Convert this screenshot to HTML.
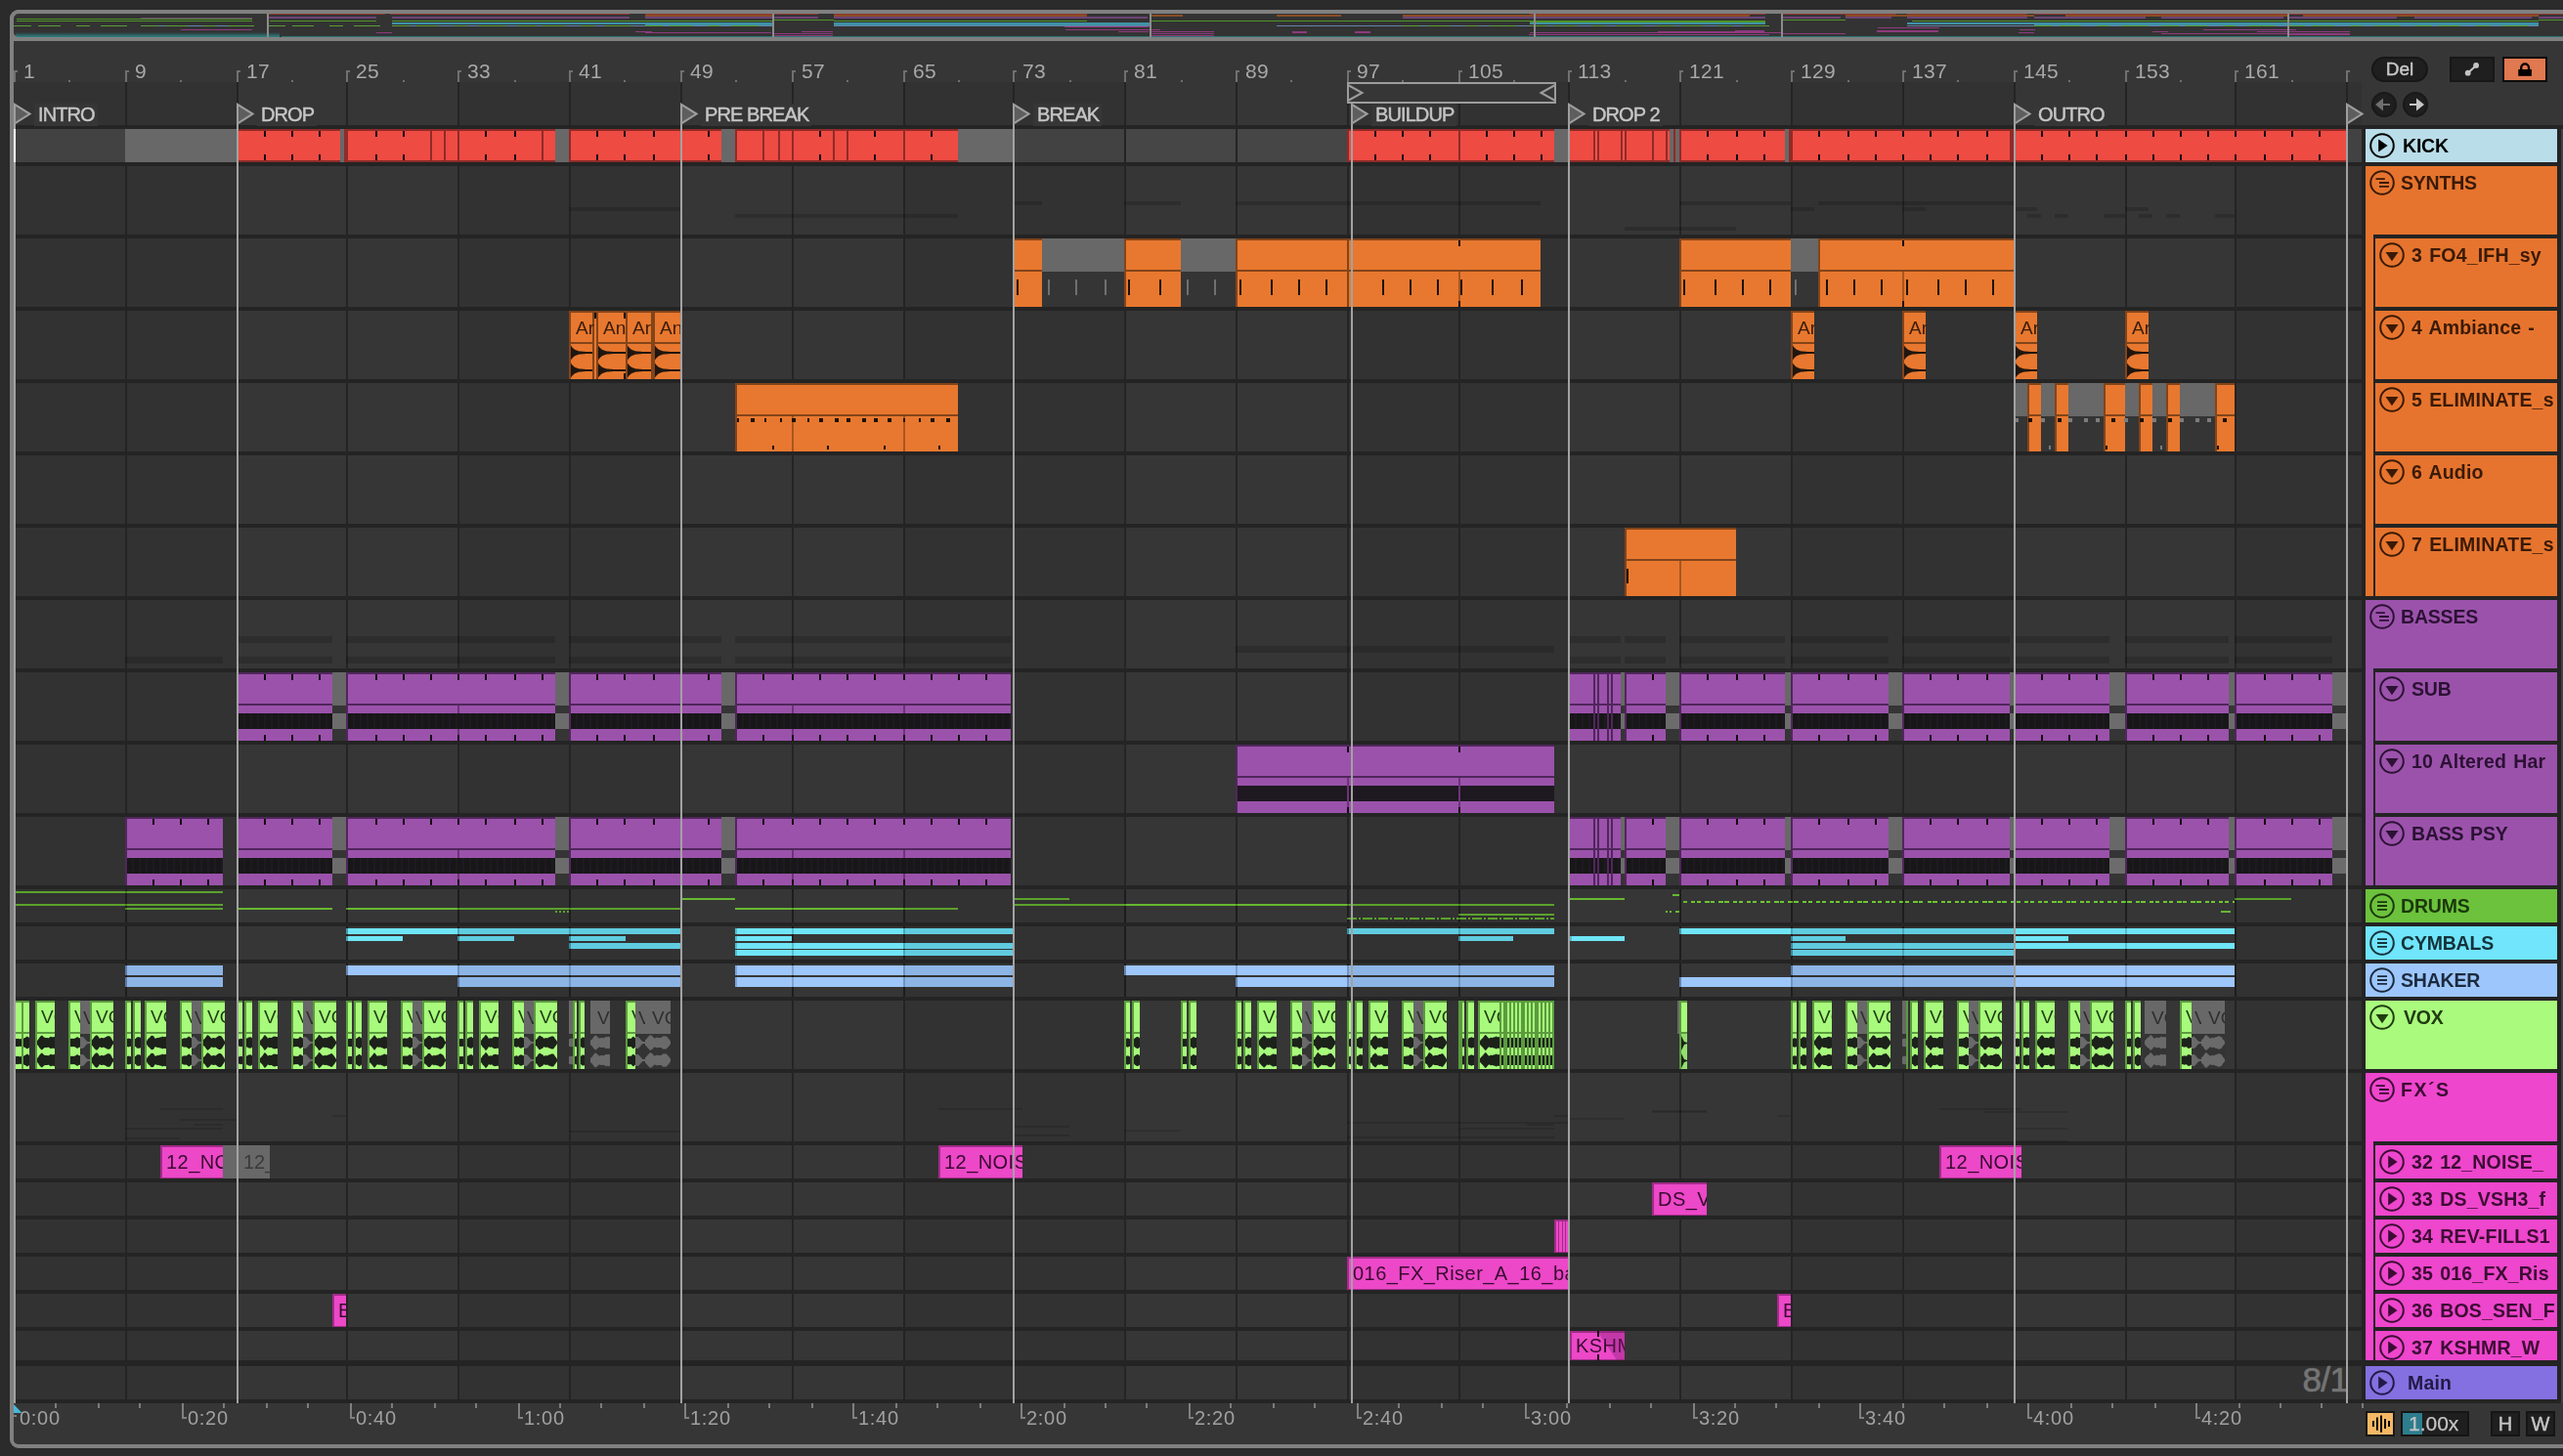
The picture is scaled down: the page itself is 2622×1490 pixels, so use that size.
<!DOCTYPE html><html><head><meta charset="utf-8"><title>Arrangement</title><style>
html,body{margin:0;padding:0}
body{width:2622px;height:1490px;overflow:hidden;position:relative;background:#2b2b2b;font-family:'Liberation Sans',sans-serif}
i,b,svg{position:absolute;display:block;font-style:normal;font-weight:normal}
b{white-space:nowrap;overflow:hidden;will-change:transform}
.rn{font:21px/20px 'Liberation Sans',sans-serif;color:#a8a8a8;letter-spacing:.3px}
.tn{font:20px/20px 'Liberation Sans',sans-serif;color:#a0a0a0;letter-spacing:.7px}
.ll{font:20px/20px 'Liberation Sans',sans-serif;color:#c6c6c6;height:22px;padding:1px 3px 0 4px;letter-spacing:-.9px;-webkit-text-stroke:.45px #c4c4c4}
.th{font:bold 19.5px/19px 'Liberation Sans',sans-serif;height:22px;letter-spacing:.2px;word-spacing:1.5px}
.ct{font:19px/19px 'Liberation Sans',sans-serif;height:22px}
</style></head><body><i style="left:10px;top:10px;width:2700px;height:1472px;box-sizing:border-box;border:4px solid #808080;border-radius:9px;background:#363636"></i><i style="left:14px;top:38px;width:2700px;height:4px;background:#808080"></i><i style="left:10px;top:10px;width:2700px;height:32px;box-sizing:border-box;border:4px solid #808080;border-radius:9px;border-right:none;background:#333"></i><i style="left:14px;top:84px;width:2402px;height:1352px;background:#363636"></i><i style="left:14px;top:84px;width:228px;height:1352px;background:#323232"></i><i style="left:468px;top:84px;width:228px;height:1352px;background:#323232"></i><i style="left:924px;top:84px;width:226px;height:1352px;background:#323232"></i><i style="left:1378px;top:84px;width:226px;height:1352px;background:#323232"></i><i style="left:1832px;top:84px;width:228px;height:1352px;background:#323232"></i><i style="left:2286px;top:84px;width:130px;height:1352px;background:#323232"></i><i style="left:14px;top:132px;width:2402px;height:34px;background:#464646"></i><i style="left:14px;top:132px;width:228px;height:34px;background:#424242"></i><i style="left:468px;top:132px;width:228px;height:34px;background:#424242"></i><i style="left:924px;top:132px;width:226px;height:34px;background:#424242"></i><i style="left:1378px;top:132px;width:226px;height:34px;background:#424242"></i><i style="left:1832px;top:132px;width:228px;height:34px;background:#424242"></i><i style="left:2286px;top:132px;width:130px;height:34px;background:#424242"></i><i style="left:128px;top:84px;width:2px;height:1352px;background:#242424"></i><i style="left:242px;top:84px;width:2px;height:1352px;background:#242424"></i><i style="left:354px;top:84px;width:2px;height:1352px;background:#242424"></i><i style="left:468px;top:84px;width:2px;height:1352px;background:#242424"></i><i style="left:582px;top:84px;width:2px;height:1352px;background:#242424"></i><i style="left:696px;top:84px;width:2px;height:1352px;background:#242424"></i><i style="left:810px;top:84px;width:2px;height:1352px;background:#242424"></i><i style="left:924px;top:84px;width:2px;height:1352px;background:#242424"></i><i style="left:1036px;top:84px;width:2px;height:1352px;background:#242424"></i><i style="left:1150px;top:84px;width:2px;height:1352px;background:#242424"></i><i style="left:1264px;top:84px;width:2px;height:1352px;background:#242424"></i><i style="left:1378px;top:84px;width:2px;height:1352px;background:#242424"></i><i style="left:1492px;top:84px;width:2px;height:1352px;background:#242424"></i><i style="left:1604px;top:84px;width:2px;height:1352px;background:#242424"></i><i style="left:1718px;top:84px;width:2px;height:1352px;background:#242424"></i><i style="left:1832px;top:84px;width:2px;height:1352px;background:#242424"></i><i style="left:1946px;top:84px;width:2px;height:1352px;background:#242424"></i><i style="left:2060px;top:84px;width:2px;height:1352px;background:#242424"></i><i style="left:2174px;top:84px;width:2px;height:1352px;background:#242424"></i><i style="left:2286px;top:84px;width:2px;height:1352px;background:#242424"></i><i style="left:2400px;top:84px;width:2px;height:1352px;background:#242424"></i><i style="left:14px;top:166px;width:2402px;height:4px;background:#242424"></i><i style="left:14px;top:240px;width:2402px;height:4px;background:#242424"></i><i style="left:14px;top:314px;width:2402px;height:4px;background:#242424"></i><i style="left:14px;top:388px;width:2402px;height:4px;background:#242424"></i><i style="left:14px;top:462px;width:2402px;height:4px;background:#242424"></i><i style="left:14px;top:536px;width:2402px;height:4px;background:#242424"></i><i style="left:14px;top:610px;width:2402px;height:4px;background:#242424"></i><i style="left:14px;top:684px;width:2402px;height:4px;background:#242424"></i><i style="left:14px;top:758px;width:2402px;height:4px;background:#242424"></i><i style="left:14px;top:832px;width:2402px;height:4px;background:#242424"></i><i style="left:14px;top:906px;width:2402px;height:4px;background:#242424"></i><i style="left:14px;top:944px;width:2402px;height:4px;background:#242424"></i><i style="left:14px;top:982px;width:2402px;height:4px;background:#242424"></i><i style="left:14px;top:1020px;width:2402px;height:4px;background:#242424"></i><i style="left:14px;top:1094px;width:2402px;height:4px;background:#242424"></i><i style="left:14px;top:1168px;width:2402px;height:4px;background:#242424"></i><i style="left:14px;top:1206px;width:2402px;height:4px;background:#242424"></i><i style="left:14px;top:1244px;width:2402px;height:4px;background:#242424"></i><i style="left:14px;top:1282px;width:2402px;height:4px;background:#242424"></i><i style="left:14px;top:1320px;width:2402px;height:4px;background:#242424"></i><i style="left:14px;top:1358px;width:2402px;height:4px;background:#242424"></i><i style="left:14px;top:1392px;width:2402px;height:6px;background:#242424"></i><i style="left:14px;top:1432px;width:2402px;height:4px;background:#242424"></i><i style="left:14px;top:128px;width:2402px;height:4px;background:#242424"></i><i style="left:128px;top:132px;width:114px;height:34px;background:#686868"></i><i style="left:242px;top:132px;width:106px;height:34px;background:#ee4b43"></i><i style="left:242px;top:132px;width:106px;height:2px;background:#8f2b28"></i><i style="left:242px;top:164px;width:106px;height:2px;background:#8f2b28"></i><i style="left:242px;top:132px;width:2px;height:34px;background:#8f2b28"></i><i style="left:270px;top:134px;width:2px;height:6px;background:#140a12"></i><i style="left:270px;top:158px;width:2px;height:6px;background:#140a12"></i><i style="left:298px;top:134px;width:2px;height:6px;background:#140a12"></i><i style="left:298px;top:158px;width:2px;height:6px;background:#140a12"></i><i style="left:326px;top:134px;width:2px;height:6px;background:#140a12"></i><i style="left:326px;top:158px;width:2px;height:6px;background:#140a12"></i><i style="left:348px;top:132px;width:4px;height:34px;background:#686868"></i><i style="left:352px;top:132px;width:2px;height:34px;background:#ee4b43"></i><i style="left:352px;top:132px;width:2px;height:2px;background:#8f2b28"></i><i style="left:352px;top:164px;width:2px;height:2px;background:#8f2b28"></i><i style="left:352px;top:132px;width:2px;height:34px;background:#8f2b28"></i><i style="left:354px;top:132px;width:86px;height:34px;background:#ee4b43"></i><i style="left:354px;top:132px;width:86px;height:2px;background:#8f2b28"></i><i style="left:354px;top:164px;width:86px;height:2px;background:#8f2b28"></i><i style="left:354px;top:132px;width:2px;height:34px;background:#8f2b28"></i><i style="left:384px;top:134px;width:2px;height:6px;background:#140a12"></i><i style="left:384px;top:158px;width:2px;height:6px;background:#140a12"></i><i style="left:412px;top:134px;width:2px;height:6px;background:#140a12"></i><i style="left:412px;top:158px;width:2px;height:6px;background:#140a12"></i><i style="left:440px;top:132px;width:14px;height:34px;background:#ee4b43"></i><i style="left:440px;top:132px;width:14px;height:2px;background:#8f2b28"></i><i style="left:440px;top:164px;width:14px;height:2px;background:#8f2b28"></i><i style="left:440px;top:132px;width:2px;height:34px;background:#8f2b28"></i><i style="left:454px;top:132px;width:14px;height:34px;background:#ee4b43"></i><i style="left:454px;top:132px;width:14px;height:2px;background:#8f2b28"></i><i style="left:454px;top:164px;width:14px;height:2px;background:#8f2b28"></i><i style="left:454px;top:132px;width:2px;height:34px;background:#8f2b28"></i><i style="left:468px;top:132px;width:86px;height:34px;background:#ee4b43"></i><i style="left:468px;top:132px;width:86px;height:2px;background:#8f2b28"></i><i style="left:468px;top:164px;width:86px;height:2px;background:#8f2b28"></i><i style="left:468px;top:132px;width:2px;height:34px;background:#8f2b28"></i><i style="left:496px;top:134px;width:2px;height:6px;background:#140a12"></i><i style="left:496px;top:158px;width:2px;height:6px;background:#140a12"></i><i style="left:526px;top:134px;width:2px;height:6px;background:#140a12"></i><i style="left:526px;top:158px;width:2px;height:6px;background:#140a12"></i><i style="left:554px;top:132px;width:14px;height:34px;background:#ee4b43"></i><i style="left:554px;top:132px;width:14px;height:2px;background:#8f2b28"></i><i style="left:554px;top:164px;width:14px;height:2px;background:#8f2b28"></i><i style="left:554px;top:132px;width:2px;height:34px;background:#8f2b28"></i><i style="left:568px;top:132px;width:14px;height:34px;background:#686868"></i><i style="left:582px;top:132px;width:156px;height:34px;background:#ee4b43"></i><i style="left:582px;top:132px;width:156px;height:2px;background:#8f2b28"></i><i style="left:582px;top:164px;width:156px;height:2px;background:#8f2b28"></i><i style="left:582px;top:132px;width:2px;height:34px;background:#8f2b28"></i><i style="left:610px;top:134px;width:2px;height:6px;background:#140a12"></i><i style="left:610px;top:158px;width:2px;height:6px;background:#140a12"></i><i style="left:638px;top:134px;width:2px;height:6px;background:#140a12"></i><i style="left:638px;top:158px;width:2px;height:6px;background:#140a12"></i><i style="left:668px;top:134px;width:2px;height:6px;background:#140a12"></i><i style="left:668px;top:158px;width:2px;height:6px;background:#140a12"></i><i style="left:696px;top:134px;width:2px;height:6px;background:#140a12"></i><i style="left:696px;top:158px;width:2px;height:6px;background:#140a12"></i><i style="left:724px;top:134px;width:2px;height:6px;background:#140a12"></i><i style="left:724px;top:158px;width:2px;height:6px;background:#140a12"></i><i style="left:738px;top:132px;width:14px;height:34px;background:#686868"></i><i style="left:752px;top:132px;width:28px;height:34px;background:#ee4b43"></i><i style="left:752px;top:132px;width:28px;height:2px;background:#8f2b28"></i><i style="left:752px;top:164px;width:28px;height:2px;background:#8f2b28"></i><i style="left:752px;top:132px;width:2px;height:34px;background:#8f2b28"></i><i style="left:780px;top:132px;width:16px;height:34px;background:#ee4b43"></i><i style="left:780px;top:132px;width:16px;height:2px;background:#8f2b28"></i><i style="left:780px;top:164px;width:16px;height:2px;background:#8f2b28"></i><i style="left:780px;top:132px;width:2px;height:34px;background:#8f2b28"></i><i style="left:796px;top:132px;width:14px;height:34px;background:#ee4b43"></i><i style="left:796px;top:132px;width:14px;height:2px;background:#8f2b28"></i><i style="left:796px;top:164px;width:14px;height:2px;background:#8f2b28"></i><i style="left:796px;top:132px;width:2px;height:34px;background:#8f2b28"></i><i style="left:810px;top:132px;width:42px;height:34px;background:#ee4b43"></i><i style="left:810px;top:132px;width:42px;height:2px;background:#8f2b28"></i><i style="left:810px;top:164px;width:42px;height:2px;background:#8f2b28"></i><i style="left:810px;top:132px;width:2px;height:34px;background:#8f2b28"></i><i style="left:838px;top:134px;width:2px;height:6px;background:#140a12"></i><i style="left:838px;top:158px;width:2px;height:6px;background:#140a12"></i><i style="left:852px;top:132px;width:14px;height:34px;background:#ee4b43"></i><i style="left:852px;top:132px;width:14px;height:2px;background:#8f2b28"></i><i style="left:852px;top:164px;width:14px;height:2px;background:#8f2b28"></i><i style="left:852px;top:132px;width:2px;height:34px;background:#8f2b28"></i><i style="left:866px;top:132px;width:58px;height:34px;background:#ee4b43"></i><i style="left:866px;top:132px;width:58px;height:2px;background:#8f2b28"></i><i style="left:866px;top:164px;width:58px;height:2px;background:#8f2b28"></i><i style="left:866px;top:132px;width:2px;height:34px;background:#8f2b28"></i><i style="left:894px;top:134px;width:2px;height:6px;background:#140a12"></i><i style="left:894px;top:158px;width:2px;height:6px;background:#140a12"></i><i style="left:924px;top:132px;width:56px;height:34px;background:#ee4b43"></i><i style="left:924px;top:132px;width:56px;height:2px;background:#8f2b28"></i><i style="left:924px;top:164px;width:56px;height:2px;background:#8f2b28"></i><i style="left:924px;top:132px;width:2px;height:34px;background:#8f2b28"></i><i style="left:952px;top:134px;width:2px;height:6px;background:#140a12"></i><i style="left:952px;top:158px;width:2px;height:6px;background:#140a12"></i><i style="left:980px;top:132px;width:56px;height:34px;background:#686868"></i><i style="left:1378px;top:132px;width:114px;height:34px;background:#ee4b43"></i><i style="left:1378px;top:132px;width:114px;height:2px;background:#8f2b28"></i><i style="left:1378px;top:164px;width:114px;height:2px;background:#8f2b28"></i><i style="left:1378px;top:132px;width:2px;height:34px;background:#8f2b28"></i><i style="left:1406px;top:134px;width:2px;height:6px;background:#140a12"></i><i style="left:1406px;top:158px;width:2px;height:6px;background:#140a12"></i><i style="left:1434px;top:134px;width:2px;height:6px;background:#140a12"></i><i style="left:1434px;top:158px;width:2px;height:6px;background:#140a12"></i><i style="left:1462px;top:134px;width:2px;height:6px;background:#140a12"></i><i style="left:1462px;top:158px;width:2px;height:6px;background:#140a12"></i><i style="left:1492px;top:132px;width:98px;height:34px;background:#ee4b43"></i><i style="left:1492px;top:132px;width:98px;height:2px;background:#8f2b28"></i><i style="left:1492px;top:164px;width:98px;height:2px;background:#8f2b28"></i><i style="left:1492px;top:132px;width:2px;height:34px;background:#8f2b28"></i><i style="left:1520px;top:134px;width:2px;height:6px;background:#140a12"></i><i style="left:1520px;top:158px;width:2px;height:6px;background:#140a12"></i><i style="left:1548px;top:134px;width:2px;height:6px;background:#140a12"></i><i style="left:1548px;top:158px;width:2px;height:6px;background:#140a12"></i><i style="left:1576px;top:134px;width:2px;height:6px;background:#140a12"></i><i style="left:1576px;top:158px;width:2px;height:6px;background:#140a12"></i><i style="left:1590px;top:132px;width:14px;height:34px;background:#686868"></i><i style="left:1604px;top:132px;width:26px;height:34px;background:#ee4b43"></i><i style="left:1604px;top:132px;width:26px;height:2px;background:#8f2b28"></i><i style="left:1604px;top:164px;width:26px;height:2px;background:#8f2b28"></i><i style="left:1604px;top:132px;width:2px;height:34px;background:#8f2b28"></i><i style="left:1630px;top:132px;width:4px;height:34px;background:#ff5148"></i><i style="left:1630px;top:132px;width:4px;height:2px;background:#8f2b28"></i><i style="left:1630px;top:164px;width:4px;height:2px;background:#8f2b28"></i><i style="left:1630px;top:132px;width:2px;height:34px;background:#8f2b28"></i><i style="left:1634px;top:132px;width:24px;height:34px;background:#ee4b43"></i><i style="left:1634px;top:132px;width:24px;height:2px;background:#8f2b28"></i><i style="left:1634px;top:164px;width:24px;height:2px;background:#8f2b28"></i><i style="left:1634px;top:132px;width:2px;height:34px;background:#8f2b28"></i><i style="left:1658px;top:132px;width:4px;height:34px;background:#ff5148"></i><i style="left:1658px;top:132px;width:4px;height:2px;background:#8f2b28"></i><i style="left:1658px;top:164px;width:4px;height:2px;background:#8f2b28"></i><i style="left:1658px;top:132px;width:2px;height:34px;background:#8f2b28"></i><i style="left:1662px;top:132px;width:28px;height:34px;background:#ee4b43"></i><i style="left:1662px;top:132px;width:28px;height:2px;background:#8f2b28"></i><i style="left:1662px;top:164px;width:28px;height:2px;background:#8f2b28"></i><i style="left:1662px;top:132px;width:2px;height:34px;background:#8f2b28"></i><i style="left:1690px;top:132px;width:14px;height:34px;background:#ee4b43"></i><i style="left:1690px;top:132px;width:14px;height:2px;background:#8f2b28"></i><i style="left:1690px;top:164px;width:14px;height:2px;background:#8f2b28"></i><i style="left:1690px;top:132px;width:2px;height:34px;background:#8f2b28"></i><i style="left:1704px;top:132px;width:4px;height:34px;background:#ee4b43"></i><i style="left:1704px;top:132px;width:4px;height:2px;background:#8f2b28"></i><i style="left:1704px;top:164px;width:4px;height:2px;background:#8f2b28"></i><i style="left:1704px;top:132px;width:2px;height:34px;background:#8f2b28"></i><i style="left:1708px;top:132px;width:4px;height:34px;background:#686868"></i><i style="left:1712px;top:132px;width:2px;height:34px;background:#8f2b28"></i><i style="left:1714px;top:132px;width:4px;height:34px;background:#686868"></i><i style="left:1718px;top:132px;width:108px;height:34px;background:#ee4b43"></i><i style="left:1718px;top:132px;width:108px;height:2px;background:#8f2b28"></i><i style="left:1718px;top:164px;width:108px;height:2px;background:#8f2b28"></i><i style="left:1718px;top:132px;width:2px;height:34px;background:#8f2b28"></i><i style="left:1746px;top:134px;width:2px;height:6px;background:#140a12"></i><i style="left:1746px;top:158px;width:2px;height:6px;background:#140a12"></i><i style="left:1776px;top:134px;width:2px;height:6px;background:#140a12"></i><i style="left:1776px;top:158px;width:2px;height:6px;background:#140a12"></i><i style="left:1804px;top:134px;width:2px;height:6px;background:#140a12"></i><i style="left:1804px;top:158px;width:2px;height:6px;background:#140a12"></i><i style="left:1826px;top:132px;width:4px;height:34px;background:#686868"></i><i style="left:1830px;top:132px;width:2px;height:34px;background:#8f2b28"></i><i style="left:1832px;top:132px;width:224px;height:34px;background:#ee4b43"></i><i style="left:1832px;top:132px;width:224px;height:2px;background:#8f2b28"></i><i style="left:1832px;top:164px;width:224px;height:2px;background:#8f2b28"></i><i style="left:1832px;top:132px;width:2px;height:34px;background:#8f2b28"></i><i style="left:1860px;top:134px;width:2px;height:6px;background:#140a12"></i><i style="left:1860px;top:158px;width:2px;height:6px;background:#140a12"></i><i style="left:1890px;top:134px;width:2px;height:6px;background:#140a12"></i><i style="left:1890px;top:158px;width:2px;height:6px;background:#140a12"></i><i style="left:1918px;top:134px;width:2px;height:6px;background:#140a12"></i><i style="left:1918px;top:158px;width:2px;height:6px;background:#140a12"></i><i style="left:1946px;top:134px;width:2px;height:6px;background:#140a12"></i><i style="left:1946px;top:158px;width:2px;height:6px;background:#140a12"></i><i style="left:1974px;top:134px;width:2px;height:6px;background:#140a12"></i><i style="left:1974px;top:158px;width:2px;height:6px;background:#140a12"></i><i style="left:2002px;top:134px;width:2px;height:6px;background:#140a12"></i><i style="left:2002px;top:158px;width:2px;height:6px;background:#140a12"></i><i style="left:2032px;top:134px;width:2px;height:6px;background:#140a12"></i><i style="left:2032px;top:158px;width:2px;height:6px;background:#140a12"></i><i style="left:2056px;top:132px;width:4px;height:34px;background:#8f2b28"></i><i style="left:2060px;top:132px;width:340px;height:34px;background:#ee4b43"></i><i style="left:2060px;top:132px;width:340px;height:2px;background:#8f2b28"></i><i style="left:2060px;top:164px;width:340px;height:2px;background:#8f2b28"></i><i style="left:2060px;top:132px;width:2px;height:34px;background:#8f2b28"></i><i style="left:2088px;top:134px;width:2px;height:6px;background:#140a12"></i><i style="left:2088px;top:158px;width:2px;height:6px;background:#140a12"></i><i style="left:2116px;top:134px;width:2px;height:6px;background:#140a12"></i><i style="left:2116px;top:158px;width:2px;height:6px;background:#140a12"></i><i style="left:2144px;top:134px;width:2px;height:6px;background:#140a12"></i><i style="left:2144px;top:158px;width:2px;height:6px;background:#140a12"></i><i style="left:2174px;top:134px;width:2px;height:6px;background:#140a12"></i><i style="left:2174px;top:158px;width:2px;height:6px;background:#140a12"></i><i style="left:2202px;top:134px;width:2px;height:6px;background:#140a12"></i><i style="left:2202px;top:158px;width:2px;height:6px;background:#140a12"></i><i style="left:2230px;top:134px;width:2px;height:6px;background:#140a12"></i><i style="left:2230px;top:158px;width:2px;height:6px;background:#140a12"></i><i style="left:2258px;top:134px;width:2px;height:6px;background:#140a12"></i><i style="left:2258px;top:158px;width:2px;height:6px;background:#140a12"></i><i style="left:2286px;top:134px;width:2px;height:6px;background:#140a12"></i><i style="left:2286px;top:158px;width:2px;height:6px;background:#140a12"></i><i style="left:2316px;top:134px;width:2px;height:6px;background:#140a12"></i><i style="left:2316px;top:158px;width:2px;height:6px;background:#140a12"></i><i style="left:2344px;top:134px;width:2px;height:6px;background:#140a12"></i><i style="left:2344px;top:158px;width:2px;height:6px;background:#140a12"></i><i style="left:2372px;top:134px;width:2px;height:6px;background:#140a12"></i><i style="left:2372px;top:158px;width:2px;height:6px;background:#140a12"></i><i style="left:1036px;top:244px;width:30px;height:70px;background:#e8782f"></i><i style="left:1036px;top:244px;width:30px;height:2px;background:#83441a"></i><i style="left:1036px;top:244px;width:2px;height:70px;background:#83441a"></i><i style="left:1036px;top:276px;width:30px;height:2px;background:#83441a"></i><i style="left:1150px;top:244px;width:58px;height:70px;background:#e8782f"></i><i style="left:1150px;top:244px;width:58px;height:2px;background:#83441a"></i><i style="left:1150px;top:244px;width:2px;height:70px;background:#83441a"></i><i style="left:1150px;top:276px;width:58px;height:2px;background:#83441a"></i><i style="left:1264px;top:244px;width:114px;height:70px;background:#e8782f"></i><i style="left:1264px;top:244px;width:114px;height:2px;background:#83441a"></i><i style="left:1264px;top:244px;width:2px;height:70px;background:#83441a"></i><i style="left:1264px;top:276px;width:114px;height:2px;background:#83441a"></i><i style="left:1378px;top:244px;width:198px;height:70px;background:#e8782f"></i><i style="left:1378px;top:244px;width:198px;height:2px;background:#83441a"></i><i style="left:1378px;top:244px;width:2px;height:70px;background:#83441a"></i><i style="left:1378px;top:276px;width:198px;height:2px;background:#83441a"></i><i style="left:1492px;top:278px;width:2px;height:36px;background:#a85620"></i><i style="left:1492px;top:246px;width:2px;height:6px;background:#140a12"></i><i style="left:1492px;top:308px;width:2px;height:6px;background:#140a12"></i><i style="left:1718px;top:244px;width:114px;height:70px;background:#e8782f"></i><i style="left:1718px;top:244px;width:114px;height:2px;background:#83441a"></i><i style="left:1718px;top:244px;width:2px;height:70px;background:#83441a"></i><i style="left:1718px;top:276px;width:114px;height:2px;background:#83441a"></i><i style="left:1860px;top:244px;width:200px;height:70px;background:#e8782f"></i><i style="left:1860px;top:244px;width:200px;height:2px;background:#83441a"></i><i style="left:1860px;top:244px;width:2px;height:70px;background:#83441a"></i><i style="left:1860px;top:276px;width:200px;height:2px;background:#83441a"></i><i style="left:1946px;top:278px;width:2px;height:36px;background:#a85620"></i><i style="left:1946px;top:246px;width:2px;height:6px;background:#140a12"></i><i style="left:1946px;top:308px;width:2px;height:6px;background:#140a12"></i><i style="left:1066px;top:244px;width:84px;height:34px;background:#686868"></i><i style="left:1066px;top:278px;width:84px;height:36px;background:#353535"></i><i style="left:1208px;top:244px;width:56px;height:34px;background:#686868"></i><i style="left:1208px;top:278px;width:56px;height:36px;background:#353535"></i><i style="left:1832px;top:244px;width:28px;height:34px;background:#686868"></i><i style="left:1832px;top:278px;width:28px;height:36px;background:#353535"></i><i style="left:1040px;top:286px;width:2px;height:16px;background:#1c1208"></i><i style="left:1154px;top:286px;width:2px;height:16px;background:#1c1208"></i><i style="left:1186px;top:286px;width:2px;height:16px;background:#1c1208"></i><i style="left:1268px;top:286px;width:2px;height:16px;background:#1c1208"></i><i style="left:1300px;top:286px;width:2px;height:16px;background:#1c1208"></i><i style="left:1328px;top:286px;width:2px;height:16px;background:#1c1208"></i><i style="left:1356px;top:286px;width:2px;height:16px;background:#1c1208"></i><i style="left:1414px;top:286px;width:2px;height:16px;background:#1c1208"></i><i style="left:1442px;top:286px;width:2px;height:16px;background:#1c1208"></i><i style="left:1470px;top:286px;width:2px;height:16px;background:#1c1208"></i><i style="left:1494px;top:286px;width:2px;height:16px;background:#1c1208"></i><i style="left:1526px;top:286px;width:2px;height:16px;background:#1c1208"></i><i style="left:1556px;top:286px;width:2px;height:16px;background:#1c1208"></i><i style="left:1722px;top:286px;width:2px;height:16px;background:#1c1208"></i><i style="left:1754px;top:286px;width:2px;height:16px;background:#1c1208"></i><i style="left:1782px;top:286px;width:2px;height:16px;background:#1c1208"></i><i style="left:1810px;top:286px;width:2px;height:16px;background:#1c1208"></i><i style="left:1868px;top:286px;width:2px;height:16px;background:#1c1208"></i><i style="left:1896px;top:286px;width:2px;height:16px;background:#1c1208"></i><i style="left:1924px;top:286px;width:2px;height:16px;background:#1c1208"></i><i style="left:1950px;top:286px;width:2px;height:16px;background:#1c1208"></i><i style="left:1982px;top:286px;width:2px;height:16px;background:#1c1208"></i><i style="left:2010px;top:286px;width:2px;height:16px;background:#1c1208"></i><i style="left:2038px;top:286px;width:2px;height:16px;background:#1c1208"></i><i style="left:1072px;top:286px;width:2px;height:16px;background:#707070"></i><i style="left:1100px;top:286px;width:2px;height:16px;background:#707070"></i><i style="left:1130px;top:286px;width:2px;height:16px;background:#707070"></i><i style="left:1214px;top:286px;width:2px;height:16px;background:#707070"></i><i style="left:1242px;top:286px;width:2px;height:16px;background:#707070"></i><i style="left:1836px;top:286px;width:2px;height:16px;background:#707070"></i><i style="left:582px;top:318px;width:26px;height:70px;background:#e8782f"></i><i style="left:582px;top:318px;width:26px;height:2px;background:#83441a"></i><i style="left:582px;top:318px;width:2px;height:70px;background:#83441a"></i><i style="left:582px;top:350px;width:26px;height:2px;background:#83441a"></i><svg style="left:582px;top:352px" width="26" height="36" viewBox="0 0 26 36"><path d="M2.0,1.4 L3.0,2.9 L4.0,4.1 L5.0,5.0 L6.0,5.7 L7.0,6.2 L8.0,6.6 L9.0,7.0 L10.0,7.2 L11.0,7.4 L12.0,7.5 L13.0,7.6 L14.0,7.7 L15.0,7.8 L16.0,7.8 L17.0,7.9 L18.0,7.9 L19.0,7.9 L20.0,7.9 L21.0,8.0 L22.0,8.0 L23.0,8.0 L24.0,8.0 L25.0,8.0 L26.0,8.0 L26.0,10.0 L25.0,10.0 L24.0,10.0 L23.0,10.0 L22.0,10.0 L21.0,10.0 L20.0,10.1 L19.0,10.1 L18.0,10.1 L17.0,10.1 L16.0,10.2 L15.0,10.2 L14.0,10.3 L13.0,10.4 L12.0,10.5 L11.0,10.6 L10.0,10.8 L9.0,11.0 L8.0,11.4 L7.0,11.8 L6.0,12.3 L5.0,13.0 L4.0,13.9 L3.0,15.1 L2.0,16.6ZM2.0,19.4 L3.0,20.9 L4.0,22.1 L5.0,23.0 L6.0,23.7 L7.0,24.2 L8.0,24.6 L9.0,25.0 L10.0,25.2 L11.0,25.4 L12.0,25.5 L13.0,25.6 L14.0,25.7 L15.0,25.8 L16.0,25.8 L17.0,25.9 L18.0,25.9 L19.0,25.9 L20.0,25.9 L21.0,26.0 L22.0,26.0 L23.0,26.0 L24.0,26.0 L25.0,26.0 L26.0,26.0 L26.0,28.0 L25.0,28.0 L24.0,28.0 L23.0,28.0 L22.0,28.0 L21.0,28.0 L20.0,28.1 L19.0,28.1 L18.0,28.1 L17.0,28.1 L16.0,28.2 L15.0,28.2 L14.0,28.3 L13.0,28.4 L12.0,28.5 L11.0,28.6 L10.0,28.8 L9.0,29.0 L8.0,29.4 L7.0,29.8 L6.0,30.3 L5.0,31.0 L4.0,31.9 L3.0,33.1 L2.0,34.6Z" fill="#1f1610"/></svg><i style="left:606px;top:318px;width:2px;height:70px;background:#83441a"></i><b class="ct" style="left:588.5px;top:325.8px;width:19.5px;color:#3a1c08">Ar</b><i style="left:608px;top:318px;width:2px;height:70px;background:#e8782f"></i><i style="left:608px;top:318px;width:2px;height:2px;background:#83441a"></i><i style="left:608px;top:320px;width:2px;height:6px;background:#140a12"></i><i style="left:610px;top:318px;width:30px;height:70px;background:#e8782f"></i><i style="left:610px;top:318px;width:30px;height:2px;background:#83441a"></i><i style="left:610px;top:318px;width:2px;height:70px;background:#83441a"></i><i style="left:610px;top:350px;width:30px;height:2px;background:#83441a"></i><svg style="left:610px;top:352px" width="30" height="36" viewBox="0 0 30 36"><path d="M2.0,1.4 L3.0,2.9 L4.0,4.1 L5.0,5.0 L6.0,5.7 L7.0,6.2 L8.0,6.6 L9.0,7.0 L10.0,7.2 L11.0,7.4 L12.0,7.5 L13.0,7.6 L14.0,7.7 L15.0,7.8 L16.0,7.8 L17.0,7.9 L18.0,7.9 L19.0,7.9 L20.0,7.9 L21.0,8.0 L22.0,8.0 L23.0,8.0 L24.0,8.0 L25.0,8.0 L26.0,8.0 L27.0,8.0 L28.0,8.0 L29.0,8.0 L30.0,8.0 L30.0,10.0 L29.0,10.0 L28.0,10.0 L27.0,10.0 L26.0,10.0 L25.0,10.0 L24.0,10.0 L23.0,10.0 L22.0,10.0 L21.0,10.0 L20.0,10.1 L19.0,10.1 L18.0,10.1 L17.0,10.1 L16.0,10.2 L15.0,10.2 L14.0,10.3 L13.0,10.4 L12.0,10.5 L11.0,10.6 L10.0,10.8 L9.0,11.0 L8.0,11.4 L7.0,11.8 L6.0,12.3 L5.0,13.0 L4.0,13.9 L3.0,15.1 L2.0,16.6ZM2.0,19.4 L3.0,20.9 L4.0,22.1 L5.0,23.0 L6.0,23.7 L7.0,24.2 L8.0,24.6 L9.0,25.0 L10.0,25.2 L11.0,25.4 L12.0,25.5 L13.0,25.6 L14.0,25.7 L15.0,25.8 L16.0,25.8 L17.0,25.9 L18.0,25.9 L19.0,25.9 L20.0,25.9 L21.0,26.0 L22.0,26.0 L23.0,26.0 L24.0,26.0 L25.0,26.0 L26.0,26.0 L27.0,26.0 L28.0,26.0 L29.0,26.0 L30.0,26.0 L30.0,28.0 L29.0,28.0 L28.0,28.0 L27.0,28.0 L26.0,28.0 L25.0,28.0 L24.0,28.0 L23.0,28.0 L22.0,28.0 L21.0,28.0 L20.0,28.1 L19.0,28.1 L18.0,28.1 L17.0,28.1 L16.0,28.2 L15.0,28.2 L14.0,28.3 L13.0,28.4 L12.0,28.5 L11.0,28.6 L10.0,28.8 L9.0,29.0 L8.0,29.4 L7.0,29.8 L6.0,30.3 L5.0,31.0 L4.0,31.9 L3.0,33.1 L2.0,34.6Z" fill="#1f1610"/></svg><b class="ct" style="left:616.5px;top:325.8px;width:23.5px;color:#3a1c08">An</b><i style="left:638px;top:320px;width:2px;height:6px;background:#140a12"></i><i style="left:638px;top:382px;width:2px;height:6px;background:#140a12"></i><i style="left:640px;top:318px;width:28px;height:70px;background:#e8782f"></i><i style="left:640px;top:318px;width:28px;height:2px;background:#83441a"></i><i style="left:640px;top:318px;width:2px;height:70px;background:#83441a"></i><i style="left:640px;top:350px;width:28px;height:2px;background:#83441a"></i><svg style="left:640px;top:352px" width="28" height="36" viewBox="0 0 28 36"><path d="M2.0,1.4 L3.0,2.9 L4.0,4.1 L5.0,5.0 L6.0,5.7 L7.0,6.2 L8.0,6.6 L9.0,7.0 L10.0,7.2 L11.0,7.4 L12.0,7.5 L13.0,7.6 L14.0,7.7 L15.0,7.8 L16.0,7.8 L17.0,7.9 L18.0,7.9 L19.0,7.9 L20.0,7.9 L21.0,8.0 L22.0,8.0 L23.0,8.0 L24.0,8.0 L25.0,8.0 L26.0,8.0 L27.0,8.0 L28.0,8.0 L28.0,10.0 L27.0,10.0 L26.0,10.0 L25.0,10.0 L24.0,10.0 L23.0,10.0 L22.0,10.0 L21.0,10.0 L20.0,10.1 L19.0,10.1 L18.0,10.1 L17.0,10.1 L16.0,10.2 L15.0,10.2 L14.0,10.3 L13.0,10.4 L12.0,10.5 L11.0,10.6 L10.0,10.8 L9.0,11.0 L8.0,11.4 L7.0,11.8 L6.0,12.3 L5.0,13.0 L4.0,13.9 L3.0,15.1 L2.0,16.6ZM2.0,19.4 L3.0,20.9 L4.0,22.1 L5.0,23.0 L6.0,23.7 L7.0,24.2 L8.0,24.6 L9.0,25.0 L10.0,25.2 L11.0,25.4 L12.0,25.5 L13.0,25.6 L14.0,25.7 L15.0,25.8 L16.0,25.8 L17.0,25.9 L18.0,25.9 L19.0,25.9 L20.0,25.9 L21.0,26.0 L22.0,26.0 L23.0,26.0 L24.0,26.0 L25.0,26.0 L26.0,26.0 L27.0,26.0 L28.0,26.0 L28.0,28.0 L27.0,28.0 L26.0,28.0 L25.0,28.0 L24.0,28.0 L23.0,28.0 L22.0,28.0 L21.0,28.0 L20.0,28.1 L19.0,28.1 L18.0,28.1 L17.0,28.1 L16.0,28.2 L15.0,28.2 L14.0,28.3 L13.0,28.4 L12.0,28.5 L11.0,28.6 L10.0,28.8 L9.0,29.0 L8.0,29.4 L7.0,29.8 L6.0,30.3 L5.0,31.0 L4.0,31.9 L3.0,33.1 L2.0,34.6Z" fill="#1f1610"/></svg><i style="left:666px;top:318px;width:2px;height:70px;background:#83441a"></i><b class="ct" style="left:646.5px;top:325.8px;width:21.5px;color:#3a1c08">Ar</b><i style="left:668px;top:318px;width:28px;height:70px;background:#e8782f"></i><i style="left:668px;top:318px;width:28px;height:2px;background:#83441a"></i><i style="left:668px;top:318px;width:2px;height:70px;background:#83441a"></i><i style="left:668px;top:350px;width:28px;height:2px;background:#83441a"></i><svg style="left:668px;top:352px" width="28" height="36" viewBox="0 0 28 36"><path d="M2.0,1.4 L3.0,2.9 L4.0,4.1 L5.0,5.0 L6.0,5.7 L7.0,6.2 L8.0,6.6 L9.0,7.0 L10.0,7.2 L11.0,7.4 L12.0,7.5 L13.0,7.6 L14.0,7.7 L15.0,7.8 L16.0,7.8 L17.0,7.9 L18.0,7.9 L19.0,7.9 L20.0,7.9 L21.0,8.0 L22.0,8.0 L23.0,8.0 L24.0,8.0 L25.0,8.0 L26.0,8.0 L27.0,8.0 L28.0,8.0 L28.0,10.0 L27.0,10.0 L26.0,10.0 L25.0,10.0 L24.0,10.0 L23.0,10.0 L22.0,10.0 L21.0,10.0 L20.0,10.1 L19.0,10.1 L18.0,10.1 L17.0,10.1 L16.0,10.2 L15.0,10.2 L14.0,10.3 L13.0,10.4 L12.0,10.5 L11.0,10.6 L10.0,10.8 L9.0,11.0 L8.0,11.4 L7.0,11.8 L6.0,12.3 L5.0,13.0 L4.0,13.9 L3.0,15.1 L2.0,16.6ZM2.0,19.4 L3.0,20.9 L4.0,22.1 L5.0,23.0 L6.0,23.7 L7.0,24.2 L8.0,24.6 L9.0,25.0 L10.0,25.2 L11.0,25.4 L12.0,25.5 L13.0,25.6 L14.0,25.7 L15.0,25.8 L16.0,25.8 L17.0,25.9 L18.0,25.9 L19.0,25.9 L20.0,25.9 L21.0,26.0 L22.0,26.0 L23.0,26.0 L24.0,26.0 L25.0,26.0 L26.0,26.0 L27.0,26.0 L28.0,26.0 L28.0,28.0 L27.0,28.0 L26.0,28.0 L25.0,28.0 L24.0,28.0 L23.0,28.0 L22.0,28.0 L21.0,28.0 L20.0,28.1 L19.0,28.1 L18.0,28.1 L17.0,28.1 L16.0,28.2 L15.0,28.2 L14.0,28.3 L13.0,28.4 L12.0,28.5 L11.0,28.6 L10.0,28.8 L9.0,29.0 L8.0,29.4 L7.0,29.8 L6.0,30.3 L5.0,31.0 L4.0,31.9 L3.0,33.1 L2.0,34.6Z" fill="#1f1610"/></svg><b class="ct" style="left:674.5px;top:325.8px;width:21.5px;color:#3a1c08">An</b><i style="left:1832px;top:318px;width:24px;height:70px;background:#e8782f"></i><i style="left:1832px;top:318px;width:24px;height:2px;background:#83441a"></i><i style="left:1832px;top:318px;width:2px;height:70px;background:#83441a"></i><i style="left:1832px;top:350px;width:24px;height:2px;background:#83441a"></i><svg style="left:1832px;top:352px" width="24" height="36" viewBox="0 0 24 36"><path d="M2.0,1.4 L3.0,2.9 L4.0,4.1 L5.0,5.0 L6.0,5.7 L7.0,6.2 L8.0,6.6 L9.0,7.0 L10.0,7.2 L11.0,7.4 L12.0,7.5 L13.0,7.6 L14.0,7.7 L15.0,7.8 L16.0,7.8 L17.0,7.9 L18.0,7.9 L19.0,7.9 L20.0,7.9 L21.0,8.0 L22.0,8.0 L23.0,8.0 L24.0,8.0 L24.0,10.0 L23.0,10.0 L22.0,10.0 L21.0,10.0 L20.0,10.1 L19.0,10.1 L18.0,10.1 L17.0,10.1 L16.0,10.2 L15.0,10.2 L14.0,10.3 L13.0,10.4 L12.0,10.5 L11.0,10.6 L10.0,10.8 L9.0,11.0 L8.0,11.4 L7.0,11.8 L6.0,12.3 L5.0,13.0 L4.0,13.9 L3.0,15.1 L2.0,16.6ZM2.0,19.4 L3.0,20.9 L4.0,22.1 L5.0,23.0 L6.0,23.7 L7.0,24.2 L8.0,24.6 L9.0,25.0 L10.0,25.2 L11.0,25.4 L12.0,25.5 L13.0,25.6 L14.0,25.7 L15.0,25.8 L16.0,25.8 L17.0,25.9 L18.0,25.9 L19.0,25.9 L20.0,25.9 L21.0,26.0 L22.0,26.0 L23.0,26.0 L24.0,26.0 L24.0,28.0 L23.0,28.0 L22.0,28.0 L21.0,28.0 L20.0,28.1 L19.0,28.1 L18.0,28.1 L17.0,28.1 L16.0,28.2 L15.0,28.2 L14.0,28.3 L13.0,28.4 L12.0,28.5 L11.0,28.6 L10.0,28.8 L9.0,29.0 L8.0,29.4 L7.0,29.8 L6.0,30.3 L5.0,31.0 L4.0,31.9 L3.0,33.1 L2.0,34.6Z" fill="#1f1610"/></svg><b class="ct" style="left:1838.5px;top:325.8px;width:17.5px;color:#3a1c08">Ar</b><i style="left:1946px;top:318px;width:24px;height:70px;background:#e8782f"></i><i style="left:1946px;top:318px;width:24px;height:2px;background:#83441a"></i><i style="left:1946px;top:318px;width:2px;height:70px;background:#83441a"></i><i style="left:1946px;top:350px;width:24px;height:2px;background:#83441a"></i><svg style="left:1946px;top:352px" width="24" height="36" viewBox="0 0 24 36"><path d="M2.0,1.4 L3.0,2.9 L4.0,4.1 L5.0,5.0 L6.0,5.7 L7.0,6.2 L8.0,6.6 L9.0,7.0 L10.0,7.2 L11.0,7.4 L12.0,7.5 L13.0,7.6 L14.0,7.7 L15.0,7.8 L16.0,7.8 L17.0,7.9 L18.0,7.9 L19.0,7.9 L20.0,7.9 L21.0,8.0 L22.0,8.0 L23.0,8.0 L24.0,8.0 L24.0,10.0 L23.0,10.0 L22.0,10.0 L21.0,10.0 L20.0,10.1 L19.0,10.1 L18.0,10.1 L17.0,10.1 L16.0,10.2 L15.0,10.2 L14.0,10.3 L13.0,10.4 L12.0,10.5 L11.0,10.6 L10.0,10.8 L9.0,11.0 L8.0,11.4 L7.0,11.8 L6.0,12.3 L5.0,13.0 L4.0,13.9 L3.0,15.1 L2.0,16.6ZM2.0,19.4 L3.0,20.9 L4.0,22.1 L5.0,23.0 L6.0,23.7 L7.0,24.2 L8.0,24.6 L9.0,25.0 L10.0,25.2 L11.0,25.4 L12.0,25.5 L13.0,25.6 L14.0,25.7 L15.0,25.8 L16.0,25.8 L17.0,25.9 L18.0,25.9 L19.0,25.9 L20.0,25.9 L21.0,26.0 L22.0,26.0 L23.0,26.0 L24.0,26.0 L24.0,28.0 L23.0,28.0 L22.0,28.0 L21.0,28.0 L20.0,28.1 L19.0,28.1 L18.0,28.1 L17.0,28.1 L16.0,28.2 L15.0,28.2 L14.0,28.3 L13.0,28.4 L12.0,28.5 L11.0,28.6 L10.0,28.8 L9.0,29.0 L8.0,29.4 L7.0,29.8 L6.0,30.3 L5.0,31.0 L4.0,31.9 L3.0,33.1 L2.0,34.6Z" fill="#1f1610"/></svg><b class="ct" style="left:1952.5px;top:325.8px;width:17.5px;color:#3a1c08">Ar</b><i style="left:2060px;top:318px;width:24px;height:70px;background:#e8782f"></i><i style="left:2060px;top:318px;width:24px;height:2px;background:#83441a"></i><i style="left:2060px;top:318px;width:2px;height:70px;background:#83441a"></i><i style="left:2060px;top:350px;width:24px;height:2px;background:#83441a"></i><svg style="left:2060px;top:352px" width="24" height="36" viewBox="0 0 24 36"><path d="M2.0,1.4 L3.0,2.9 L4.0,4.1 L5.0,5.0 L6.0,5.7 L7.0,6.2 L8.0,6.6 L9.0,7.0 L10.0,7.2 L11.0,7.4 L12.0,7.5 L13.0,7.6 L14.0,7.7 L15.0,7.8 L16.0,7.8 L17.0,7.9 L18.0,7.9 L19.0,7.9 L20.0,7.9 L21.0,8.0 L22.0,8.0 L23.0,8.0 L24.0,8.0 L24.0,10.0 L23.0,10.0 L22.0,10.0 L21.0,10.0 L20.0,10.1 L19.0,10.1 L18.0,10.1 L17.0,10.1 L16.0,10.2 L15.0,10.2 L14.0,10.3 L13.0,10.4 L12.0,10.5 L11.0,10.6 L10.0,10.8 L9.0,11.0 L8.0,11.4 L7.0,11.8 L6.0,12.3 L5.0,13.0 L4.0,13.9 L3.0,15.1 L2.0,16.6ZM2.0,19.4 L3.0,20.9 L4.0,22.1 L5.0,23.0 L6.0,23.7 L7.0,24.2 L8.0,24.6 L9.0,25.0 L10.0,25.2 L11.0,25.4 L12.0,25.5 L13.0,25.6 L14.0,25.7 L15.0,25.8 L16.0,25.8 L17.0,25.9 L18.0,25.9 L19.0,25.9 L20.0,25.9 L21.0,26.0 L22.0,26.0 L23.0,26.0 L24.0,26.0 L24.0,28.0 L23.0,28.0 L22.0,28.0 L21.0,28.0 L20.0,28.1 L19.0,28.1 L18.0,28.1 L17.0,28.1 L16.0,28.2 L15.0,28.2 L14.0,28.3 L13.0,28.4 L12.0,28.5 L11.0,28.6 L10.0,28.8 L9.0,29.0 L8.0,29.4 L7.0,29.8 L6.0,30.3 L5.0,31.0 L4.0,31.9 L3.0,33.1 L2.0,34.6Z" fill="#1f1610"/></svg><b class="ct" style="left:2066.5px;top:325.8px;width:17.5px;color:#3a1c08">Ar</b><i style="left:2174px;top:318px;width:24px;height:70px;background:#e8782f"></i><i style="left:2174px;top:318px;width:24px;height:2px;background:#83441a"></i><i style="left:2174px;top:318px;width:2px;height:70px;background:#83441a"></i><i style="left:2174px;top:350px;width:24px;height:2px;background:#83441a"></i><svg style="left:2174px;top:352px" width="24" height="36" viewBox="0 0 24 36"><path d="M2.0,1.4 L3.0,2.9 L4.0,4.1 L5.0,5.0 L6.0,5.7 L7.0,6.2 L8.0,6.6 L9.0,7.0 L10.0,7.2 L11.0,7.4 L12.0,7.5 L13.0,7.6 L14.0,7.7 L15.0,7.8 L16.0,7.8 L17.0,7.9 L18.0,7.9 L19.0,7.9 L20.0,7.9 L21.0,8.0 L22.0,8.0 L23.0,8.0 L24.0,8.0 L24.0,10.0 L23.0,10.0 L22.0,10.0 L21.0,10.0 L20.0,10.1 L19.0,10.1 L18.0,10.1 L17.0,10.1 L16.0,10.2 L15.0,10.2 L14.0,10.3 L13.0,10.4 L12.0,10.5 L11.0,10.6 L10.0,10.8 L9.0,11.0 L8.0,11.4 L7.0,11.8 L6.0,12.3 L5.0,13.0 L4.0,13.9 L3.0,15.1 L2.0,16.6ZM2.0,19.4 L3.0,20.9 L4.0,22.1 L5.0,23.0 L6.0,23.7 L7.0,24.2 L8.0,24.6 L9.0,25.0 L10.0,25.2 L11.0,25.4 L12.0,25.5 L13.0,25.6 L14.0,25.7 L15.0,25.8 L16.0,25.8 L17.0,25.9 L18.0,25.9 L19.0,25.9 L20.0,25.9 L21.0,26.0 L22.0,26.0 L23.0,26.0 L24.0,26.0 L24.0,28.0 L23.0,28.0 L22.0,28.0 L21.0,28.0 L20.0,28.1 L19.0,28.1 L18.0,28.1 L17.0,28.1 L16.0,28.2 L15.0,28.2 L14.0,28.3 L13.0,28.4 L12.0,28.5 L11.0,28.6 L10.0,28.8 L9.0,29.0 L8.0,29.4 L7.0,29.8 L6.0,30.3 L5.0,31.0 L4.0,31.9 L3.0,33.1 L2.0,34.6Z" fill="#1f1610"/></svg><b class="ct" style="left:2180.5px;top:325.8px;width:17.5px;color:#3a1c08">Ar</b><i style="left:752px;top:392px;width:228px;height:70px;background:#e8782f"></i><i style="left:752px;top:392px;width:228px;height:2px;background:#83441a"></i><i style="left:752px;top:392px;width:2px;height:70px;background:#83441a"></i><i style="left:752px;top:424px;width:228px;height:2px;background:#83441a"></i><i style="left:810px;top:426px;width:2px;height:36px;background:#a85620"></i><i style="left:924px;top:426px;width:2px;height:36px;background:#a85620"></i><i style="left:754px;top:428px;width:2px;height:4px;background:#1c1208"></i><i style="left:768px;top:428px;width:4px;height:4px;background:#1c1208"></i><i style="left:782px;top:428px;width:2px;height:4px;background:#1c1208"></i><i style="left:798px;top:428px;width:2px;height:4px;background:#1c1208"></i><i style="left:810px;top:428px;width:4px;height:4px;background:#1c1208"></i><i style="left:826px;top:428px;width:2px;height:4px;background:#1c1208"></i><i style="left:838px;top:428px;width:4px;height:4px;background:#1c1208"></i><i style="left:854px;top:428px;width:4px;height:4px;background:#1c1208"></i><i style="left:866px;top:428px;width:4px;height:4px;background:#1c1208"></i><i style="left:882px;top:428px;width:4px;height:4px;background:#1c1208"></i><i style="left:894px;top:428px;width:4px;height:4px;background:#1c1208"></i><i style="left:908px;top:428px;width:4px;height:4px;background:#1c1208"></i><i style="left:924px;top:428px;width:2px;height:4px;background:#1c1208"></i><i style="left:940px;top:428px;width:2px;height:4px;background:#1c1208"></i><i style="left:952px;top:428px;width:4px;height:4px;background:#1c1208"></i><i style="left:968px;top:428px;width:4px;height:4px;background:#1c1208"></i><i style="left:790px;top:456px;width:2px;height:4px;background:#1c1208"></i><i style="left:846px;top:456px;width:2px;height:4px;background:#1c1208"></i><i style="left:904px;top:456px;width:2px;height:4px;background:#1c1208"></i><i style="left:960px;top:456px;width:2px;height:4px;background:#1c1208"></i><i style="left:2062px;top:392px;width:12px;height:34px;background:#686868"></i><i style="left:2062px;top:426px;width:12px;height:36px;background:#353535"></i><i style="left:2074px;top:392px;width:14px;height:70px;background:#e8782f"></i><i style="left:2074px;top:392px;width:14px;height:2px;background:#83441a"></i><i style="left:2074px;top:392px;width:2px;height:70px;background:#83441a"></i><i style="left:2074px;top:424px;width:14px;height:2px;background:#83441a"></i><i style="left:2088px;top:392px;width:14px;height:34px;background:#686868"></i><i style="left:2088px;top:426px;width:14px;height:36px;background:#353535"></i><i style="left:2102px;top:392px;width:14px;height:70px;background:#e8782f"></i><i style="left:2102px;top:392px;width:14px;height:2px;background:#83441a"></i><i style="left:2102px;top:392px;width:2px;height:70px;background:#83441a"></i><i style="left:2102px;top:424px;width:14px;height:2px;background:#83441a"></i><i style="left:2116px;top:392px;width:36px;height:34px;background:#686868"></i><i style="left:2116px;top:426px;width:36px;height:36px;background:#353535"></i><i style="left:2152px;top:392px;width:22px;height:70px;background:#e8782f"></i><i style="left:2152px;top:392px;width:22px;height:2px;background:#83441a"></i><i style="left:2152px;top:392px;width:2px;height:70px;background:#83441a"></i><i style="left:2152px;top:424px;width:22px;height:2px;background:#83441a"></i><i style="left:2174px;top:392px;width:14px;height:34px;background:#686868"></i><i style="left:2174px;top:426px;width:14px;height:36px;background:#353535"></i><i style="left:2188px;top:392px;width:14px;height:70px;background:#e8782f"></i><i style="left:2188px;top:392px;width:14px;height:2px;background:#83441a"></i><i style="left:2188px;top:392px;width:2px;height:70px;background:#83441a"></i><i style="left:2188px;top:424px;width:14px;height:2px;background:#83441a"></i><i style="left:2202px;top:392px;width:14px;height:34px;background:#686868"></i><i style="left:2202px;top:426px;width:14px;height:36px;background:#353535"></i><i style="left:2216px;top:392px;width:14px;height:70px;background:#e8782f"></i><i style="left:2216px;top:392px;width:14px;height:2px;background:#83441a"></i><i style="left:2216px;top:392px;width:2px;height:70px;background:#83441a"></i><i style="left:2216px;top:424px;width:14px;height:2px;background:#83441a"></i><i style="left:2230px;top:392px;width:36px;height:34px;background:#686868"></i><i style="left:2230px;top:426px;width:36px;height:36px;background:#353535"></i><i style="left:2266px;top:392px;width:20px;height:70px;background:#e8782f"></i><i style="left:2266px;top:392px;width:20px;height:2px;background:#83441a"></i><i style="left:2266px;top:392px;width:2px;height:70px;background:#83441a"></i><i style="left:2266px;top:424px;width:20px;height:2px;background:#83441a"></i><i style="left:2061px;top:428px;width:4px;height:4px;background:#7c7c7c"></i><i style="left:2088px;top:428px;width:4px;height:4px;background:#7c7c7c"></i><i style="left:2116px;top:428px;width:4px;height:4px;background:#7c7c7c"></i><i style="left:2132px;top:428px;width:4px;height:4px;background:#7c7c7c"></i><i style="left:2144px;top:428px;width:4px;height:4px;background:#7c7c7c"></i><i style="left:2173px;top:428px;width:4px;height:4px;background:#7c7c7c"></i><i style="left:2202px;top:428px;width:4px;height:4px;background:#7c7c7c"></i><i style="left:2230px;top:428px;width:4px;height:4px;background:#7c7c7c"></i><i style="left:2246px;top:428px;width:4px;height:4px;background:#7c7c7c"></i><i style="left:2258px;top:428px;width:4px;height:4px;background:#7c7c7c"></i><i style="left:2075px;top:428px;width:4px;height:4px;background:#1c1208"></i><i style="left:2105px;top:428px;width:4px;height:4px;background:#1c1208"></i><i style="left:2160px;top:428px;width:4px;height:4px;background:#1c1208"></i><i style="left:2189px;top:428px;width:4px;height:4px;background:#1c1208"></i><i style="left:2218px;top:428px;width:4px;height:4px;background:#1c1208"></i><i style="left:2274px;top:428px;width:4px;height:4px;background:#1c1208"></i><i style="left:2096px;top:456px;width:2px;height:4px;background:#7c7c7c"></i><i style="left:2210px;top:456px;width:2px;height:4px;background:#7c7c7c"></i><i style="left:2154px;top:456px;width:2px;height:4px;background:#1c1208"></i><i style="left:2268px;top:456px;width:2px;height:4px;background:#1c1208"></i><i style="left:1662px;top:540px;width:114px;height:70px;background:#e8782f"></i><i style="left:1662px;top:540px;width:114px;height:2px;background:#83441a"></i><i style="left:1662px;top:540px;width:2px;height:70px;background:#83441a"></i><i style="left:1662px;top:572px;width:114px;height:2px;background:#83441a"></i><i style="left:1718px;top:574px;width:2px;height:36px;background:#a85620"></i><i style="left:1664px;top:582px;width:2px;height:15px;background:#1c1208"></i><i style="left:242px;top:688px;width:98px;height:70px;background:#9b52ab"></i><i style="left:242px;top:688px;width:98px;height:2px;background:#50265c"></i><i style="left:242px;top:688px;width:2px;height:70px;background:#50265c"></i><i style="left:242px;top:720px;width:98px;height:2px;background:#50265c"></i><i style="left:244px;top:730px;width:96px;height:16px;background:#171717;background-image:repeating-linear-gradient(90deg,transparent 0 5px,rgba(60,30,75,.22) 5px 7px)"></i><i style="left:270px;top:690px;width:2px;height:6px;background:#140a12"></i><i style="left:270px;top:752px;width:2px;height:6px;background:#140a12"></i><i style="left:298px;top:690px;width:2px;height:6px;background:#140a12"></i><i style="left:298px;top:752px;width:2px;height:6px;background:#140a12"></i><i style="left:326px;top:690px;width:2px;height:6px;background:#140a12"></i><i style="left:326px;top:752px;width:2px;height:6px;background:#140a12"></i><i style="left:340px;top:688px;width:14px;height:34px;background:#686868"></i><i style="left:340px;top:722px;width:14px;height:36px;background:#353535"></i><i style="left:340px;top:730px;width:14px;height:16px;background:#6c6c6c"></i><i style="left:354px;top:688px;width:214px;height:70px;background:#9b52ab"></i><i style="left:354px;top:688px;width:214px;height:2px;background:#50265c"></i><i style="left:354px;top:688px;width:2px;height:70px;background:#50265c"></i><i style="left:354px;top:720px;width:214px;height:2px;background:#50265c"></i><i style="left:468px;top:722px;width:2px;height:36px;background:#6c3479"></i><i style="left:468px;top:690px;width:2px;height:6px;background:#140a12"></i><i style="left:468px;top:752px;width:2px;height:6px;background:#140a12"></i><i style="left:356px;top:730px;width:212px;height:16px;background:#171717;background-image:repeating-linear-gradient(90deg,transparent 0 5px,rgba(60,30,75,.22) 5px 7px)"></i><i style="left:384px;top:690px;width:2px;height:6px;background:#140a12"></i><i style="left:384px;top:752px;width:2px;height:6px;background:#140a12"></i><i style="left:412px;top:690px;width:2px;height:6px;background:#140a12"></i><i style="left:412px;top:752px;width:2px;height:6px;background:#140a12"></i><i style="left:440px;top:690px;width:2px;height:6px;background:#140a12"></i><i style="left:440px;top:752px;width:2px;height:6px;background:#140a12"></i><i style="left:496px;top:690px;width:2px;height:6px;background:#140a12"></i><i style="left:496px;top:752px;width:2px;height:6px;background:#140a12"></i><i style="left:526px;top:690px;width:2px;height:6px;background:#140a12"></i><i style="left:526px;top:752px;width:2px;height:6px;background:#140a12"></i><i style="left:554px;top:690px;width:2px;height:6px;background:#140a12"></i><i style="left:554px;top:752px;width:2px;height:6px;background:#140a12"></i><i style="left:568px;top:688px;width:14px;height:34px;background:#686868"></i><i style="left:568px;top:722px;width:14px;height:36px;background:#353535"></i><i style="left:568px;top:730px;width:14px;height:16px;background:#6c6c6c"></i><i style="left:582px;top:688px;width:156px;height:70px;background:#9b52ab"></i><i style="left:582px;top:688px;width:156px;height:2px;background:#50265c"></i><i style="left:582px;top:688px;width:2px;height:70px;background:#50265c"></i><i style="left:582px;top:720px;width:156px;height:2px;background:#50265c"></i><i style="left:696px;top:722px;width:2px;height:36px;background:#6c3479"></i><i style="left:696px;top:690px;width:2px;height:6px;background:#140a12"></i><i style="left:696px;top:752px;width:2px;height:6px;background:#140a12"></i><i style="left:584px;top:730px;width:154px;height:16px;background:#171717;background-image:repeating-linear-gradient(90deg,transparent 0 5px,rgba(60,30,75,.22) 5px 7px)"></i><i style="left:610px;top:690px;width:2px;height:6px;background:#140a12"></i><i style="left:610px;top:752px;width:2px;height:6px;background:#140a12"></i><i style="left:638px;top:690px;width:2px;height:6px;background:#140a12"></i><i style="left:638px;top:752px;width:2px;height:6px;background:#140a12"></i><i style="left:668px;top:690px;width:2px;height:6px;background:#140a12"></i><i style="left:668px;top:752px;width:2px;height:6px;background:#140a12"></i><i style="left:724px;top:690px;width:2px;height:6px;background:#140a12"></i><i style="left:724px;top:752px;width:2px;height:6px;background:#140a12"></i><i style="left:738px;top:688px;width:14px;height:34px;background:#686868"></i><i style="left:738px;top:722px;width:14px;height:36px;background:#353535"></i><i style="left:738px;top:730px;width:14px;height:16px;background:#6c6c6c"></i><i style="left:752px;top:688px;width:282px;height:70px;background:#9b52ab"></i><i style="left:752px;top:688px;width:282px;height:2px;background:#50265c"></i><i style="left:752px;top:688px;width:2px;height:70px;background:#50265c"></i><i style="left:752px;top:720px;width:282px;height:2px;background:#50265c"></i><i style="left:810px;top:722px;width:2px;height:36px;background:#6c3479"></i><i style="left:810px;top:690px;width:2px;height:6px;background:#140a12"></i><i style="left:810px;top:752px;width:2px;height:6px;background:#140a12"></i><i style="left:924px;top:722px;width:2px;height:36px;background:#6c3479"></i><i style="left:924px;top:690px;width:2px;height:6px;background:#140a12"></i><i style="left:924px;top:752px;width:2px;height:6px;background:#140a12"></i><i style="left:754px;top:730px;width:280px;height:16px;background:#171717;background-image:repeating-linear-gradient(90deg,transparent 0 5px,rgba(60,30,75,.22) 5px 7px)"></i><i style="left:780px;top:690px;width:2px;height:6px;background:#140a12"></i><i style="left:780px;top:752px;width:2px;height:6px;background:#140a12"></i><i style="left:838px;top:690px;width:2px;height:6px;background:#140a12"></i><i style="left:838px;top:752px;width:2px;height:6px;background:#140a12"></i><i style="left:866px;top:690px;width:2px;height:6px;background:#140a12"></i><i style="left:866px;top:752px;width:2px;height:6px;background:#140a12"></i><i style="left:894px;top:690px;width:2px;height:6px;background:#140a12"></i><i style="left:894px;top:752px;width:2px;height:6px;background:#140a12"></i><i style="left:952px;top:690px;width:2px;height:6px;background:#140a12"></i><i style="left:952px;top:752px;width:2px;height:6px;background:#140a12"></i><i style="left:980px;top:690px;width:2px;height:6px;background:#140a12"></i><i style="left:980px;top:752px;width:2px;height:6px;background:#140a12"></i><i style="left:1008px;top:690px;width:2px;height:6px;background:#140a12"></i><i style="left:1008px;top:752px;width:2px;height:6px;background:#140a12"></i><i style="left:1604px;top:688px;width:26px;height:70px;background:#9b52ab"></i><i style="left:1604px;top:688px;width:26px;height:2px;background:#50265c"></i><i style="left:1604px;top:688px;width:2px;height:70px;background:#50265c"></i><i style="left:1604px;top:720px;width:26px;height:2px;background:#50265c"></i><i style="left:1606px;top:730px;width:24px;height:16px;background:#171717;background-image:repeating-linear-gradient(90deg,transparent 0 5px,rgba(60,30,75,.22) 5px 7px)"></i><i style="left:1630px;top:688px;width:4px;height:70px;background:#9b52ab"></i><i style="left:1630px;top:688px;width:4px;height:2px;background:#50265c"></i><i style="left:1630px;top:688px;width:2px;height:70px;background:#50265c"></i><i style="left:1630px;top:720px;width:4px;height:2px;background:#50265c"></i><i style="left:1632px;top:730px;width:2px;height:16px;background:#171717;background-image:repeating-linear-gradient(90deg,transparent 0 5px,rgba(60,30,75,.22) 5px 7px)"></i><i style="left:1634px;top:688px;width:10px;height:70px;background:#9b52ab"></i><i style="left:1634px;top:688px;width:10px;height:2px;background:#50265c"></i><i style="left:1634px;top:688px;width:2px;height:70px;background:#50265c"></i><i style="left:1634px;top:720px;width:10px;height:2px;background:#50265c"></i><i style="left:1636px;top:730px;width:8px;height:16px;background:#171717;background-image:repeating-linear-gradient(90deg,transparent 0 5px,rgba(60,30,75,.22) 5px 7px)"></i><i style="left:1644px;top:688px;width:4px;height:70px;background:#9b52ab"></i><i style="left:1644px;top:688px;width:4px;height:2px;background:#50265c"></i><i style="left:1644px;top:688px;width:2px;height:70px;background:#50265c"></i><i style="left:1644px;top:720px;width:4px;height:2px;background:#50265c"></i><i style="left:1646px;top:730px;width:2px;height:16px;background:#171717;background-image:repeating-linear-gradient(90deg,transparent 0 5px,rgba(60,30,75,.22) 5px 7px)"></i><i style="left:1648px;top:688px;width:10px;height:70px;background:#9b52ab"></i><i style="left:1648px;top:688px;width:10px;height:2px;background:#50265c"></i><i style="left:1648px;top:688px;width:2px;height:70px;background:#50265c"></i><i style="left:1648px;top:720px;width:10px;height:2px;background:#50265c"></i><i style="left:1650px;top:730px;width:8px;height:16px;background:#171717;background-image:repeating-linear-gradient(90deg,transparent 0 5px,rgba(60,30,75,.22) 5px 7px)"></i><i style="left:1658px;top:688px;width:4px;height:34px;background:#686868"></i><i style="left:1658px;top:722px;width:4px;height:36px;background:#353535"></i><i style="left:1658px;top:730px;width:4px;height:16px;background:#6c6c6c"></i><i style="left:1662px;top:688px;width:42px;height:70px;background:#9b52ab"></i><i style="left:1662px;top:688px;width:42px;height:2px;background:#50265c"></i><i style="left:1662px;top:688px;width:2px;height:70px;background:#50265c"></i><i style="left:1662px;top:720px;width:42px;height:2px;background:#50265c"></i><i style="left:1664px;top:730px;width:40px;height:16px;background:#171717;background-image:repeating-linear-gradient(90deg,transparent 0 5px,rgba(60,30,75,.22) 5px 7px)"></i><i style="left:1690px;top:690px;width:2px;height:6px;background:#140a12"></i><i style="left:1690px;top:752px;width:2px;height:6px;background:#140a12"></i><i style="left:1704px;top:688px;width:14px;height:34px;background:#686868"></i><i style="left:1704px;top:722px;width:14px;height:36px;background:#353535"></i><i style="left:1704px;top:730px;width:14px;height:16px;background:#6c6c6c"></i><i style="left:1718px;top:688px;width:108px;height:70px;background:#9b52ab"></i><i style="left:1718px;top:688px;width:108px;height:2px;background:#50265c"></i><i style="left:1718px;top:688px;width:2px;height:70px;background:#50265c"></i><i style="left:1718px;top:720px;width:108px;height:2px;background:#50265c"></i><i style="left:1720px;top:730px;width:106px;height:16px;background:#171717;background-image:repeating-linear-gradient(90deg,transparent 0 5px,rgba(60,30,75,.22) 5px 7px)"></i><i style="left:1746px;top:690px;width:2px;height:6px;background:#140a12"></i><i style="left:1746px;top:752px;width:2px;height:6px;background:#140a12"></i><i style="left:1776px;top:690px;width:2px;height:6px;background:#140a12"></i><i style="left:1776px;top:752px;width:2px;height:6px;background:#140a12"></i><i style="left:1804px;top:690px;width:2px;height:6px;background:#140a12"></i><i style="left:1804px;top:752px;width:2px;height:6px;background:#140a12"></i><i style="left:1826px;top:688px;width:6px;height:34px;background:#686868"></i><i style="left:1826px;top:722px;width:6px;height:36px;background:#353535"></i><i style="left:1826px;top:730px;width:6px;height:16px;background:#6c6c6c"></i><i style="left:1832px;top:688px;width:100px;height:70px;background:#9b52ab"></i><i style="left:1832px;top:688px;width:100px;height:2px;background:#50265c"></i><i style="left:1832px;top:688px;width:2px;height:70px;background:#50265c"></i><i style="left:1832px;top:720px;width:100px;height:2px;background:#50265c"></i><i style="left:1834px;top:730px;width:98px;height:16px;background:#171717;background-image:repeating-linear-gradient(90deg,transparent 0 5px,rgba(60,30,75,.22) 5px 7px)"></i><i style="left:1860px;top:690px;width:2px;height:6px;background:#140a12"></i><i style="left:1860px;top:752px;width:2px;height:6px;background:#140a12"></i><i style="left:1890px;top:690px;width:2px;height:6px;background:#140a12"></i><i style="left:1890px;top:752px;width:2px;height:6px;background:#140a12"></i><i style="left:1918px;top:690px;width:2px;height:6px;background:#140a12"></i><i style="left:1918px;top:752px;width:2px;height:6px;background:#140a12"></i><i style="left:1932px;top:688px;width:14px;height:34px;background:#686868"></i><i style="left:1932px;top:722px;width:14px;height:36px;background:#353535"></i><i style="left:1932px;top:730px;width:14px;height:16px;background:#6c6c6c"></i><i style="left:1946px;top:688px;width:110px;height:70px;background:#9b52ab"></i><i style="left:1946px;top:688px;width:110px;height:2px;background:#50265c"></i><i style="left:1946px;top:688px;width:2px;height:70px;background:#50265c"></i><i style="left:1946px;top:720px;width:110px;height:2px;background:#50265c"></i><i style="left:1948px;top:730px;width:108px;height:16px;background:#171717;background-image:repeating-linear-gradient(90deg,transparent 0 5px,rgba(60,30,75,.22) 5px 7px)"></i><i style="left:1974px;top:690px;width:2px;height:6px;background:#140a12"></i><i style="left:1974px;top:752px;width:2px;height:6px;background:#140a12"></i><i style="left:2002px;top:690px;width:2px;height:6px;background:#140a12"></i><i style="left:2002px;top:752px;width:2px;height:6px;background:#140a12"></i><i style="left:2032px;top:690px;width:2px;height:6px;background:#140a12"></i><i style="left:2032px;top:752px;width:2px;height:6px;background:#140a12"></i><i style="left:2056px;top:688px;width:4px;height:34px;background:#686868"></i><i style="left:2056px;top:722px;width:4px;height:36px;background:#353535"></i><i style="left:2056px;top:730px;width:4px;height:16px;background:#6c6c6c"></i><i style="left:2060px;top:688px;width:98px;height:70px;background:#9b52ab"></i><i style="left:2060px;top:688px;width:98px;height:2px;background:#50265c"></i><i style="left:2060px;top:688px;width:2px;height:70px;background:#50265c"></i><i style="left:2060px;top:720px;width:98px;height:2px;background:#50265c"></i><i style="left:2062px;top:730px;width:96px;height:16px;background:#171717;background-image:repeating-linear-gradient(90deg,transparent 0 5px,rgba(60,30,75,.22) 5px 7px)"></i><i style="left:2088px;top:690px;width:2px;height:6px;background:#140a12"></i><i style="left:2088px;top:752px;width:2px;height:6px;background:#140a12"></i><i style="left:2116px;top:690px;width:2px;height:6px;background:#140a12"></i><i style="left:2116px;top:752px;width:2px;height:6px;background:#140a12"></i><i style="left:2144px;top:690px;width:2px;height:6px;background:#140a12"></i><i style="left:2144px;top:752px;width:2px;height:6px;background:#140a12"></i><i style="left:2158px;top:688px;width:16px;height:34px;background:#686868"></i><i style="left:2158px;top:722px;width:16px;height:36px;background:#353535"></i><i style="left:2158px;top:730px;width:16px;height:16px;background:#6c6c6c"></i><i style="left:2174px;top:688px;width:106px;height:70px;background:#9b52ab"></i><i style="left:2174px;top:688px;width:106px;height:2px;background:#50265c"></i><i style="left:2174px;top:688px;width:2px;height:70px;background:#50265c"></i><i style="left:2174px;top:720px;width:106px;height:2px;background:#50265c"></i><i style="left:2176px;top:730px;width:104px;height:16px;background:#171717;background-image:repeating-linear-gradient(90deg,transparent 0 5px,rgba(60,30,75,.22) 5px 7px)"></i><i style="left:2202px;top:690px;width:2px;height:6px;background:#140a12"></i><i style="left:2202px;top:752px;width:2px;height:6px;background:#140a12"></i><i style="left:2230px;top:690px;width:2px;height:6px;background:#140a12"></i><i style="left:2230px;top:752px;width:2px;height:6px;background:#140a12"></i><i style="left:2258px;top:690px;width:2px;height:6px;background:#140a12"></i><i style="left:2258px;top:752px;width:2px;height:6px;background:#140a12"></i><i style="left:2280px;top:688px;width:6px;height:34px;background:#686868"></i><i style="left:2280px;top:722px;width:6px;height:36px;background:#353535"></i><i style="left:2280px;top:730px;width:6px;height:16px;background:#6c6c6c"></i><i style="left:2286px;top:688px;width:100px;height:70px;background:#9b52ab"></i><i style="left:2286px;top:688px;width:100px;height:2px;background:#50265c"></i><i style="left:2286px;top:688px;width:2px;height:70px;background:#50265c"></i><i style="left:2286px;top:720px;width:100px;height:2px;background:#50265c"></i><i style="left:2288px;top:730px;width:98px;height:16px;background:#171717;background-image:repeating-linear-gradient(90deg,transparent 0 5px,rgba(60,30,75,.22) 5px 7px)"></i><i style="left:2316px;top:690px;width:2px;height:6px;background:#140a12"></i><i style="left:2316px;top:752px;width:2px;height:6px;background:#140a12"></i><i style="left:2344px;top:690px;width:2px;height:6px;background:#140a12"></i><i style="left:2344px;top:752px;width:2px;height:6px;background:#140a12"></i><i style="left:2372px;top:690px;width:2px;height:6px;background:#140a12"></i><i style="left:2372px;top:752px;width:2px;height:6px;background:#140a12"></i><i style="left:2386px;top:688px;width:14px;height:34px;background:#686868"></i><i style="left:2386px;top:722px;width:14px;height:36px;background:#353535"></i><i style="left:2386px;top:730px;width:14px;height:16px;background:#6c6c6c"></i><i style="left:242px;top:836px;width:98px;height:70px;background:#9b52ab"></i><i style="left:242px;top:836px;width:98px;height:2px;background:#50265c"></i><i style="left:242px;top:836px;width:2px;height:70px;background:#50265c"></i><i style="left:242px;top:868px;width:98px;height:2px;background:#50265c"></i><i style="left:244px;top:878px;width:96px;height:16px;background:#171717;background-image:repeating-linear-gradient(90deg,transparent 0 5px,rgba(60,30,75,.22) 5px 7px)"></i><i style="left:270px;top:838px;width:2px;height:6px;background:#140a12"></i><i style="left:270px;top:900px;width:2px;height:6px;background:#140a12"></i><i style="left:298px;top:838px;width:2px;height:6px;background:#140a12"></i><i style="left:298px;top:900px;width:2px;height:6px;background:#140a12"></i><i style="left:326px;top:838px;width:2px;height:6px;background:#140a12"></i><i style="left:326px;top:900px;width:2px;height:6px;background:#140a12"></i><i style="left:340px;top:836px;width:14px;height:34px;background:#686868"></i><i style="left:340px;top:870px;width:14px;height:36px;background:#353535"></i><i style="left:340px;top:878px;width:14px;height:16px;background:#6c6c6c"></i><i style="left:354px;top:836px;width:214px;height:70px;background:#9b52ab"></i><i style="left:354px;top:836px;width:214px;height:2px;background:#50265c"></i><i style="left:354px;top:836px;width:2px;height:70px;background:#50265c"></i><i style="left:354px;top:868px;width:214px;height:2px;background:#50265c"></i><i style="left:468px;top:870px;width:2px;height:36px;background:#6c3479"></i><i style="left:468px;top:838px;width:2px;height:6px;background:#140a12"></i><i style="left:468px;top:900px;width:2px;height:6px;background:#140a12"></i><i style="left:356px;top:878px;width:212px;height:16px;background:#171717;background-image:repeating-linear-gradient(90deg,transparent 0 5px,rgba(60,30,75,.22) 5px 7px)"></i><i style="left:384px;top:838px;width:2px;height:6px;background:#140a12"></i><i style="left:384px;top:900px;width:2px;height:6px;background:#140a12"></i><i style="left:412px;top:838px;width:2px;height:6px;background:#140a12"></i><i style="left:412px;top:900px;width:2px;height:6px;background:#140a12"></i><i style="left:440px;top:838px;width:2px;height:6px;background:#140a12"></i><i style="left:440px;top:900px;width:2px;height:6px;background:#140a12"></i><i style="left:496px;top:838px;width:2px;height:6px;background:#140a12"></i><i style="left:496px;top:900px;width:2px;height:6px;background:#140a12"></i><i style="left:526px;top:838px;width:2px;height:6px;background:#140a12"></i><i style="left:526px;top:900px;width:2px;height:6px;background:#140a12"></i><i style="left:554px;top:838px;width:2px;height:6px;background:#140a12"></i><i style="left:554px;top:900px;width:2px;height:6px;background:#140a12"></i><i style="left:568px;top:836px;width:14px;height:34px;background:#686868"></i><i style="left:568px;top:870px;width:14px;height:36px;background:#353535"></i><i style="left:568px;top:878px;width:14px;height:16px;background:#6c6c6c"></i><i style="left:582px;top:836px;width:156px;height:70px;background:#9b52ab"></i><i style="left:582px;top:836px;width:156px;height:2px;background:#50265c"></i><i style="left:582px;top:836px;width:2px;height:70px;background:#50265c"></i><i style="left:582px;top:868px;width:156px;height:2px;background:#50265c"></i><i style="left:696px;top:870px;width:2px;height:36px;background:#6c3479"></i><i style="left:696px;top:838px;width:2px;height:6px;background:#140a12"></i><i style="left:696px;top:900px;width:2px;height:6px;background:#140a12"></i><i style="left:584px;top:878px;width:154px;height:16px;background:#171717;background-image:repeating-linear-gradient(90deg,transparent 0 5px,rgba(60,30,75,.22) 5px 7px)"></i><i style="left:610px;top:838px;width:2px;height:6px;background:#140a12"></i><i style="left:610px;top:900px;width:2px;height:6px;background:#140a12"></i><i style="left:638px;top:838px;width:2px;height:6px;background:#140a12"></i><i style="left:638px;top:900px;width:2px;height:6px;background:#140a12"></i><i style="left:668px;top:838px;width:2px;height:6px;background:#140a12"></i><i style="left:668px;top:900px;width:2px;height:6px;background:#140a12"></i><i style="left:724px;top:838px;width:2px;height:6px;background:#140a12"></i><i style="left:724px;top:900px;width:2px;height:6px;background:#140a12"></i><i style="left:738px;top:836px;width:14px;height:34px;background:#686868"></i><i style="left:738px;top:870px;width:14px;height:36px;background:#353535"></i><i style="left:738px;top:878px;width:14px;height:16px;background:#6c6c6c"></i><i style="left:752px;top:836px;width:282px;height:70px;background:#9b52ab"></i><i style="left:752px;top:836px;width:282px;height:2px;background:#50265c"></i><i style="left:752px;top:836px;width:2px;height:70px;background:#50265c"></i><i style="left:752px;top:868px;width:282px;height:2px;background:#50265c"></i><i style="left:810px;top:870px;width:2px;height:36px;background:#6c3479"></i><i style="left:810px;top:838px;width:2px;height:6px;background:#140a12"></i><i style="left:810px;top:900px;width:2px;height:6px;background:#140a12"></i><i style="left:924px;top:870px;width:2px;height:36px;background:#6c3479"></i><i style="left:924px;top:838px;width:2px;height:6px;background:#140a12"></i><i style="left:924px;top:900px;width:2px;height:6px;background:#140a12"></i><i style="left:754px;top:878px;width:280px;height:16px;background:#171717;background-image:repeating-linear-gradient(90deg,transparent 0 5px,rgba(60,30,75,.22) 5px 7px)"></i><i style="left:780px;top:838px;width:2px;height:6px;background:#140a12"></i><i style="left:780px;top:900px;width:2px;height:6px;background:#140a12"></i><i style="left:838px;top:838px;width:2px;height:6px;background:#140a12"></i><i style="left:838px;top:900px;width:2px;height:6px;background:#140a12"></i><i style="left:866px;top:838px;width:2px;height:6px;background:#140a12"></i><i style="left:866px;top:900px;width:2px;height:6px;background:#140a12"></i><i style="left:894px;top:838px;width:2px;height:6px;background:#140a12"></i><i style="left:894px;top:900px;width:2px;height:6px;background:#140a12"></i><i style="left:952px;top:838px;width:2px;height:6px;background:#140a12"></i><i style="left:952px;top:900px;width:2px;height:6px;background:#140a12"></i><i style="left:980px;top:838px;width:2px;height:6px;background:#140a12"></i><i style="left:980px;top:900px;width:2px;height:6px;background:#140a12"></i><i style="left:1008px;top:838px;width:2px;height:6px;background:#140a12"></i><i style="left:1008px;top:900px;width:2px;height:6px;background:#140a12"></i><i style="left:1604px;top:836px;width:26px;height:70px;background:#9b52ab"></i><i style="left:1604px;top:836px;width:26px;height:2px;background:#50265c"></i><i style="left:1604px;top:836px;width:2px;height:70px;background:#50265c"></i><i style="left:1604px;top:868px;width:26px;height:2px;background:#50265c"></i><i style="left:1606px;top:878px;width:24px;height:16px;background:#171717;background-image:repeating-linear-gradient(90deg,transparent 0 5px,rgba(60,30,75,.22) 5px 7px)"></i><i style="left:1630px;top:836px;width:4px;height:70px;background:#9b52ab"></i><i style="left:1630px;top:836px;width:4px;height:2px;background:#50265c"></i><i style="left:1630px;top:836px;width:2px;height:70px;background:#50265c"></i><i style="left:1630px;top:868px;width:4px;height:2px;background:#50265c"></i><i style="left:1632px;top:878px;width:2px;height:16px;background:#171717;background-image:repeating-linear-gradient(90deg,transparent 0 5px,rgba(60,30,75,.22) 5px 7px)"></i><i style="left:1634px;top:836px;width:10px;height:70px;background:#9b52ab"></i><i style="left:1634px;top:836px;width:10px;height:2px;background:#50265c"></i><i style="left:1634px;top:836px;width:2px;height:70px;background:#50265c"></i><i style="left:1634px;top:868px;width:10px;height:2px;background:#50265c"></i><i style="left:1636px;top:878px;width:8px;height:16px;background:#171717;background-image:repeating-linear-gradient(90deg,transparent 0 5px,rgba(60,30,75,.22) 5px 7px)"></i><i style="left:1644px;top:836px;width:4px;height:70px;background:#9b52ab"></i><i style="left:1644px;top:836px;width:4px;height:2px;background:#50265c"></i><i style="left:1644px;top:836px;width:2px;height:70px;background:#50265c"></i><i style="left:1644px;top:868px;width:4px;height:2px;background:#50265c"></i><i style="left:1646px;top:878px;width:2px;height:16px;background:#171717;background-image:repeating-linear-gradient(90deg,transparent 0 5px,rgba(60,30,75,.22) 5px 7px)"></i><i style="left:1648px;top:836px;width:10px;height:70px;background:#9b52ab"></i><i style="left:1648px;top:836px;width:10px;height:2px;background:#50265c"></i><i style="left:1648px;top:836px;width:2px;height:70px;background:#50265c"></i><i style="left:1648px;top:868px;width:10px;height:2px;background:#50265c"></i><i style="left:1650px;top:878px;width:8px;height:16px;background:#171717;background-image:repeating-linear-gradient(90deg,transparent 0 5px,rgba(60,30,75,.22) 5px 7px)"></i><i style="left:1658px;top:836px;width:4px;height:34px;background:#686868"></i><i style="left:1658px;top:870px;width:4px;height:36px;background:#353535"></i><i style="left:1658px;top:878px;width:4px;height:16px;background:#6c6c6c"></i><i style="left:1662px;top:836px;width:42px;height:70px;background:#9b52ab"></i><i style="left:1662px;top:836px;width:42px;height:2px;background:#50265c"></i><i style="left:1662px;top:836px;width:2px;height:70px;background:#50265c"></i><i style="left:1662px;top:868px;width:42px;height:2px;background:#50265c"></i><i style="left:1664px;top:878px;width:40px;height:16px;background:#171717;background-image:repeating-linear-gradient(90deg,transparent 0 5px,rgba(60,30,75,.22) 5px 7px)"></i><i style="left:1690px;top:838px;width:2px;height:6px;background:#140a12"></i><i style="left:1690px;top:900px;width:2px;height:6px;background:#140a12"></i><i style="left:1704px;top:836px;width:14px;height:34px;background:#686868"></i><i style="left:1704px;top:870px;width:14px;height:36px;background:#353535"></i><i style="left:1704px;top:878px;width:14px;height:16px;background:#6c6c6c"></i><i style="left:1718px;top:836px;width:108px;height:70px;background:#9b52ab"></i><i style="left:1718px;top:836px;width:108px;height:2px;background:#50265c"></i><i style="left:1718px;top:836px;width:2px;height:70px;background:#50265c"></i><i style="left:1718px;top:868px;width:108px;height:2px;background:#50265c"></i><i style="left:1720px;top:878px;width:106px;height:16px;background:#171717;background-image:repeating-linear-gradient(90deg,transparent 0 5px,rgba(60,30,75,.22) 5px 7px)"></i><i style="left:1746px;top:838px;width:2px;height:6px;background:#140a12"></i><i style="left:1746px;top:900px;width:2px;height:6px;background:#140a12"></i><i style="left:1776px;top:838px;width:2px;height:6px;background:#140a12"></i><i style="left:1776px;top:900px;width:2px;height:6px;background:#140a12"></i><i style="left:1804px;top:838px;width:2px;height:6px;background:#140a12"></i><i style="left:1804px;top:900px;width:2px;height:6px;background:#140a12"></i><i style="left:1826px;top:836px;width:6px;height:34px;background:#686868"></i><i style="left:1826px;top:870px;width:6px;height:36px;background:#353535"></i><i style="left:1826px;top:878px;width:6px;height:16px;background:#6c6c6c"></i><i style="left:1832px;top:836px;width:100px;height:70px;background:#9b52ab"></i><i style="left:1832px;top:836px;width:100px;height:2px;background:#50265c"></i><i style="left:1832px;top:836px;width:2px;height:70px;background:#50265c"></i><i style="left:1832px;top:868px;width:100px;height:2px;background:#50265c"></i><i style="left:1834px;top:878px;width:98px;height:16px;background:#171717;background-image:repeating-linear-gradient(90deg,transparent 0 5px,rgba(60,30,75,.22) 5px 7px)"></i><i style="left:1860px;top:838px;width:2px;height:6px;background:#140a12"></i><i style="left:1860px;top:900px;width:2px;height:6px;background:#140a12"></i><i style="left:1890px;top:838px;width:2px;height:6px;background:#140a12"></i><i style="left:1890px;top:900px;width:2px;height:6px;background:#140a12"></i><i style="left:1918px;top:838px;width:2px;height:6px;background:#140a12"></i><i style="left:1918px;top:900px;width:2px;height:6px;background:#140a12"></i><i style="left:1932px;top:836px;width:14px;height:34px;background:#686868"></i><i style="left:1932px;top:870px;width:14px;height:36px;background:#353535"></i><i style="left:1932px;top:878px;width:14px;height:16px;background:#6c6c6c"></i><i style="left:1946px;top:836px;width:110px;height:70px;background:#9b52ab"></i><i style="left:1946px;top:836px;width:110px;height:2px;background:#50265c"></i><i style="left:1946px;top:836px;width:2px;height:70px;background:#50265c"></i><i style="left:1946px;top:868px;width:110px;height:2px;background:#50265c"></i><i style="left:1948px;top:878px;width:108px;height:16px;background:#171717;background-image:repeating-linear-gradient(90deg,transparent 0 5px,rgba(60,30,75,.22) 5px 7px)"></i><i style="left:1974px;top:838px;width:2px;height:6px;background:#140a12"></i><i style="left:1974px;top:900px;width:2px;height:6px;background:#140a12"></i><i style="left:2002px;top:838px;width:2px;height:6px;background:#140a12"></i><i style="left:2002px;top:900px;width:2px;height:6px;background:#140a12"></i><i style="left:2032px;top:838px;width:2px;height:6px;background:#140a12"></i><i style="left:2032px;top:900px;width:2px;height:6px;background:#140a12"></i><i style="left:2056px;top:836px;width:4px;height:34px;background:#686868"></i><i style="left:2056px;top:870px;width:4px;height:36px;background:#353535"></i><i style="left:2056px;top:878px;width:4px;height:16px;background:#6c6c6c"></i><i style="left:2060px;top:836px;width:98px;height:70px;background:#9b52ab"></i><i style="left:2060px;top:836px;width:98px;height:2px;background:#50265c"></i><i style="left:2060px;top:836px;width:2px;height:70px;background:#50265c"></i><i style="left:2060px;top:868px;width:98px;height:2px;background:#50265c"></i><i style="left:2062px;top:878px;width:96px;height:16px;background:#171717;background-image:repeating-linear-gradient(90deg,transparent 0 5px,rgba(60,30,75,.22) 5px 7px)"></i><i style="left:2088px;top:838px;width:2px;height:6px;background:#140a12"></i><i style="left:2088px;top:900px;width:2px;height:6px;background:#140a12"></i><i style="left:2116px;top:838px;width:2px;height:6px;background:#140a12"></i><i style="left:2116px;top:900px;width:2px;height:6px;background:#140a12"></i><i style="left:2144px;top:838px;width:2px;height:6px;background:#140a12"></i><i style="left:2144px;top:900px;width:2px;height:6px;background:#140a12"></i><i style="left:2158px;top:836px;width:16px;height:34px;background:#686868"></i><i style="left:2158px;top:870px;width:16px;height:36px;background:#353535"></i><i style="left:2158px;top:878px;width:16px;height:16px;background:#6c6c6c"></i><i style="left:2174px;top:836px;width:106px;height:70px;background:#9b52ab"></i><i style="left:2174px;top:836px;width:106px;height:2px;background:#50265c"></i><i style="left:2174px;top:836px;width:2px;height:70px;background:#50265c"></i><i style="left:2174px;top:868px;width:106px;height:2px;background:#50265c"></i><i style="left:2176px;top:878px;width:104px;height:16px;background:#171717;background-image:repeating-linear-gradient(90deg,transparent 0 5px,rgba(60,30,75,.22) 5px 7px)"></i><i style="left:2202px;top:838px;width:2px;height:6px;background:#140a12"></i><i style="left:2202px;top:900px;width:2px;height:6px;background:#140a12"></i><i style="left:2230px;top:838px;width:2px;height:6px;background:#140a12"></i><i style="left:2230px;top:900px;width:2px;height:6px;background:#140a12"></i><i style="left:2258px;top:838px;width:2px;height:6px;background:#140a12"></i><i style="left:2258px;top:900px;width:2px;height:6px;background:#140a12"></i><i style="left:2280px;top:836px;width:6px;height:34px;background:#686868"></i><i style="left:2280px;top:870px;width:6px;height:36px;background:#353535"></i><i style="left:2280px;top:878px;width:6px;height:16px;background:#6c6c6c"></i><i style="left:2286px;top:836px;width:100px;height:70px;background:#9b52ab"></i><i style="left:2286px;top:836px;width:100px;height:2px;background:#50265c"></i><i style="left:2286px;top:836px;width:2px;height:70px;background:#50265c"></i><i style="left:2286px;top:868px;width:100px;height:2px;background:#50265c"></i><i style="left:2288px;top:878px;width:98px;height:16px;background:#171717;background-image:repeating-linear-gradient(90deg,transparent 0 5px,rgba(60,30,75,.22) 5px 7px)"></i><i style="left:2316px;top:838px;width:2px;height:6px;background:#140a12"></i><i style="left:2316px;top:900px;width:2px;height:6px;background:#140a12"></i><i style="left:2344px;top:838px;width:2px;height:6px;background:#140a12"></i><i style="left:2344px;top:900px;width:2px;height:6px;background:#140a12"></i><i style="left:2372px;top:838px;width:2px;height:6px;background:#140a12"></i><i style="left:2372px;top:900px;width:2px;height:6px;background:#140a12"></i><i style="left:2386px;top:836px;width:14px;height:34px;background:#686868"></i><i style="left:2386px;top:870px;width:14px;height:36px;background:#353535"></i><i style="left:2386px;top:878px;width:14px;height:16px;background:#6c6c6c"></i><i style="left:128px;top:836px;width:100px;height:70px;background:#9b52ab"></i><i style="left:128px;top:836px;width:100px;height:2px;background:#50265c"></i><i style="left:128px;top:836px;width:2px;height:70px;background:#50265c"></i><i style="left:128px;top:868px;width:100px;height:2px;background:#50265c"></i><i style="left:130px;top:878px;width:98px;height:16px;background:#171717;background-image:repeating-linear-gradient(90deg,transparent 0 5px,rgba(60,30,75,.22) 5px 7px)"></i><i style="left:156px;top:838px;width:2px;height:6px;background:#140a12"></i><i style="left:156px;top:900px;width:2px;height:6px;background:#140a12"></i><i style="left:184px;top:838px;width:2px;height:6px;background:#140a12"></i><i style="left:184px;top:900px;width:2px;height:6px;background:#140a12"></i><i style="left:212px;top:838px;width:2px;height:6px;background:#140a12"></i><i style="left:212px;top:900px;width:2px;height:6px;background:#140a12"></i><i style="left:1264px;top:762px;width:326px;height:70px;background:#9b52ab"></i><i style="left:1264px;top:762px;width:326px;height:2px;background:#50265c"></i><i style="left:1264px;top:762px;width:2px;height:70px;background:#50265c"></i><i style="left:1264px;top:794px;width:326px;height:2px;background:#50265c"></i><i style="left:1266px;top:804px;width:324px;height:16px;background:#1e1820"></i><i style="left:1378px;top:796px;width:2px;height:36px;background:#6c3479"></i><i style="left:1378px;top:764px;width:2px;height:6px;background:#140a12"></i><i style="left:1378px;top:826px;width:2px;height:6px;background:#140a12"></i><i style="left:1492px;top:796px;width:2px;height:36px;background:#6c3479"></i><i style="left:1492px;top:764px;width:2px;height:6px;background:#140a12"></i><i style="left:1492px;top:826px;width:2px;height:6px;background:#140a12"></i><i style="left:16px;top:912px;width:212px;height:2px;background:#5aa22b"></i><i style="left:16px;top:925px;width:212px;height:2.4px;background:#5aa22b"></i><i style="left:128px;top:929px;width:100px;height:2px;background:#5aa22b"></i><i style="left:244px;top:929px;width:96px;height:2px;background:#66b830"></i><i style="left:354px;top:929px;width:114px;height:2px;background:#66b830"></i><i style="left:468px;top:929px;width:228px;height:2px;background:#5aa22b"></i><i style="left:698px;top:919px;width:54px;height:2px;background:#66b830"></i><i style="left:752px;top:929px;width:172px;height:2px;background:#66b830"></i><i style="left:924px;top:929px;width:56px;height:2px;background:#5aa22b"></i><i style="left:1038px;top:919px;width:56px;height:2px;background:#5aa22b"></i><i style="left:1038px;top:925px;width:112px;height:2.4px;background:#5aa22b"></i><i style="left:1150px;top:925px;width:228px;height:2.4px;background:#66b830"></i><i style="left:1378px;top:925px;width:212px;height:2.4px;background:#5aa22b"></i><i style="left:1492px;top:935px;width:98px;height:2px;background:#5aa22b"></i><i style="left:1606px;top:919px;width:56px;height:2px;background:#66b830"></i><i style="left:1711px;top:915px;width:7px;height:2px;background:#66b830"></i><i style="left:2286px;top:919px;width:58px;height:2px;background:#5aa22b"></i><i style="left:2272px;top:932px;width:10px;height:2px;background:#66b830"></i><i style="left:1722px;top:922px;width:4px;height:2px;background:#66b830"></i><i style="left:1730px;top:922px;width:556px;height:2px;background:repeating-linear-gradient(90deg,#6cc832 0 4.3px,transparent 4.3px 5.9px,#6cc832 5.9px 10.2px,transparent 10.2px 14.206px)"></i><i style="left:1378px;top:939px;width:212px;height:2px;background:repeating-linear-gradient(90deg,#5aa22b 0 10px,transparent 10px 12px,#5aa22b 12px 14px,transparent 14px 16px)"></i><i style="left:1704px;top:932px;width:2px;height:2px;background:#66b830"></i><i style="left:1708px;top:932px;width:2px;height:2px;background:#66b830"></i><i style="left:1714px;top:932px;width:4px;height:2px;background:#66b830"></i><i style="left:568px;top:932px;width:14px;height:2px;background:repeating-linear-gradient(90deg,#5aa22b 0 2px,transparent 2px 4px)"></i><i style="left:354px;top:950.2px;width:114px;height:5.5px;background:#6fe5f7"></i><i style="left:468px;top:950.2px;width:228px;height:5.5px;background:#60cce0"></i><i style="left:354px;top:950.2px;width:2px;height:5.5px;background:rgba(0,40,60,.22)"></i><i style="left:752px;top:950.2px;width:172px;height:5.5px;background:#6fe5f7"></i><i style="left:924px;top:950.2px;width:112px;height:5.5px;background:#60cce0"></i><i style="left:752px;top:950.2px;width:2px;height:5.5px;background:rgba(0,40,60,.22)"></i><i style="left:1378px;top:950.2px;width:212px;height:5.5px;background:#60cce0"></i><i style="left:1378px;top:950.2px;width:2px;height:5.5px;background:rgba(0,40,60,.22)"></i><i style="left:1718px;top:950.2px;width:114px;height:5.5px;background:#6fe5f7"></i><i style="left:1832px;top:950.2px;width:228px;height:5.5px;background:#60cce0"></i><i style="left:2060px;top:950.2px;width:226px;height:5.5px;background:#6fe5f7"></i><i style="left:1718px;top:950.2px;width:2px;height:5.5px;background:rgba(0,40,60,.22)"></i><i style="left:354px;top:957.6px;width:58px;height:5.4px;background:#6fe5f7"></i><i style="left:354px;top:957.6px;width:2px;height:5.4px;background:rgba(0,40,60,.22)"></i><i style="left:468px;top:957.6px;width:58px;height:5.4px;background:#60cce0"></i><i style="left:468px;top:957.6px;width:2px;height:5.4px;background:rgba(0,40,60,.22)"></i><i style="left:582px;top:957.6px;width:58px;height:5.4px;background:#60cce0"></i><i style="left:582px;top:957.6px;width:2px;height:5.4px;background:rgba(0,40,60,.22)"></i><i style="left:752px;top:957.6px;width:58px;height:5.4px;background:#6fe5f7"></i><i style="left:752px;top:957.6px;width:2px;height:5.4px;background:rgba(0,40,60,.22)"></i><i style="left:1492px;top:957.6px;width:56px;height:5.4px;background:#60cce0"></i><i style="left:1492px;top:957.6px;width:2px;height:5.4px;background:rgba(0,40,60,.22)"></i><i style="left:1606px;top:957.6px;width:56px;height:5.4px;background:#6fe5f7"></i><i style="left:1606px;top:957.6px;width:2px;height:5.4px;background:rgba(0,40,60,.22)"></i><i style="left:1832px;top:957.6px;width:56px;height:5.4px;background:#60cce0"></i><i style="left:1832px;top:957.6px;width:2px;height:5.4px;background:rgba(0,40,60,.22)"></i><i style="left:2060px;top:957.6px;width:56px;height:5.4px;background:#6fe5f7"></i><i style="left:2060px;top:957.6px;width:2px;height:5.4px;background:rgba(0,40,60,.22)"></i><i style="left:582px;top:965px;width:114px;height:5.5px;background:#60cce0"></i><i style="left:582px;top:965px;width:2px;height:5.5px;background:rgba(0,40,60,.22)"></i><i style="left:752px;top:965px;width:172px;height:5.5px;background:#6fe5f7"></i><i style="left:924px;top:965px;width:112px;height:5.5px;background:#60cce0"></i><i style="left:752px;top:965px;width:2px;height:5.5px;background:rgba(0,40,60,.22)"></i><i style="left:1832px;top:965px;width:228px;height:5.5px;background:#60cce0"></i><i style="left:2060px;top:965px;width:226px;height:5.5px;background:#6fe5f7"></i><i style="left:1832px;top:965px;width:2px;height:5.5px;background:rgba(0,40,60,.22)"></i><i style="left:752px;top:972.4px;width:172px;height:5.5px;background:#6fe5f7"></i><i style="left:924px;top:972.4px;width:112px;height:5.5px;background:#60cce0"></i><i style="left:752px;top:972.4px;width:2px;height:5.5px;background:rgba(0,40,60,.22)"></i><i style="left:1832px;top:972.4px;width:228px;height:5.5px;background:#60cce0"></i><i style="left:1832px;top:972.4px;width:2px;height:5.5px;background:rgba(0,40,60,.22)"></i><i style="left:128px;top:988px;width:100px;height:10px;background:#8cb5e6"></i><i style="left:128px;top:988px;width:2px;height:10px;background:rgba(0,20,80,.2)"></i><i style="left:354px;top:988px;width:114px;height:10px;background:#9dc6fb"></i><i style="left:468px;top:988px;width:228px;height:10px;background:#8cb5e6"></i><i style="left:354px;top:988px;width:2px;height:10px;background:rgba(0,20,80,.2)"></i><i style="left:752px;top:988px;width:172px;height:10px;background:#9dc6fb"></i><i style="left:924px;top:988px;width:112px;height:10px;background:#8cb5e6"></i><i style="left:752px;top:988px;width:2px;height:10px;background:rgba(0,20,80,.2)"></i><i style="left:1150px;top:988px;width:228px;height:10px;background:#9dc6fb"></i><i style="left:1378px;top:988px;width:212px;height:10px;background:#8cb5e6"></i><i style="left:1150px;top:988px;width:2px;height:10px;background:rgba(0,20,80,.2)"></i><i style="left:1832px;top:988px;width:228px;height:10px;background:#8cb5e6"></i><i style="left:2060px;top:988px;width:226px;height:10px;background:#9dc6fb"></i><i style="left:1832px;top:988px;width:2px;height:10px;background:rgba(0,20,80,.2)"></i><i style="left:128px;top:1000px;width:100px;height:10px;background:#8cb5e6"></i><i style="left:128px;top:1000px;width:2px;height:10px;background:rgba(0,20,80,.2)"></i><i style="left:468px;top:1000px;width:228px;height:10px;background:#8cb5e6"></i><i style="left:468px;top:1000px;width:2px;height:10px;background:rgba(0,20,80,.2)"></i><i style="left:752px;top:1000px;width:172px;height:10px;background:#9dc6fb"></i><i style="left:924px;top:1000px;width:112px;height:10px;background:#8cb5e6"></i><i style="left:752px;top:1000px;width:2px;height:10px;background:rgba(0,20,80,.2)"></i><i style="left:1264px;top:1000px;width:114px;height:10px;background:#9dc6fb"></i><i style="left:1378px;top:1000px;width:212px;height:10px;background:#8cb5e6"></i><i style="left:1264px;top:1000px;width:2px;height:10px;background:rgba(0,20,80,.2)"></i><i style="left:1718px;top:1000px;width:114px;height:10px;background:#9dc6fb"></i><i style="left:1832px;top:1000px;width:228px;height:10px;background:#8cb5e6"></i><i style="left:2060px;top:1000px;width:226px;height:10px;background:#9dc6fb"></i><i style="left:1718px;top:1000px;width:2px;height:10px;background:rgba(0,20,80,.2)"></i><i style="left:128px;top:910px;width:2px;height:34px;background:rgba(0,0,0,.18)"></i><i style="left:128px;top:948px;width:2px;height:34px;background:rgba(0,0,0,.18)"></i><i style="left:128px;top:986px;width:2px;height:34px;background:rgba(0,0,0,.18)"></i><i style="left:242px;top:910px;width:2px;height:34px;background:rgba(0,0,0,.18)"></i><i style="left:242px;top:948px;width:2px;height:34px;background:rgba(0,0,0,.18)"></i><i style="left:242px;top:986px;width:2px;height:34px;background:rgba(0,0,0,.18)"></i><i style="left:354px;top:910px;width:2px;height:34px;background:rgba(0,0,0,.18)"></i><i style="left:354px;top:948px;width:2px;height:34px;background:rgba(0,0,0,.18)"></i><i style="left:354px;top:986px;width:2px;height:34px;background:rgba(0,0,0,.18)"></i><i style="left:468px;top:910px;width:2px;height:34px;background:rgba(0,0,0,.18)"></i><i style="left:468px;top:948px;width:2px;height:34px;background:rgba(0,0,0,.18)"></i><i style="left:468px;top:986px;width:2px;height:34px;background:rgba(0,0,0,.18)"></i><i style="left:582px;top:910px;width:2px;height:34px;background:rgba(0,0,0,.18)"></i><i style="left:582px;top:948px;width:2px;height:34px;background:rgba(0,0,0,.18)"></i><i style="left:582px;top:986px;width:2px;height:34px;background:rgba(0,0,0,.18)"></i><i style="left:696px;top:910px;width:2px;height:34px;background:rgba(0,0,0,.18)"></i><i style="left:696px;top:948px;width:2px;height:34px;background:rgba(0,0,0,.18)"></i><i style="left:696px;top:986px;width:2px;height:34px;background:rgba(0,0,0,.18)"></i><i style="left:810px;top:910px;width:2px;height:34px;background:rgba(0,0,0,.18)"></i><i style="left:810px;top:948px;width:2px;height:34px;background:rgba(0,0,0,.18)"></i><i style="left:810px;top:986px;width:2px;height:34px;background:rgba(0,0,0,.18)"></i><i style="left:924px;top:910px;width:2px;height:34px;background:rgba(0,0,0,.18)"></i><i style="left:924px;top:948px;width:2px;height:34px;background:rgba(0,0,0,.18)"></i><i style="left:924px;top:986px;width:2px;height:34px;background:rgba(0,0,0,.18)"></i><i style="left:1036px;top:910px;width:2px;height:34px;background:rgba(0,0,0,.18)"></i><i style="left:1036px;top:948px;width:2px;height:34px;background:rgba(0,0,0,.18)"></i><i style="left:1036px;top:986px;width:2px;height:34px;background:rgba(0,0,0,.18)"></i><i style="left:1150px;top:910px;width:2px;height:34px;background:rgba(0,0,0,.18)"></i><i style="left:1150px;top:948px;width:2px;height:34px;background:rgba(0,0,0,.18)"></i><i style="left:1150px;top:986px;width:2px;height:34px;background:rgba(0,0,0,.18)"></i><i style="left:1264px;top:910px;width:2px;height:34px;background:rgba(0,0,0,.18)"></i><i style="left:1264px;top:948px;width:2px;height:34px;background:rgba(0,0,0,.18)"></i><i style="left:1264px;top:986px;width:2px;height:34px;background:rgba(0,0,0,.18)"></i><i style="left:1378px;top:910px;width:2px;height:34px;background:rgba(0,0,0,.18)"></i><i style="left:1378px;top:948px;width:2px;height:34px;background:rgba(0,0,0,.18)"></i><i style="left:1378px;top:986px;width:2px;height:34px;background:rgba(0,0,0,.18)"></i><i style="left:1492px;top:910px;width:2px;height:34px;background:rgba(0,0,0,.18)"></i><i style="left:1492px;top:948px;width:2px;height:34px;background:rgba(0,0,0,.18)"></i><i style="left:1492px;top:986px;width:2px;height:34px;background:rgba(0,0,0,.18)"></i><i style="left:1604px;top:910px;width:2px;height:34px;background:rgba(0,0,0,.18)"></i><i style="left:1604px;top:948px;width:2px;height:34px;background:rgba(0,0,0,.18)"></i><i style="left:1604px;top:986px;width:2px;height:34px;background:rgba(0,0,0,.18)"></i><i style="left:1718px;top:910px;width:2px;height:34px;background:rgba(0,0,0,.18)"></i><i style="left:1718px;top:948px;width:2px;height:34px;background:rgba(0,0,0,.18)"></i><i style="left:1718px;top:986px;width:2px;height:34px;background:rgba(0,0,0,.18)"></i><i style="left:1832px;top:910px;width:2px;height:34px;background:rgba(0,0,0,.18)"></i><i style="left:1832px;top:948px;width:2px;height:34px;background:rgba(0,0,0,.18)"></i><i style="left:1832px;top:986px;width:2px;height:34px;background:rgba(0,0,0,.18)"></i><i style="left:1946px;top:910px;width:2px;height:34px;background:rgba(0,0,0,.18)"></i><i style="left:1946px;top:948px;width:2px;height:34px;background:rgba(0,0,0,.18)"></i><i style="left:1946px;top:986px;width:2px;height:34px;background:rgba(0,0,0,.18)"></i><i style="left:2060px;top:910px;width:2px;height:34px;background:rgba(0,0,0,.18)"></i><i style="left:2060px;top:948px;width:2px;height:34px;background:rgba(0,0,0,.18)"></i><i style="left:2060px;top:986px;width:2px;height:34px;background:rgba(0,0,0,.18)"></i><i style="left:2174px;top:910px;width:2px;height:34px;background:rgba(0,0,0,.18)"></i><i style="left:2174px;top:948px;width:2px;height:34px;background:rgba(0,0,0,.18)"></i><i style="left:2174px;top:986px;width:2px;height:34px;background:rgba(0,0,0,.18)"></i><i style="left:2286px;top:910px;width:2px;height:34px;background:rgba(0,0,0,.18)"></i><i style="left:2286px;top:948px;width:2px;height:34px;background:rgba(0,0,0,.18)"></i><i style="left:2286px;top:986px;width:2px;height:34px;background:rgba(0,0,0,.18)"></i><i style="left:2400px;top:910px;width:2px;height:34px;background:rgba(0,0,0,.18)"></i><i style="left:2400px;top:948px;width:2px;height:34px;background:rgba(0,0,0,.18)"></i><i style="left:2400px;top:986px;width:2px;height:34px;background:rgba(0,0,0,.18)"></i><i style="left:14px;top:1024px;width:8px;height:70px;background:#a8fa7c"></i><i style="left:14px;top:1024px;width:8px;height:2px;background:#5b9b3e"></i><i style="left:14px;top:1024px;width:2px;height:70px;background:#5b9b3e"></i><i style="left:14px;top:1056px;width:8px;height:2px;background:#5b9b3e"></i><svg style="left:14px;top:1058px" width="8" height="36" viewBox="0 0 8 36"><path d="M2.0,4.8 L3.0,5.2 L4.0,4.8 L5.0,4.9 L6.0,5.2 L7.0,5.2 L8.0,5.0 L8.0,13.0 L7.0,12.8 L6.0,12.8 L5.0,13.1 L4.0,13.2 L3.0,12.8 L2.0,13.2ZM2.0,22.8 L3.0,23.2 L4.0,22.8 L5.0,22.9 L6.0,23.2 L7.0,23.2 L8.0,23.0 L8.0,31.0 L7.0,30.8 L6.0,30.8 L5.0,31.1 L4.0,31.2 L3.0,30.8 L2.0,31.2Z" fill="#1c211a"/></svg><i style="left:22px;top:1024px;width:8px;height:70px;background:#a8fa7c"></i><i style="left:22px;top:1024px;width:8px;height:2px;background:#5b9b3e"></i><i style="left:22px;top:1024px;width:2px;height:70px;background:#5b9b3e"></i><i style="left:22px;top:1056px;width:8px;height:2px;background:#5b9b3e"></i><svg style="left:22px;top:1058px" width="8" height="36" viewBox="0 0 8 36"><path d="M2.0,4.9 L3.0,4.1 L4.0,3.9 L5.0,2.7 L6.0,2.8 L7.0,3.2 L8.0,3.9 L8.0,14.1 L7.0,14.8 L6.0,15.2 L5.0,15.3 L4.0,14.1 L3.0,13.9 L2.0,13.1ZM2.0,22.9 L3.0,22.1 L4.0,21.9 L5.0,20.7 L6.0,20.8 L7.0,21.2 L8.0,21.9 L8.0,32.1 L7.0,32.8 L6.0,33.2 L5.0,33.3 L4.0,32.1 L3.0,31.9 L2.0,31.1Z" fill="#1c211a"/></svg><i style="left:36px;top:1024px;width:20px;height:70px;background:#a8fa7c"></i><i style="left:36px;top:1024px;width:20px;height:2px;background:#5b9b3e"></i><i style="left:36px;top:1024px;width:2px;height:70px;background:#5b9b3e"></i><i style="left:36px;top:1056px;width:20px;height:2px;background:#5b9b3e"></i><svg style="left:36px;top:1058px" width="20" height="36" viewBox="0 0 20 36"><path d="M2.0,7.0 L3.0,6.0 L4.0,4.3 L5.0,3.1 L6.0,2.1 L7.0,1.5 L8.0,2.4 L9.0,3.6 L10.0,4.1 L11.0,4.1 L12.0,4.0 L13.0,4.2 L14.0,4.3 L15.0,3.3 L16.0,2.8 L17.0,3.2 L18.0,3.2 L19.0,3.2 L20.0,2.8 L20.0,15.2 L19.0,14.8 L18.0,14.8 L17.0,14.8 L16.0,15.2 L15.0,14.7 L14.0,13.7 L13.0,13.8 L12.0,14.0 L11.0,13.9 L10.0,13.9 L9.0,14.4 L8.0,15.6 L7.0,16.5 L6.0,15.9 L5.0,14.9 L4.0,13.7 L3.0,12.0 L2.0,11.0ZM2.0,25.0 L3.0,24.0 L4.0,22.3 L5.0,21.1 L6.0,20.1 L7.0,19.5 L8.0,20.4 L9.0,21.6 L10.0,22.1 L11.0,22.1 L12.0,22.0 L13.0,22.2 L14.0,22.3 L15.0,21.3 L16.0,20.8 L17.0,21.2 L18.0,21.2 L19.0,21.2 L20.0,20.8 L20.0,33.2 L19.0,32.8 L18.0,32.8 L17.0,32.8 L16.0,33.2 L15.0,32.7 L14.0,31.7 L13.0,31.8 L12.0,32.0 L11.0,31.9 L10.0,31.9 L9.0,32.4 L8.0,33.6 L7.0,34.5 L6.0,33.9 L5.0,32.9 L4.0,31.7 L3.0,30.0 L2.0,29.0Z" fill="#1c211a"/></svg><b class="ct" style="left:42.4px;top:1031.3px;width:13.6px;color:#1e3a12">VO</b><i style="left:70px;top:1024px;width:12px;height:70px;background:#a8fa7c"></i><i style="left:70px;top:1024px;width:12px;height:2px;background:#5b9b3e"></i><i style="left:70px;top:1024px;width:2px;height:70px;background:#5b9b3e"></i><i style="left:70px;top:1056px;width:12px;height:2px;background:#5b9b3e"></i><svg style="left:70px;top:1058px" width="12" height="36" viewBox="0 0 12 36"><path d="M2.0,5.2 L3.0,4.6 L4.0,5.0 L5.0,4.7 L6.0,4.9 L7.0,4.2 L8.0,3.9 L9.0,2.8 L10.0,3.8 L11.0,4.2 L12.0,4.2 L12.0,13.8 L11.0,13.8 L10.0,14.2 L9.0,15.2 L8.0,14.1 L7.0,13.8 L6.0,13.1 L5.0,13.3 L4.0,13.0 L3.0,13.4 L2.0,12.8ZM2.0,23.2 L3.0,22.6 L4.0,23.0 L5.0,22.7 L6.0,22.9 L7.0,22.2 L8.0,21.9 L9.0,20.8 L10.0,21.8 L11.0,22.2 L12.0,22.2 L12.0,31.8 L11.0,31.8 L10.0,32.2 L9.0,33.2 L8.0,32.1 L7.0,31.8 L6.0,31.1 L5.0,31.3 L4.0,31.0 L3.0,31.4 L2.0,30.8Z" fill="#1c211a"/></svg><b class="ct" style="left:76.4px;top:1031.3px;width:5.6px;color:#1e3a12">V</b><i style="left:82px;top:1024px;width:10px;height:34px;background:#686868"></i><i style="left:82px;top:1058px;width:10px;height:36px;background:#343434"></i><svg style="left:82px;top:1058px" width="10" height="36" viewBox="0 0 10 36"><path d="M0.0,3.0 L1.0,3.1 L2.0,3.1 L3.0,3.2 L4.0,3.9 L5.0,5.3 L6.0,6.5 L7.0,7.5 L8.0,8.0 L9.0,8.0 L10.0,8.0 L10.0,10.0 L9.0,10.0 L8.0,10.0 L7.0,10.5 L6.0,11.5 L5.0,12.7 L4.0,14.1 L3.0,14.8 L2.0,14.9 L1.0,14.9 L0.0,15.0ZM0.0,21.0 L1.0,21.1 L2.0,21.1 L3.0,21.2 L4.0,21.9 L5.0,23.3 L6.0,24.5 L7.0,25.5 L8.0,26.0 L9.0,26.0 L10.0,26.0 L10.0,28.0 L9.0,28.0 L8.0,28.0 L7.0,28.5 L6.0,29.5 L5.0,30.7 L4.0,32.1 L3.0,32.8 L2.0,32.9 L1.0,32.9 L0.0,33.0Z" fill="#6a6a6a"/></svg><b class="ct" style="left:85px;top:1031.8px;width:7px;color:#2e2e2e">V</b><i style="left:92px;top:1024px;width:24px;height:70px;background:#a8fa7c"></i><i style="left:92px;top:1024px;width:24px;height:2px;background:#5b9b3e"></i><i style="left:92px;top:1024px;width:2px;height:70px;background:#5b9b3e"></i><i style="left:92px;top:1056px;width:24px;height:2px;background:#5b9b3e"></i><svg style="left:92px;top:1058px" width="24" height="36" viewBox="0 0 24 36"><path d="M2.0,6.3 L3.0,5.3 L4.0,3.8 L5.0,2.5 L6.0,1.7 L7.0,1.3 L8.0,2.1 L9.0,3.2 L10.0,4.9 L11.0,4.0 L12.0,4.1 L13.0,3.9 L14.0,4.5 L15.0,3.7 L16.0,3.4 L17.0,2.8 L18.0,2.3 L19.0,2.2 L20.0,2.3 L21.0,3.1 L22.0,4.8 L23.0,6.4 L24.0,7.7 L24.0,10.3 L23.0,11.6 L22.0,13.2 L21.0,14.9 L20.0,15.7 L19.0,15.8 L18.0,15.7 L17.0,15.2 L16.0,14.6 L15.0,14.3 L14.0,13.5 L13.0,14.1 L12.0,13.9 L11.0,14.0 L10.0,13.1 L9.0,14.8 L8.0,15.9 L7.0,16.7 L6.0,16.3 L5.0,15.5 L4.0,14.2 L3.0,12.7 L2.0,11.7ZM2.0,24.3 L3.0,23.3 L4.0,21.8 L5.0,20.5 L6.0,19.7 L7.0,19.3 L8.0,20.1 L9.0,21.2 L10.0,22.9 L11.0,22.0 L12.0,22.1 L13.0,21.9 L14.0,22.5 L15.0,21.7 L16.0,21.4 L17.0,20.8 L18.0,20.3 L19.0,20.2 L20.0,20.3 L21.0,21.1 L22.0,22.8 L23.0,24.4 L24.0,25.7 L24.0,28.3 L23.0,29.6 L22.0,31.2 L21.0,32.9 L20.0,33.7 L19.0,33.8 L18.0,33.7 L17.0,33.2 L16.0,32.6 L15.0,32.3 L14.0,31.5 L13.0,32.1 L12.0,31.9 L11.0,32.0 L10.0,31.1 L9.0,32.8 L8.0,33.9 L7.0,34.7 L6.0,34.3 L5.0,33.5 L4.0,32.2 L3.0,30.7 L2.0,29.7Z" fill="#1c211a"/></svg><b class="ct" style="left:98.4px;top:1031.3px;width:17.6px;color:#1e3a12">VO</b><i style="left:128px;top:1024px;width:6px;height:70px;background:#a8fa7c"></i><i style="left:128px;top:1024px;width:6px;height:2px;background:#5b9b3e"></i><i style="left:128px;top:1024px;width:2px;height:70px;background:#5b9b3e"></i><i style="left:128px;top:1056px;width:6px;height:2px;background:#5b9b3e"></i><svg style="left:128px;top:1058px" width="6" height="36" viewBox="0 0 6 36"><path d="M2.0,5.0 L3.0,4.7 L4.0,4.6 L5.0,5.2 L6.0,5.1 L6.0,12.9 L5.0,12.8 L4.0,13.4 L3.0,13.3 L2.0,13.0ZM2.0,23.0 L3.0,22.7 L4.0,22.6 L5.0,23.2 L6.0,23.1 L6.0,30.9 L5.0,30.8 L4.0,31.4 L3.0,31.3 L2.0,31.0Z" fill="#1c211a"/></svg><i style="left:136px;top:1024px;width:8px;height:70px;background:#a8fa7c"></i><i style="left:136px;top:1024px;width:8px;height:2px;background:#5b9b3e"></i><i style="left:136px;top:1024px;width:2px;height:70px;background:#5b9b3e"></i><i style="left:136px;top:1056px;width:8px;height:2px;background:#5b9b3e"></i><svg style="left:136px;top:1058px" width="8" height="36" viewBox="0 0 8 36"><path d="M2.0,5.2 L3.0,4.7 L4.0,3.3 L5.0,3.5 L6.0,2.9 L7.0,3.4 L8.0,4.0 L8.0,14.0 L7.0,14.6 L6.0,15.1 L5.0,14.5 L4.0,14.7 L3.0,13.3 L2.0,12.8ZM2.0,23.2 L3.0,22.7 L4.0,21.3 L5.0,21.5 L6.0,20.9 L7.0,21.4 L8.0,22.0 L8.0,32.0 L7.0,32.6 L6.0,33.1 L5.0,32.5 L4.0,32.7 L3.0,31.3 L2.0,30.8Z" fill="#1c211a"/></svg><i style="left:148px;top:1024px;width:22px;height:70px;background:#a8fa7c"></i><i style="left:148px;top:1024px;width:22px;height:2px;background:#5b9b3e"></i><i style="left:148px;top:1024px;width:2px;height:70px;background:#5b9b3e"></i><i style="left:148px;top:1056px;width:22px;height:2px;background:#5b9b3e"></i><svg style="left:148px;top:1058px" width="22" height="36" viewBox="0 0 22 36"><path d="M2.0,7.4 L3.0,5.7 L4.0,4.6 L5.0,4.1 L6.0,2.5 L7.0,1.7 L8.0,1.9 L9.0,2.1 L10.0,3.9 L11.0,4.7 L12.0,4.6 L13.0,3.8 L14.0,4.3 L15.0,3.7 L16.0,3.3 L17.0,3.4 L18.0,2.5 L19.0,3.1 L20.0,3.2 L21.0,2.8 L22.0,2.9 L22.0,15.1 L21.0,15.2 L20.0,14.8 L19.0,14.9 L18.0,15.5 L17.0,14.6 L16.0,14.7 L15.0,14.3 L14.0,13.7 L13.0,14.2 L12.0,13.4 L11.0,13.3 L10.0,14.1 L9.0,15.9 L8.0,16.1 L7.0,16.3 L6.0,15.5 L5.0,13.9 L4.0,13.4 L3.0,12.3 L2.0,10.6ZM2.0,25.4 L3.0,23.7 L4.0,22.6 L5.0,22.1 L6.0,20.5 L7.0,19.7 L8.0,19.9 L9.0,20.1 L10.0,21.9 L11.0,22.7 L12.0,22.6 L13.0,21.8 L14.0,22.3 L15.0,21.7 L16.0,21.3 L17.0,21.4 L18.0,20.5 L19.0,21.1 L20.0,21.2 L21.0,20.8 L22.0,20.9 L22.0,33.1 L21.0,33.2 L20.0,32.8 L19.0,32.9 L18.0,33.5 L17.0,32.6 L16.0,32.7 L15.0,32.3 L14.0,31.7 L13.0,32.2 L12.0,31.4 L11.0,31.3 L10.0,32.1 L9.0,33.9 L8.0,34.1 L7.0,34.3 L6.0,33.5 L5.0,31.9 L4.0,31.4 L3.0,30.3 L2.0,28.6Z" fill="#1c211a"/></svg><b class="ct" style="left:154.4px;top:1031.3px;width:15.6px;color:#1e3a12">VO</b><i style="left:184px;top:1024px;width:12px;height:70px;background:#a8fa7c"></i><i style="left:184px;top:1024px;width:12px;height:2px;background:#5b9b3e"></i><i style="left:184px;top:1024px;width:2px;height:70px;background:#5b9b3e"></i><i style="left:184px;top:1056px;width:12px;height:2px;background:#5b9b3e"></i><svg style="left:184px;top:1058px" width="12" height="36" viewBox="0 0 12 36"><path d="M2.0,5.4 L3.0,4.8 L4.0,4.4 L5.0,4.3 L6.0,4.5 L7.0,4.2 L8.0,3.5 L9.0,2.5 L10.0,3.0 L11.0,3.7 L12.0,4.4 L12.0,13.6 L11.0,14.3 L10.0,15.0 L9.0,15.5 L8.0,14.5 L7.0,13.8 L6.0,13.5 L5.0,13.7 L4.0,13.6 L3.0,13.2 L2.0,12.6ZM2.0,23.4 L3.0,22.8 L4.0,22.4 L5.0,22.3 L6.0,22.5 L7.0,22.2 L8.0,21.5 L9.0,20.5 L10.0,21.0 L11.0,21.7 L12.0,22.4 L12.0,31.6 L11.0,32.3 L10.0,33.0 L9.0,33.5 L8.0,32.5 L7.0,31.8 L6.0,31.5 L5.0,31.7 L4.0,31.6 L3.0,31.2 L2.0,30.6Z" fill="#1c211a"/></svg><b class="ct" style="left:190.4px;top:1031.3px;width:5.6px;color:#1e3a12">V</b><i style="left:196px;top:1024px;width:10px;height:34px;background:#686868"></i><i style="left:196px;top:1058px;width:10px;height:36px;background:#343434"></i><svg style="left:196px;top:1058px" width="10" height="36" viewBox="0 0 10 36"><path d="M0.0,3.0 L1.0,3.1 L2.0,3.1 L3.0,3.2 L4.0,3.9 L5.0,5.3 L6.0,6.5 L7.0,7.5 L8.0,8.0 L9.0,8.0 L10.0,8.0 L10.0,10.0 L9.0,10.0 L8.0,10.0 L7.0,10.5 L6.0,11.5 L5.0,12.7 L4.0,14.1 L3.0,14.8 L2.0,14.9 L1.0,14.9 L0.0,15.0ZM0.0,21.0 L1.0,21.1 L2.0,21.1 L3.0,21.2 L4.0,21.9 L5.0,23.3 L6.0,24.5 L7.0,25.5 L8.0,26.0 L9.0,26.0 L10.0,26.0 L10.0,28.0 L9.0,28.0 L8.0,28.0 L7.0,28.5 L6.0,29.5 L5.0,30.7 L4.0,32.1 L3.0,32.8 L2.0,32.9 L1.0,32.9 L0.0,33.0Z" fill="#6a6a6a"/></svg><b class="ct" style="left:199px;top:1031.8px;width:7px;color:#2e2e2e">V</b><i style="left:206px;top:1024px;width:24px;height:70px;background:#a8fa7c"></i><i style="left:206px;top:1024px;width:24px;height:2px;background:#5b9b3e"></i><i style="left:206px;top:1024px;width:2px;height:70px;background:#5b9b3e"></i><i style="left:206px;top:1056px;width:24px;height:2px;background:#5b9b3e"></i><svg style="left:206px;top:1058px" width="24" height="36" viewBox="0 0 24 36"><path d="M2.0,5.8 L3.0,5.4 L4.0,4.1 L5.0,2.8 L6.0,1.2 L7.0,1.6 L8.0,2.3 L9.0,3.2 L10.0,4.4 L11.0,4.6 L12.0,3.9 L13.0,4.0 L14.0,4.4 L15.0,4.0 L16.0,3.3 L17.0,2.6 L18.0,2.1 L19.0,2.1 L20.0,2.2 L21.0,3.1 L22.0,4.8 L23.0,6.1 L24.0,8.1 L24.0,9.9 L23.0,11.9 L22.0,13.2 L21.0,14.9 L20.0,15.8 L19.0,15.9 L18.0,15.9 L17.0,15.4 L16.0,14.7 L15.0,14.0 L14.0,13.6 L13.0,14.0 L12.0,14.1 L11.0,13.4 L10.0,13.6 L9.0,14.8 L8.0,15.7 L7.0,16.4 L6.0,16.8 L5.0,15.2 L4.0,13.9 L3.0,12.6 L2.0,12.2ZM2.0,23.8 L3.0,23.4 L4.0,22.1 L5.0,20.8 L6.0,19.2 L7.0,19.6 L8.0,20.3 L9.0,21.2 L10.0,22.4 L11.0,22.6 L12.0,21.9 L13.0,22.0 L14.0,22.4 L15.0,22.0 L16.0,21.3 L17.0,20.6 L18.0,20.1 L19.0,20.1 L20.0,20.2 L21.0,21.1 L22.0,22.8 L23.0,24.1 L24.0,26.1 L24.0,27.9 L23.0,29.9 L22.0,31.2 L21.0,32.9 L20.0,33.8 L19.0,33.9 L18.0,33.9 L17.0,33.4 L16.0,32.7 L15.0,32.0 L14.0,31.6 L13.0,32.0 L12.0,32.1 L11.0,31.4 L10.0,31.6 L9.0,32.8 L8.0,33.7 L7.0,34.4 L6.0,34.8 L5.0,33.2 L4.0,31.9 L3.0,30.6 L2.0,30.2Z" fill="#1c211a"/></svg><b class="ct" style="left:212.4px;top:1031.3px;width:17.6px;color:#1e3a12">VO</b><i style="left:242px;top:1024px;width:6px;height:70px;background:#a8fa7c"></i><i style="left:242px;top:1024px;width:6px;height:2px;background:#5b9b3e"></i><i style="left:242px;top:1024px;width:2px;height:70px;background:#5b9b3e"></i><i style="left:242px;top:1056px;width:6px;height:2px;background:#5b9b3e"></i><svg style="left:242px;top:1058px" width="6" height="36" viewBox="0 0 6 36"><path d="M2.0,5.5 L3.0,5.3 L4.0,4.9 L5.0,4.8 L6.0,5.3 L6.0,12.7 L5.0,13.2 L4.0,13.1 L3.0,12.7 L2.0,12.5ZM2.0,23.5 L3.0,23.3 L4.0,22.9 L5.0,22.8 L6.0,23.3 L6.0,30.7 L5.0,31.2 L4.0,31.1 L3.0,30.7 L2.0,30.5Z" fill="#1c211a"/></svg><i style="left:250px;top:1024px;width:8px;height:70px;background:#a8fa7c"></i><i style="left:250px;top:1024px;width:8px;height:2px;background:#5b9b3e"></i><i style="left:250px;top:1024px;width:2px;height:70px;background:#5b9b3e"></i><i style="left:250px;top:1056px;width:8px;height:2px;background:#5b9b3e"></i><svg style="left:250px;top:1058px" width="8" height="36" viewBox="0 0 8 36"><path d="M2.0,4.6 L3.0,4.6 L4.0,3.6 L5.0,3.5 L6.0,3.3 L7.0,3.6 L8.0,4.4 L8.0,13.6 L7.0,14.4 L6.0,14.7 L5.0,14.5 L4.0,14.4 L3.0,13.4 L2.0,13.4ZM2.0,22.6 L3.0,22.6 L4.0,21.6 L5.0,21.5 L6.0,21.3 L7.0,21.6 L8.0,22.4 L8.0,31.6 L7.0,32.4 L6.0,32.7 L5.0,32.5 L4.0,32.4 L3.0,31.4 L2.0,31.4Z" fill="#1c211a"/></svg><i style="left:264px;top:1024px;width:20px;height:70px;background:#a8fa7c"></i><i style="left:264px;top:1024px;width:20px;height:2px;background:#5b9b3e"></i><i style="left:264px;top:1024px;width:2px;height:70px;background:#5b9b3e"></i><i style="left:264px;top:1056px;width:20px;height:2px;background:#5b9b3e"></i><svg style="left:264px;top:1058px" width="20" height="36" viewBox="0 0 20 36"><path d="M2.0,7.1 L3.0,6.1 L4.0,5.0 L5.0,3.7 L6.0,2.0 L7.0,1.0 L8.0,2.3 L9.0,3.1 L10.0,4.8 L11.0,4.1 L12.0,3.8 L13.0,4.1 L14.0,3.9 L15.0,3.1 L16.0,2.7 L17.0,2.5 L18.0,2.8 L19.0,3.0 L20.0,3.1 L20.0,14.9 L19.0,15.0 L18.0,15.2 L17.0,15.5 L16.0,15.3 L15.0,14.9 L14.0,14.1 L13.0,13.9 L12.0,14.2 L11.0,13.9 L10.0,13.2 L9.0,14.9 L8.0,15.7 L7.0,17.0 L6.0,16.0 L5.0,14.3 L4.0,13.0 L3.0,11.9 L2.0,10.9ZM2.0,25.1 L3.0,24.1 L4.0,23.0 L5.0,21.7 L6.0,20.0 L7.0,19.0 L8.0,20.3 L9.0,21.1 L10.0,22.8 L11.0,22.1 L12.0,21.8 L13.0,22.1 L14.0,21.9 L15.0,21.1 L16.0,20.7 L17.0,20.5 L18.0,20.8 L19.0,21.0 L20.0,21.1 L20.0,32.9 L19.0,33.0 L18.0,33.2 L17.0,33.5 L16.0,33.3 L15.0,32.9 L14.0,32.1 L13.0,31.9 L12.0,32.2 L11.0,31.9 L10.0,31.2 L9.0,32.9 L8.0,33.7 L7.0,35.0 L6.0,34.0 L5.0,32.3 L4.0,31.0 L3.0,29.9 L2.0,28.9Z" fill="#1c211a"/></svg><b class="ct" style="left:270.4px;top:1031.3px;width:13.6px;color:#1e3a12">VO</b><i style="left:298px;top:1024px;width:12px;height:70px;background:#a8fa7c"></i><i style="left:298px;top:1024px;width:12px;height:2px;background:#5b9b3e"></i><i style="left:298px;top:1024px;width:2px;height:70px;background:#5b9b3e"></i><i style="left:298px;top:1056px;width:12px;height:2px;background:#5b9b3e"></i><svg style="left:298px;top:1058px" width="12" height="36" viewBox="0 0 12 36"><path d="M2.0,4.6 L3.0,4.6 L4.0,5.0 L5.0,4.7 L6.0,5.1 L7.0,4.7 L8.0,4.0 L9.0,2.8 L10.0,3.4 L11.0,3.9 L12.0,4.7 L12.0,13.3 L11.0,14.1 L10.0,14.6 L9.0,15.2 L8.0,14.0 L7.0,13.3 L6.0,12.9 L5.0,13.3 L4.0,13.0 L3.0,13.4 L2.0,13.4ZM2.0,22.6 L3.0,22.6 L4.0,23.0 L5.0,22.7 L6.0,23.1 L7.0,22.7 L8.0,22.0 L9.0,20.8 L10.0,21.4 L11.0,21.9 L12.0,22.7 L12.0,31.3 L11.0,32.1 L10.0,32.6 L9.0,33.2 L8.0,32.0 L7.0,31.3 L6.0,30.9 L5.0,31.3 L4.0,31.0 L3.0,31.4 L2.0,31.4Z" fill="#1c211a"/></svg><b class="ct" style="left:304.4px;top:1031.3px;width:5.6px;color:#1e3a12">V</b><i style="left:310px;top:1024px;width:10px;height:34px;background:#686868"></i><i style="left:310px;top:1058px;width:10px;height:36px;background:#343434"></i><svg style="left:310px;top:1058px" width="10" height="36" viewBox="0 0 10 36"><path d="M0.0,3.0 L1.0,3.1 L2.0,3.1 L3.0,3.2 L4.0,3.9 L5.0,5.3 L6.0,6.5 L7.0,7.5 L8.0,8.0 L9.0,8.0 L10.0,8.0 L10.0,10.0 L9.0,10.0 L8.0,10.0 L7.0,10.5 L6.0,11.5 L5.0,12.7 L4.0,14.1 L3.0,14.8 L2.0,14.9 L1.0,14.9 L0.0,15.0ZM0.0,21.0 L1.0,21.1 L2.0,21.1 L3.0,21.2 L4.0,21.9 L5.0,23.3 L6.0,24.5 L7.0,25.5 L8.0,26.0 L9.0,26.0 L10.0,26.0 L10.0,28.0 L9.0,28.0 L8.0,28.0 L7.0,28.5 L6.0,29.5 L5.0,30.7 L4.0,32.1 L3.0,32.8 L2.0,32.9 L1.0,32.9 L0.0,33.0Z" fill="#6a6a6a"/></svg><b class="ct" style="left:313px;top:1031.8px;width:7px;color:#2e2e2e">V</b><i style="left:320px;top:1024px;width:24px;height:70px;background:#a8fa7c"></i><i style="left:320px;top:1024px;width:24px;height:2px;background:#5b9b3e"></i><i style="left:320px;top:1024px;width:2px;height:70px;background:#5b9b3e"></i><i style="left:320px;top:1056px;width:24px;height:2px;background:#5b9b3e"></i><svg style="left:320px;top:1058px" width="24" height="36" viewBox="0 0 24 36"><path d="M2.0,5.9 L3.0,5.6 L4.0,4.1 L5.0,3.2 L6.0,1.1 L7.0,1.3 L8.0,2.1 L9.0,3.2 L10.0,4.3 L11.0,4.5 L12.0,3.9 L13.0,4.0 L14.0,4.2 L15.0,3.8 L16.0,3.3 L17.0,3.3 L18.0,2.6 L19.0,2.0 L20.0,2.6 L21.0,3.7 L22.0,5.1 L23.0,6.6 L24.0,8.0 L24.0,10.0 L23.0,11.4 L22.0,12.9 L21.0,14.3 L20.0,15.4 L19.0,16.0 L18.0,15.4 L17.0,14.7 L16.0,14.7 L15.0,14.2 L14.0,13.8 L13.0,14.0 L12.0,14.1 L11.0,13.5 L10.0,13.7 L9.0,14.8 L8.0,15.9 L7.0,16.7 L6.0,16.9 L5.0,14.8 L4.0,13.9 L3.0,12.4 L2.0,12.1ZM2.0,23.9 L3.0,23.6 L4.0,22.1 L5.0,21.2 L6.0,19.1 L7.0,19.3 L8.0,20.1 L9.0,21.2 L10.0,22.3 L11.0,22.5 L12.0,21.9 L13.0,22.0 L14.0,22.2 L15.0,21.8 L16.0,21.3 L17.0,21.3 L18.0,20.6 L19.0,20.0 L20.0,20.6 L21.0,21.7 L22.0,23.1 L23.0,24.6 L24.0,26.0 L24.0,28.0 L23.0,29.4 L22.0,30.9 L21.0,32.3 L20.0,33.4 L19.0,34.0 L18.0,33.4 L17.0,32.7 L16.0,32.7 L15.0,32.2 L14.0,31.8 L13.0,32.0 L12.0,32.1 L11.0,31.5 L10.0,31.7 L9.0,32.8 L8.0,33.9 L7.0,34.7 L6.0,34.9 L5.0,32.8 L4.0,31.9 L3.0,30.4 L2.0,30.1Z" fill="#1c211a"/></svg><b class="ct" style="left:326.4px;top:1031.3px;width:17.6px;color:#1e3a12">VO</b><i style="left:354px;top:1024px;width:6px;height:70px;background:#a8fa7c"></i><i style="left:354px;top:1024px;width:6px;height:2px;background:#5b9b3e"></i><i style="left:354px;top:1024px;width:2px;height:70px;background:#5b9b3e"></i><i style="left:354px;top:1056px;width:6px;height:2px;background:#5b9b3e"></i><svg style="left:354px;top:1058px" width="6" height="36" viewBox="0 0 6 36"><path d="M2.0,5.2 L3.0,4.9 L4.0,4.7 L5.0,4.9 L6.0,5.0 L6.0,13.0 L5.0,13.1 L4.0,13.3 L3.0,13.1 L2.0,12.8ZM2.0,23.2 L3.0,22.9 L4.0,22.7 L5.0,22.9 L6.0,23.0 L6.0,31.0 L5.0,31.1 L4.0,31.3 L3.0,31.1 L2.0,30.8Z" fill="#1c211a"/></svg><i style="left:362px;top:1024px;width:8px;height:70px;background:#a8fa7c"></i><i style="left:362px;top:1024px;width:8px;height:2px;background:#5b9b3e"></i><i style="left:362px;top:1024px;width:2px;height:70px;background:#5b9b3e"></i><i style="left:362px;top:1056px;width:8px;height:2px;background:#5b9b3e"></i><svg style="left:362px;top:1058px" width="8" height="36" viewBox="0 0 8 36"><path d="M2.0,5.3 L3.0,4.3 L4.0,3.9 L5.0,2.7 L6.0,2.9 L7.0,3.7 L8.0,4.4 L8.0,13.6 L7.0,14.3 L6.0,15.1 L5.0,15.3 L4.0,14.1 L3.0,13.7 L2.0,12.7ZM2.0,23.3 L3.0,22.3 L4.0,21.9 L5.0,20.7 L6.0,20.9 L7.0,21.7 L8.0,22.4 L8.0,31.6 L7.0,32.3 L6.0,33.1 L5.0,33.3 L4.0,32.1 L3.0,31.7 L2.0,30.7Z" fill="#1c211a"/></svg><i style="left:376px;top:1024px;width:20px;height:70px;background:#a8fa7c"></i><i style="left:376px;top:1024px;width:20px;height:2px;background:#5b9b3e"></i><i style="left:376px;top:1024px;width:2px;height:70px;background:#5b9b3e"></i><i style="left:376px;top:1056px;width:20px;height:2px;background:#5b9b3e"></i><svg style="left:376px;top:1058px" width="20" height="36" viewBox="0 0 20 36"><path d="M2.0,7.0 L3.0,5.9 L4.0,5.0 L5.0,3.7 L6.0,2.6 L7.0,1.2 L8.0,2.2 L9.0,3.7 L10.0,4.7 L11.0,4.6 L12.0,4.0 L13.0,4.8 L14.0,3.8 L15.0,3.8 L16.0,3.3 L17.0,2.6 L18.0,2.7 L19.0,3.5 L20.0,2.9 L20.0,15.1 L19.0,14.5 L18.0,15.3 L17.0,15.4 L16.0,14.7 L15.0,14.2 L14.0,14.2 L13.0,13.2 L12.0,14.0 L11.0,13.4 L10.0,13.3 L9.0,14.3 L8.0,15.8 L7.0,16.8 L6.0,15.4 L5.0,14.3 L4.0,13.0 L3.0,12.1 L2.0,11.0ZM2.0,25.0 L3.0,23.9 L4.0,23.0 L5.0,21.7 L6.0,20.6 L7.0,19.2 L8.0,20.2 L9.0,21.7 L10.0,22.7 L11.0,22.6 L12.0,22.0 L13.0,22.8 L14.0,21.8 L15.0,21.8 L16.0,21.3 L17.0,20.6 L18.0,20.7 L19.0,21.5 L20.0,20.9 L20.0,33.1 L19.0,32.5 L18.0,33.3 L17.0,33.4 L16.0,32.7 L15.0,32.2 L14.0,32.2 L13.0,31.2 L12.0,32.0 L11.0,31.4 L10.0,31.3 L9.0,32.3 L8.0,33.8 L7.0,34.8 L6.0,33.4 L5.0,32.3 L4.0,31.0 L3.0,30.1 L2.0,29.0Z" fill="#1c211a"/></svg><b class="ct" style="left:382.4px;top:1031.3px;width:13.6px;color:#1e3a12">VO</b><i style="left:410px;top:1024px;width:12px;height:70px;background:#a8fa7c"></i><i style="left:410px;top:1024px;width:12px;height:2px;background:#5b9b3e"></i><i style="left:410px;top:1024px;width:2px;height:70px;background:#5b9b3e"></i><i style="left:410px;top:1056px;width:12px;height:2px;background:#5b9b3e"></i><svg style="left:410px;top:1058px" width="12" height="36" viewBox="0 0 12 36"><path d="M2.0,5.0 L3.0,4.6 L4.0,4.4 L5.0,4.6 L6.0,4.7 L7.0,4.5 L8.0,4.1 L9.0,3.0 L10.0,3.4 L11.0,4.0 L12.0,4.7 L12.0,13.3 L11.0,14.0 L10.0,14.6 L9.0,15.0 L8.0,13.9 L7.0,13.5 L6.0,13.3 L5.0,13.4 L4.0,13.6 L3.0,13.4 L2.0,13.0ZM2.0,23.0 L3.0,22.6 L4.0,22.4 L5.0,22.6 L6.0,22.7 L7.0,22.5 L8.0,22.1 L9.0,21.0 L10.0,21.4 L11.0,22.0 L12.0,22.7 L12.0,31.3 L11.0,32.0 L10.0,32.6 L9.0,33.0 L8.0,31.9 L7.0,31.5 L6.0,31.3 L5.0,31.4 L4.0,31.6 L3.0,31.4 L2.0,31.0Z" fill="#1c211a"/></svg><b class="ct" style="left:416.4px;top:1031.3px;width:5.6px;color:#1e3a12">V</b><i style="left:422px;top:1024px;width:10px;height:34px;background:#686868"></i><i style="left:422px;top:1058px;width:10px;height:36px;background:#343434"></i><svg style="left:422px;top:1058px" width="10" height="36" viewBox="0 0 10 36"><path d="M0.0,3.0 L1.0,3.1 L2.0,3.1 L3.0,3.2 L4.0,3.9 L5.0,5.3 L6.0,6.5 L7.0,7.5 L8.0,8.0 L9.0,8.0 L10.0,8.0 L10.0,10.0 L9.0,10.0 L8.0,10.0 L7.0,10.5 L6.0,11.5 L5.0,12.7 L4.0,14.1 L3.0,14.8 L2.0,14.9 L1.0,14.9 L0.0,15.0ZM0.0,21.0 L1.0,21.1 L2.0,21.1 L3.0,21.2 L4.0,21.9 L5.0,23.3 L6.0,24.5 L7.0,25.5 L8.0,26.0 L9.0,26.0 L10.0,26.0 L10.0,28.0 L9.0,28.0 L8.0,28.0 L7.0,28.5 L6.0,29.5 L5.0,30.7 L4.0,32.1 L3.0,32.8 L2.0,32.9 L1.0,32.9 L0.0,33.0Z" fill="#6a6a6a"/></svg><b class="ct" style="left:425px;top:1031.8px;width:7px;color:#2e2e2e">V</b><i style="left:432px;top:1024px;width:24px;height:70px;background:#a8fa7c"></i><i style="left:432px;top:1024px;width:24px;height:2px;background:#5b9b3e"></i><i style="left:432px;top:1024px;width:2px;height:70px;background:#5b9b3e"></i><i style="left:432px;top:1056px;width:24px;height:2px;background:#5b9b3e"></i><svg style="left:432px;top:1058px" width="24" height="36" viewBox="0 0 24 36"><path d="M2.0,6.0 L3.0,5.0 L4.0,4.2 L5.0,3.3 L6.0,1.9 L7.0,2.0 L8.0,2.1 L9.0,3.4 L10.0,4.4 L11.0,4.4 L12.0,3.5 L13.0,4.5 L14.0,3.8 L15.0,3.8 L16.0,3.4 L17.0,3.0 L18.0,2.3 L19.0,2.3 L20.0,2.9 L21.0,3.5 L22.0,4.7 L23.0,6.9 L24.0,8.2 L24.0,9.8 L23.0,11.1 L22.0,13.3 L21.0,14.5 L20.0,15.1 L19.0,15.7 L18.0,15.7 L17.0,15.0 L16.0,14.6 L15.0,14.2 L14.0,14.2 L13.0,13.5 L12.0,14.5 L11.0,13.6 L10.0,13.6 L9.0,14.6 L8.0,15.9 L7.0,16.0 L6.0,16.1 L5.0,14.7 L4.0,13.8 L3.0,13.0 L2.0,12.0ZM2.0,24.0 L3.0,23.0 L4.0,22.2 L5.0,21.3 L6.0,19.9 L7.0,20.0 L8.0,20.1 L9.0,21.4 L10.0,22.4 L11.0,22.4 L12.0,21.5 L13.0,22.5 L14.0,21.8 L15.0,21.8 L16.0,21.4 L17.0,21.0 L18.0,20.3 L19.0,20.3 L20.0,20.9 L21.0,21.5 L22.0,22.7 L23.0,24.9 L24.0,26.2 L24.0,27.8 L23.0,29.1 L22.0,31.3 L21.0,32.5 L20.0,33.1 L19.0,33.7 L18.0,33.7 L17.0,33.0 L16.0,32.6 L15.0,32.2 L14.0,32.2 L13.0,31.5 L12.0,32.5 L11.0,31.6 L10.0,31.6 L9.0,32.6 L8.0,33.9 L7.0,34.0 L6.0,34.1 L5.0,32.7 L4.0,31.8 L3.0,31.0 L2.0,30.0Z" fill="#1c211a"/></svg><b class="ct" style="left:438.4px;top:1031.3px;width:17.6px;color:#1e3a12">VO</b><i style="left:468px;top:1024px;width:6px;height:70px;background:#a8fa7c"></i><i style="left:468px;top:1024px;width:6px;height:2px;background:#5b9b3e"></i><i style="left:468px;top:1024px;width:2px;height:70px;background:#5b9b3e"></i><i style="left:468px;top:1056px;width:6px;height:2px;background:#5b9b3e"></i><svg style="left:468px;top:1058px" width="6" height="36" viewBox="0 0 6 36"><path d="M2.0,5.1 L3.0,5.2 L4.0,5.0 L5.0,5.1 L6.0,5.3 L6.0,12.7 L5.0,12.9 L4.0,13.0 L3.0,12.8 L2.0,12.9ZM2.0,23.1 L3.0,23.2 L4.0,23.0 L5.0,23.1 L6.0,23.3 L6.0,30.7 L5.0,30.9 L4.0,31.0 L3.0,30.8 L2.0,30.9Z" fill="#1c211a"/></svg><i style="left:476px;top:1024px;width:8px;height:70px;background:#a8fa7c"></i><i style="left:476px;top:1024px;width:8px;height:2px;background:#5b9b3e"></i><i style="left:476px;top:1024px;width:2px;height:70px;background:#5b9b3e"></i><i style="left:476px;top:1056px;width:8px;height:2px;background:#5b9b3e"></i><svg style="left:476px;top:1058px" width="8" height="36" viewBox="0 0 8 36"><path d="M2.0,4.9 L3.0,4.6 L4.0,3.6 L5.0,3.5 L6.0,3.0 L7.0,3.4 L8.0,4.4 L8.0,13.6 L7.0,14.6 L6.0,15.0 L5.0,14.5 L4.0,14.4 L3.0,13.4 L2.0,13.1ZM2.0,22.9 L3.0,22.6 L4.0,21.6 L5.0,21.5 L6.0,21.0 L7.0,21.4 L8.0,22.4 L8.0,31.6 L7.0,32.6 L6.0,33.0 L5.0,32.5 L4.0,32.4 L3.0,31.4 L2.0,31.1Z" fill="#1c211a"/></svg><i style="left:490px;top:1024px;width:20px;height:70px;background:#a8fa7c"></i><i style="left:490px;top:1024px;width:20px;height:2px;background:#5b9b3e"></i><i style="left:490px;top:1024px;width:2px;height:70px;background:#5b9b3e"></i><i style="left:490px;top:1056px;width:20px;height:2px;background:#5b9b3e"></i><svg style="left:490px;top:1058px" width="20" height="36" viewBox="0 0 20 36"><path d="M2.0,7.0 L3.0,5.7 L4.0,4.1 L5.0,3.6 L6.0,1.9 L7.0,0.7 L8.0,2.1 L9.0,3.0 L10.0,4.9 L11.0,4.3 L12.0,4.3 L13.0,4.7 L14.0,3.7 L15.0,3.3 L16.0,2.7 L17.0,3.1 L18.0,2.9 L19.0,3.4 L20.0,3.0 L20.0,15.0 L19.0,14.6 L18.0,15.1 L17.0,14.9 L16.0,15.3 L15.0,14.7 L14.0,14.3 L13.0,13.3 L12.0,13.7 L11.0,13.7 L10.0,13.1 L9.0,15.0 L8.0,15.9 L7.0,17.3 L6.0,16.1 L5.0,14.4 L4.0,13.9 L3.0,12.3 L2.0,11.0ZM2.0,25.0 L3.0,23.7 L4.0,22.1 L5.0,21.6 L6.0,19.9 L7.0,18.7 L8.0,20.1 L9.0,21.0 L10.0,22.9 L11.0,22.3 L12.0,22.3 L13.0,22.7 L14.0,21.7 L15.0,21.3 L16.0,20.7 L17.0,21.1 L18.0,20.9 L19.0,21.4 L20.0,21.0 L20.0,33.0 L19.0,32.6 L18.0,33.1 L17.0,32.9 L16.0,33.3 L15.0,32.7 L14.0,32.3 L13.0,31.3 L12.0,31.7 L11.0,31.7 L10.0,31.1 L9.0,33.0 L8.0,33.9 L7.0,35.3 L6.0,34.1 L5.0,32.4 L4.0,31.9 L3.0,30.3 L2.0,29.0Z" fill="#1c211a"/></svg><b class="ct" style="left:496.4px;top:1031.3px;width:13.6px;color:#1e3a12">VO</b><i style="left:524px;top:1024px;width:12px;height:70px;background:#a8fa7c"></i><i style="left:524px;top:1024px;width:12px;height:2px;background:#5b9b3e"></i><i style="left:524px;top:1024px;width:2px;height:70px;background:#5b9b3e"></i><i style="left:524px;top:1056px;width:12px;height:2px;background:#5b9b3e"></i><svg style="left:524px;top:1058px" width="12" height="36" viewBox="0 0 12 36"><path d="M2.0,5.2 L3.0,4.8 L4.0,4.3 L5.0,4.3 L6.0,5.2 L7.0,4.3 L8.0,3.4 L9.0,3.3 L10.0,3.4 L11.0,4.3 L12.0,4.3 L12.0,13.7 L11.0,13.7 L10.0,14.6 L9.0,14.7 L8.0,14.6 L7.0,13.7 L6.0,12.8 L5.0,13.7 L4.0,13.7 L3.0,13.2 L2.0,12.8ZM2.0,23.2 L3.0,22.8 L4.0,22.3 L5.0,22.3 L6.0,23.2 L7.0,22.3 L8.0,21.4 L9.0,21.3 L10.0,21.4 L11.0,22.3 L12.0,22.3 L12.0,31.7 L11.0,31.7 L10.0,32.6 L9.0,32.7 L8.0,32.6 L7.0,31.7 L6.0,30.8 L5.0,31.7 L4.0,31.7 L3.0,31.2 L2.0,30.8Z" fill="#1c211a"/></svg><b class="ct" style="left:530.4px;top:1031.3px;width:5.6px;color:#1e3a12">V</b><i style="left:536px;top:1024px;width:10px;height:34px;background:#686868"></i><i style="left:536px;top:1058px;width:10px;height:36px;background:#343434"></i><svg style="left:536px;top:1058px" width="10" height="36" viewBox="0 0 10 36"><path d="M0.0,3.0 L1.0,3.1 L2.0,3.1 L3.0,3.2 L4.0,3.9 L5.0,5.3 L6.0,6.5 L7.0,7.5 L8.0,8.0 L9.0,8.0 L10.0,8.0 L10.0,10.0 L9.0,10.0 L8.0,10.0 L7.0,10.5 L6.0,11.5 L5.0,12.7 L4.0,14.1 L3.0,14.8 L2.0,14.9 L1.0,14.9 L0.0,15.0ZM0.0,21.0 L1.0,21.1 L2.0,21.1 L3.0,21.2 L4.0,21.9 L5.0,23.3 L6.0,24.5 L7.0,25.5 L8.0,26.0 L9.0,26.0 L10.0,26.0 L10.0,28.0 L9.0,28.0 L8.0,28.0 L7.0,28.5 L6.0,29.5 L5.0,30.7 L4.0,32.1 L3.0,32.8 L2.0,32.9 L1.0,32.9 L0.0,33.0Z" fill="#6a6a6a"/></svg><b class="ct" style="left:539px;top:1031.8px;width:7px;color:#2e2e2e">V</b><i style="left:546px;top:1024px;width:24px;height:70px;background:#a8fa7c"></i><i style="left:546px;top:1024px;width:24px;height:2px;background:#5b9b3e"></i><i style="left:546px;top:1024px;width:2px;height:70px;background:#5b9b3e"></i><i style="left:546px;top:1056px;width:24px;height:2px;background:#5b9b3e"></i><svg style="left:546px;top:1058px" width="24" height="36" viewBox="0 0 24 36"><path d="M2.0,5.8 L3.0,5.4 L4.0,3.9 L5.0,2.6 L6.0,1.8 L7.0,2.0 L8.0,2.9 L9.0,3.1 L10.0,4.4 L11.0,4.7 L12.0,4.0 L13.0,4.3 L14.0,4.4 L15.0,3.6 L16.0,3.4 L17.0,2.9 L18.0,2.6 L19.0,2.6 L20.0,2.5 L21.0,3.4 L22.0,5.3 L23.0,6.2 L24.0,7.9 L24.0,10.1 L23.0,11.8 L22.0,12.7 L21.0,14.6 L20.0,15.5 L19.0,15.4 L18.0,15.4 L17.0,15.1 L16.0,14.6 L15.0,14.4 L14.0,13.6 L13.0,13.7 L12.0,14.0 L11.0,13.3 L10.0,13.6 L9.0,14.9 L8.0,15.1 L7.0,16.0 L6.0,16.2 L5.0,15.4 L4.0,14.1 L3.0,12.6 L2.0,12.2ZM2.0,23.8 L3.0,23.4 L4.0,21.9 L5.0,20.6 L6.0,19.8 L7.0,20.0 L8.0,20.9 L9.0,21.1 L10.0,22.4 L11.0,22.7 L12.0,22.0 L13.0,22.3 L14.0,22.4 L15.0,21.6 L16.0,21.4 L17.0,20.9 L18.0,20.6 L19.0,20.6 L20.0,20.5 L21.0,21.4 L22.0,23.3 L23.0,24.2 L24.0,25.9 L24.0,28.1 L23.0,29.8 L22.0,30.7 L21.0,32.6 L20.0,33.5 L19.0,33.4 L18.0,33.4 L17.0,33.1 L16.0,32.6 L15.0,32.4 L14.0,31.6 L13.0,31.7 L12.0,32.0 L11.0,31.3 L10.0,31.6 L9.0,32.9 L8.0,33.1 L7.0,34.0 L6.0,34.2 L5.0,33.4 L4.0,32.1 L3.0,30.6 L2.0,30.2Z" fill="#1c211a"/></svg><b class="ct" style="left:552.4px;top:1031.3px;width:17.6px;color:#1e3a12">VO</b><i style="left:582px;top:1024px;width:4px;height:34px;background:#686868"></i><i style="left:582px;top:1058px;width:4px;height:36px;background:#343434"></i><svg style="left:582px;top:1058px" width="4" height="36" viewBox="0 0 4 36"><path d="M0.0,5.4 L1.0,4.9 L2.0,4.7 L3.0,4.8 L4.0,5.0 L4.0,13.0 L3.0,13.2 L2.0,13.3 L1.0,13.1 L0.0,12.6ZM0.0,23.4 L1.0,22.9 L2.0,22.7 L3.0,22.8 L4.0,23.0 L4.0,31.0 L3.0,31.2 L2.0,31.3 L1.0,31.1 L0.0,30.6Z" fill="#6a6a6a"/></svg><i style="left:586px;top:1024px;width:4px;height:70px;background:#a8fa7c"></i><i style="left:586px;top:1024px;width:4px;height:2px;background:#5b9b3e"></i><i style="left:586px;top:1024px;width:2px;height:70px;background:#5b9b3e"></i><i style="left:586px;top:1056px;width:4px;height:2px;background:#5b9b3e"></i><svg style="left:586px;top:1058px" width="4" height="36" viewBox="0 0 4 36"><path d="M2.0,5.5 L3.0,4.5 L4.0,4.7 L4.0,13.3 L3.0,13.5 L2.0,12.5ZM2.0,23.5 L3.0,22.5 L4.0,22.7 L4.0,31.3 L3.0,31.5 L2.0,30.5Z" fill="#1c211a"/></svg><i style="left:592px;top:1024px;width:6px;height:70px;background:#a8fa7c"></i><i style="left:592px;top:1024px;width:6px;height:2px;background:#5b9b3e"></i><i style="left:592px;top:1024px;width:2px;height:70px;background:#5b9b3e"></i><i style="left:592px;top:1056px;width:6px;height:2px;background:#5b9b3e"></i><svg style="left:592px;top:1058px" width="6" height="36" viewBox="0 0 6 36"><path d="M2.0,4.9 L3.0,4.2 L4.0,3.3 L5.0,3.7 L6.0,3.8 L6.0,14.2 L5.0,14.3 L4.0,14.7 L3.0,13.8 L2.0,13.1ZM2.0,22.9 L3.0,22.2 L4.0,21.3 L5.0,21.7 L6.0,21.8 L6.0,32.2 L5.0,32.3 L4.0,32.7 L3.0,31.8 L2.0,31.1Z" fill="#1c211a"/></svg><i style="left:604px;top:1024px;width:20px;height:34px;background:#686868"></i><i style="left:604px;top:1058px;width:20px;height:36px;background:#343434"></i><svg style="left:604px;top:1058px" width="20" height="36" viewBox="0 0 20 36"><path d="M0.0,6.9 L1.0,6.1 L2.0,5.2 L3.0,3.6 L4.0,2.5 L5.0,1.4 L6.0,1.8 L7.0,3.0 L8.0,3.4 L9.0,4.7 L10.0,4.3 L11.0,3.9 L12.0,4.1 L13.0,4.3 L14.0,4.1 L15.0,3.4 L16.0,2.7 L17.0,3.3 L18.0,3.0 L19.0,2.7 L20.0,3.6 L20.0,14.4 L19.0,15.3 L18.0,15.0 L17.0,14.7 L16.0,15.3 L15.0,14.6 L14.0,13.9 L13.0,13.7 L12.0,13.9 L11.0,14.1 L10.0,13.7 L9.0,13.3 L8.0,14.6 L7.0,15.0 L6.0,16.2 L5.0,16.6 L4.0,15.5 L3.0,14.4 L2.0,12.8 L1.0,11.9 L0.0,11.1ZM0.0,24.9 L1.0,24.1 L2.0,23.2 L3.0,21.6 L4.0,20.5 L5.0,19.4 L6.0,19.8 L7.0,21.0 L8.0,21.4 L9.0,22.7 L10.0,22.3 L11.0,21.9 L12.0,22.1 L13.0,22.3 L14.0,22.1 L15.0,21.4 L16.0,20.7 L17.0,21.3 L18.0,21.0 L19.0,20.7 L20.0,21.6 L20.0,32.4 L19.0,33.3 L18.0,33.0 L17.0,32.7 L16.0,33.3 L15.0,32.6 L14.0,31.9 L13.0,31.7 L12.0,31.9 L11.0,32.1 L10.0,31.7 L9.0,31.3 L8.0,32.6 L7.0,33.0 L6.0,34.2 L5.0,34.6 L4.0,33.5 L3.0,32.4 L2.0,30.8 L1.0,29.9 L0.0,29.1Z" fill="#6a6a6a"/></svg><b class="ct" style="left:611px;top:1031.8px;width:13px;color:#2e2e2e">VO</b><i style="left:640px;top:1024px;width:10px;height:70px;background:#a8fa7c"></i><i style="left:640px;top:1024px;width:10px;height:2px;background:#5b9b3e"></i><i style="left:640px;top:1024px;width:2px;height:70px;background:#5b9b3e"></i><i style="left:640px;top:1056px;width:10px;height:2px;background:#5b9b3e"></i><svg style="left:640px;top:1058px" width="10" height="36" viewBox="0 0 10 36"><path d="M2.0,4.8 L3.0,4.9 L4.0,4.4 L5.0,5.1 L6.0,4.6 L7.0,3.3 L8.0,2.7 L9.0,3.6 L10.0,4.6 L10.0,13.4 L9.0,14.4 L8.0,15.3 L7.0,14.7 L6.0,13.4 L5.0,12.9 L4.0,13.6 L3.0,13.1 L2.0,13.2ZM2.0,22.8 L3.0,22.9 L4.0,22.4 L5.0,23.1 L6.0,22.6 L7.0,21.3 L8.0,20.7 L9.0,21.6 L10.0,22.6 L10.0,31.4 L9.0,32.4 L8.0,33.3 L7.0,32.7 L6.0,31.4 L5.0,30.9 L4.0,31.6 L3.0,31.1 L2.0,31.2Z" fill="#1c211a"/></svg><b class="ct" style="left:646.4px;top:1031.3px;width:3.5999999999999996px;color:#1e3a12">V</b><i style="left:650px;top:1024px;width:10px;height:34px;background:#686868"></i><i style="left:650px;top:1058px;width:10px;height:36px;background:#343434"></i><svg style="left:650px;top:1058px" width="10" height="36" viewBox="0 0 10 36"><path d="M0.0,3.0 L1.0,3.1 L2.0,3.1 L3.0,3.2 L4.0,3.9 L5.0,5.3 L6.0,6.5 L7.0,7.5 L8.0,8.0 L9.0,8.0 L10.0,8.0 L10.0,10.0 L9.0,10.0 L8.0,10.0 L7.0,10.5 L6.0,11.5 L5.0,12.7 L4.0,14.1 L3.0,14.8 L2.0,14.9 L1.0,14.9 L0.0,15.0ZM0.0,21.0 L1.0,21.1 L2.0,21.1 L3.0,21.2 L4.0,21.9 L5.0,23.3 L6.0,24.5 L7.0,25.5 L8.0,26.0 L9.0,26.0 L10.0,26.0 L10.0,28.0 L9.0,28.0 L8.0,28.0 L7.0,28.5 L6.0,29.5 L5.0,30.7 L4.0,32.1 L3.0,32.8 L2.0,32.9 L1.0,32.9 L0.0,33.0Z" fill="#6a6a6a"/></svg><b class="ct" style="left:653px;top:1031.8px;width:7px;color:#2e2e2e">V</b><i style="left:660px;top:1024px;width:26px;height:34px;background:#686868"></i><i style="left:660px;top:1058px;width:26px;height:36px;background:#343434"></i><svg style="left:660px;top:1058px" width="26" height="36" viewBox="0 0 26 36"><path d="M0.0,6.0 L1.0,5.7 L2.0,4.2 L3.0,3.3 L4.0,2.3 L5.0,1.0 L6.0,1.6 L7.0,2.1 L8.0,3.0 L9.0,4.3 L10.0,4.6 L11.0,4.0 L12.0,3.5 L13.0,3.9 L14.0,3.9 L15.0,4.1 L16.0,3.9 L17.0,3.4 L18.0,2.5 L19.0,2.2 L20.0,2.4 L21.0,2.3 L22.0,2.8 L23.0,3.9 L24.0,5.0 L25.0,6.3 L26.0,7.8 L26.0,10.2 L25.0,11.7 L24.0,13.0 L23.0,14.1 L22.0,15.2 L21.0,15.7 L20.0,15.6 L19.0,15.8 L18.0,15.5 L17.0,14.6 L16.0,14.1 L15.0,13.9 L14.0,14.1 L13.0,14.1 L12.0,14.5 L11.0,14.0 L10.0,13.4 L9.0,13.7 L8.0,15.0 L7.0,15.9 L6.0,16.4 L5.0,17.0 L4.0,15.7 L3.0,14.7 L2.0,13.8 L1.0,12.3 L0.0,12.0ZM0.0,24.0 L1.0,23.7 L2.0,22.2 L3.0,21.3 L4.0,20.3 L5.0,19.0 L6.0,19.6 L7.0,20.1 L8.0,21.0 L9.0,22.3 L10.0,22.6 L11.0,22.0 L12.0,21.5 L13.0,21.9 L14.0,21.9 L15.0,22.1 L16.0,21.9 L17.0,21.4 L18.0,20.5 L19.0,20.2 L20.0,20.4 L21.0,20.3 L22.0,20.8 L23.0,21.9 L24.0,23.0 L25.0,24.3 L26.0,25.8 L26.0,28.2 L25.0,29.7 L24.0,31.0 L23.0,32.1 L22.0,33.2 L21.0,33.7 L20.0,33.6 L19.0,33.8 L18.0,33.5 L17.0,32.6 L16.0,32.1 L15.0,31.9 L14.0,32.1 L13.0,32.1 L12.0,32.5 L11.0,32.0 L10.0,31.4 L9.0,31.7 L8.0,33.0 L7.0,33.9 L6.0,34.4 L5.0,35.0 L4.0,33.7 L3.0,32.7 L2.0,31.8 L1.0,30.3 L0.0,30.0Z" fill="#6a6a6a"/></svg><b class="ct" style="left:667px;top:1031.8px;width:19px;color:#2e2e2e">VO</b><i style="left:1150px;top:1024px;width:6px;height:70px;background:#a8fa7c"></i><i style="left:1150px;top:1024px;width:6px;height:2px;background:#5b9b3e"></i><i style="left:1150px;top:1024px;width:2px;height:70px;background:#5b9b3e"></i><i style="left:1150px;top:1056px;width:6px;height:2px;background:#5b9b3e"></i><svg style="left:1150px;top:1058px" width="6" height="36" viewBox="0 0 6 36"><path d="M2.0,4.9 L3.0,4.5 L4.0,4.2 L5.0,5.1 L6.0,5.2 L6.0,12.8 L5.0,12.9 L4.0,13.8 L3.0,13.5 L2.0,13.1ZM2.0,22.9 L3.0,22.5 L4.0,22.2 L5.0,23.1 L6.0,23.2 L6.0,30.8 L5.0,30.9 L4.0,31.8 L3.0,31.5 L2.0,31.1Z" fill="#1c211a"/></svg><i style="left:1158px;top:1024px;width:8px;height:70px;background:#a8fa7c"></i><i style="left:1158px;top:1024px;width:8px;height:2px;background:#5b9b3e"></i><i style="left:1158px;top:1024px;width:2px;height:70px;background:#5b9b3e"></i><i style="left:1158px;top:1056px;width:8px;height:2px;background:#5b9b3e"></i><svg style="left:1158px;top:1058px" width="8" height="36" viewBox="0 0 8 36"><path d="M2.0,5.4 L3.0,4.3 L4.0,3.8 L5.0,2.9 L6.0,3.1 L7.0,3.4 L8.0,4.4 L8.0,13.6 L7.0,14.6 L6.0,14.9 L5.0,15.1 L4.0,14.2 L3.0,13.7 L2.0,12.6ZM2.0,23.4 L3.0,22.3 L4.0,21.8 L5.0,20.9 L6.0,21.1 L7.0,21.4 L8.0,22.4 L8.0,31.6 L7.0,32.6 L6.0,32.9 L5.0,33.1 L4.0,32.2 L3.0,31.7 L2.0,30.6Z" fill="#1c211a"/></svg><i style="left:1208px;top:1024px;width:6px;height:70px;background:#a8fa7c"></i><i style="left:1208px;top:1024px;width:6px;height:2px;background:#5b9b3e"></i><i style="left:1208px;top:1024px;width:2px;height:70px;background:#5b9b3e"></i><i style="left:1208px;top:1056px;width:6px;height:2px;background:#5b9b3e"></i><svg style="left:1208px;top:1058px" width="6" height="36" viewBox="0 0 6 36"><path d="M2.0,5.0 L3.0,5.0 L4.0,4.9 L5.0,5.2 L6.0,4.8 L6.0,13.2 L5.0,12.8 L4.0,13.1 L3.0,13.0 L2.0,13.0ZM2.0,23.0 L3.0,23.0 L4.0,22.9 L5.0,23.2 L6.0,22.8 L6.0,31.2 L5.0,30.8 L4.0,31.1 L3.0,31.0 L2.0,31.0Z" fill="#1c211a"/></svg><i style="left:1216px;top:1024px;width:8px;height:70px;background:#a8fa7c"></i><i style="left:1216px;top:1024px;width:8px;height:2px;background:#5b9b3e"></i><i style="left:1216px;top:1024px;width:2px;height:70px;background:#5b9b3e"></i><i style="left:1216px;top:1056px;width:8px;height:2px;background:#5b9b3e"></i><svg style="left:1216px;top:1058px" width="8" height="36" viewBox="0 0 8 36"><path d="M2.0,4.8 L3.0,4.5 L4.0,3.4 L5.0,3.0 L6.0,3.5 L7.0,4.0 L8.0,4.1 L8.0,13.9 L7.0,14.0 L6.0,14.5 L5.0,15.0 L4.0,14.6 L3.0,13.5 L2.0,13.2ZM2.0,22.8 L3.0,22.5 L4.0,21.4 L5.0,21.0 L6.0,21.5 L7.0,22.0 L8.0,22.1 L8.0,31.9 L7.0,32.0 L6.0,32.5 L5.0,33.0 L4.0,32.6 L3.0,31.5 L2.0,31.2Z" fill="#1c211a"/></svg><i style="left:1264px;top:1024px;width:6px;height:70px;background:#a8fa7c"></i><i style="left:1264px;top:1024px;width:6px;height:2px;background:#5b9b3e"></i><i style="left:1264px;top:1024px;width:2px;height:70px;background:#5b9b3e"></i><i style="left:1264px;top:1056px;width:6px;height:2px;background:#5b9b3e"></i><svg style="left:1264px;top:1058px" width="6" height="36" viewBox="0 0 6 36"><path d="M2.0,5.1 L3.0,4.6 L4.0,4.5 L5.0,5.2 L6.0,5.0 L6.0,13.0 L5.0,12.8 L4.0,13.5 L3.0,13.4 L2.0,12.9ZM2.0,23.1 L3.0,22.6 L4.0,22.5 L5.0,23.2 L6.0,23.0 L6.0,31.0 L5.0,30.8 L4.0,31.5 L3.0,31.4 L2.0,30.9Z" fill="#1c211a"/></svg><i style="left:1272px;top:1024px;width:8px;height:70px;background:#a8fa7c"></i><i style="left:1272px;top:1024px;width:8px;height:2px;background:#5b9b3e"></i><i style="left:1272px;top:1024px;width:2px;height:70px;background:#5b9b3e"></i><i style="left:1272px;top:1056px;width:8px;height:2px;background:#5b9b3e"></i><svg style="left:1272px;top:1058px" width="8" height="36" viewBox="0 0 8 36"><path d="M2.0,4.8 L3.0,4.7 L4.0,3.9 L5.0,2.7 L6.0,3.5 L7.0,3.8 L8.0,3.8 L8.0,14.2 L7.0,14.2 L6.0,14.5 L5.0,15.3 L4.0,14.1 L3.0,13.3 L2.0,13.2ZM2.0,22.8 L3.0,22.7 L4.0,21.9 L5.0,20.7 L6.0,21.5 L7.0,21.8 L8.0,21.8 L8.0,32.2 L7.0,32.2 L6.0,32.5 L5.0,33.3 L4.0,32.1 L3.0,31.3 L2.0,31.2Z" fill="#1c211a"/></svg><i style="left:1286px;top:1024px;width:20px;height:70px;background:#a8fa7c"></i><i style="left:1286px;top:1024px;width:20px;height:2px;background:#5b9b3e"></i><i style="left:1286px;top:1024px;width:2px;height:70px;background:#5b9b3e"></i><i style="left:1286px;top:1056px;width:20px;height:2px;background:#5b9b3e"></i><svg style="left:1286px;top:1058px" width="20" height="36" viewBox="0 0 20 36"><path d="M2.0,6.9 L3.0,5.4 L4.0,4.5 L5.0,3.3 L6.0,2.7 L7.0,1.2 L8.0,2.3 L9.0,3.1 L10.0,4.5 L11.0,4.3 L12.0,3.9 L13.0,4.8 L14.0,3.6 L15.0,3.6 L16.0,2.5 L17.0,2.5 L18.0,3.0 L19.0,2.7 L20.0,3.2 L20.0,14.8 L19.0,15.3 L18.0,15.0 L17.0,15.5 L16.0,15.5 L15.0,14.4 L14.0,14.4 L13.0,13.2 L12.0,14.1 L11.0,13.7 L10.0,13.5 L9.0,14.9 L8.0,15.7 L7.0,16.8 L6.0,15.3 L5.0,14.7 L4.0,13.5 L3.0,12.6 L2.0,11.1ZM2.0,24.9 L3.0,23.4 L4.0,22.5 L5.0,21.3 L6.0,20.7 L7.0,19.2 L8.0,20.3 L9.0,21.1 L10.0,22.5 L11.0,22.3 L12.0,21.9 L13.0,22.8 L14.0,21.6 L15.0,21.6 L16.0,20.5 L17.0,20.5 L18.0,21.0 L19.0,20.7 L20.0,21.2 L20.0,32.8 L19.0,33.3 L18.0,33.0 L17.0,33.5 L16.0,33.5 L15.0,32.4 L14.0,32.4 L13.0,31.2 L12.0,32.1 L11.0,31.7 L10.0,31.5 L9.0,32.9 L8.0,33.7 L7.0,34.8 L6.0,33.3 L5.0,32.7 L4.0,31.5 L3.0,30.6 L2.0,29.1Z" fill="#1c211a"/></svg><b class="ct" style="left:1292.4px;top:1031.3px;width:13.6px;color:#1e3a12">VO</b><i style="left:1320px;top:1024px;width:12px;height:70px;background:#a8fa7c"></i><i style="left:1320px;top:1024px;width:12px;height:2px;background:#5b9b3e"></i><i style="left:1320px;top:1024px;width:2px;height:70px;background:#5b9b3e"></i><i style="left:1320px;top:1056px;width:12px;height:2px;background:#5b9b3e"></i><svg style="left:1320px;top:1058px" width="12" height="36" viewBox="0 0 12 36"><path d="M2.0,5.0 L3.0,4.9 L4.0,4.6 L5.0,4.6 L6.0,4.6 L7.0,4.6 L8.0,4.1 L9.0,2.8 L10.0,3.1 L11.0,3.8 L12.0,4.8 L12.0,13.2 L11.0,14.2 L10.0,14.9 L9.0,15.2 L8.0,13.9 L7.0,13.4 L6.0,13.4 L5.0,13.4 L4.0,13.4 L3.0,13.1 L2.0,13.0ZM2.0,23.0 L3.0,22.9 L4.0,22.6 L5.0,22.6 L6.0,22.6 L7.0,22.6 L8.0,22.1 L9.0,20.8 L10.0,21.1 L11.0,21.8 L12.0,22.8 L12.0,31.2 L11.0,32.2 L10.0,32.9 L9.0,33.2 L8.0,31.9 L7.0,31.4 L6.0,31.4 L5.0,31.4 L4.0,31.4 L3.0,31.1 L2.0,31.0Z" fill="#1c211a"/></svg><b class="ct" style="left:1326.4px;top:1031.3px;width:5.6px;color:#1e3a12">V</b><i style="left:1332px;top:1024px;width:10px;height:34px;background:#686868"></i><i style="left:1332px;top:1058px;width:10px;height:36px;background:#343434"></i><svg style="left:1332px;top:1058px" width="10" height="36" viewBox="0 0 10 36"><path d="M0.0,3.0 L1.0,3.1 L2.0,3.1 L3.0,3.2 L4.0,3.9 L5.0,5.3 L6.0,6.5 L7.0,7.5 L8.0,8.0 L9.0,8.0 L10.0,8.0 L10.0,10.0 L9.0,10.0 L8.0,10.0 L7.0,10.5 L6.0,11.5 L5.0,12.7 L4.0,14.1 L3.0,14.8 L2.0,14.9 L1.0,14.9 L0.0,15.0ZM0.0,21.0 L1.0,21.1 L2.0,21.1 L3.0,21.2 L4.0,21.9 L5.0,23.3 L6.0,24.5 L7.0,25.5 L8.0,26.0 L9.0,26.0 L10.0,26.0 L10.0,28.0 L9.0,28.0 L8.0,28.0 L7.0,28.5 L6.0,29.5 L5.0,30.7 L4.0,32.1 L3.0,32.8 L2.0,32.9 L1.0,32.9 L0.0,33.0Z" fill="#6a6a6a"/></svg><b class="ct" style="left:1335px;top:1031.8px;width:7px;color:#2e2e2e">V</b><i style="left:1342px;top:1024px;width:24px;height:70px;background:#a8fa7c"></i><i style="left:1342px;top:1024px;width:24px;height:2px;background:#5b9b3e"></i><i style="left:1342px;top:1024px;width:2px;height:70px;background:#5b9b3e"></i><i style="left:1342px;top:1056px;width:24px;height:2px;background:#5b9b3e"></i><svg style="left:1342px;top:1058px" width="24" height="36" viewBox="0 0 24 36"><path d="M2.0,6.1 L3.0,5.7 L4.0,3.9 L5.0,2.6 L6.0,1.1 L7.0,1.4 L8.0,2.7 L9.0,3.3 L10.0,4.4 L11.0,4.1 L12.0,3.7 L13.0,4.1 L14.0,3.7 L15.0,3.7 L16.0,3.4 L17.0,2.6 L18.0,2.3 L19.0,2.1 L20.0,2.1 L21.0,3.3 L22.0,4.6 L23.0,6.1 L24.0,7.6 L24.0,10.4 L23.0,11.9 L22.0,13.4 L21.0,14.7 L20.0,15.9 L19.0,15.9 L18.0,15.7 L17.0,15.4 L16.0,14.6 L15.0,14.3 L14.0,14.3 L13.0,13.9 L12.0,14.3 L11.0,13.9 L10.0,13.6 L9.0,14.7 L8.0,15.3 L7.0,16.6 L6.0,16.9 L5.0,15.4 L4.0,14.1 L3.0,12.3 L2.0,11.9ZM2.0,24.1 L3.0,23.7 L4.0,21.9 L5.0,20.6 L6.0,19.1 L7.0,19.4 L8.0,20.7 L9.0,21.3 L10.0,22.4 L11.0,22.1 L12.0,21.7 L13.0,22.1 L14.0,21.7 L15.0,21.7 L16.0,21.4 L17.0,20.6 L18.0,20.3 L19.0,20.1 L20.0,20.1 L21.0,21.3 L22.0,22.6 L23.0,24.1 L24.0,25.6 L24.0,28.4 L23.0,29.9 L22.0,31.4 L21.0,32.7 L20.0,33.9 L19.0,33.9 L18.0,33.7 L17.0,33.4 L16.0,32.6 L15.0,32.3 L14.0,32.3 L13.0,31.9 L12.0,32.3 L11.0,31.9 L10.0,31.6 L9.0,32.7 L8.0,33.3 L7.0,34.6 L6.0,34.9 L5.0,33.4 L4.0,32.1 L3.0,30.3 L2.0,29.9Z" fill="#1c211a"/></svg><b class="ct" style="left:1348.4px;top:1031.3px;width:17.6px;color:#1e3a12">VO</b><i style="left:1378px;top:1024px;width:6px;height:70px;background:#a8fa7c"></i><i style="left:1378px;top:1024px;width:6px;height:2px;background:#5b9b3e"></i><i style="left:1378px;top:1024px;width:2px;height:70px;background:#5b9b3e"></i><i style="left:1378px;top:1056px;width:6px;height:2px;background:#5b9b3e"></i><svg style="left:1378px;top:1058px" width="6" height="36" viewBox="0 0 6 36"><path d="M2.0,5.5 L3.0,4.9 L4.0,4.7 L5.0,5.2 L6.0,5.3 L6.0,12.7 L5.0,12.8 L4.0,13.3 L3.0,13.1 L2.0,12.5ZM2.0,23.5 L3.0,22.9 L4.0,22.7 L5.0,23.2 L6.0,23.3 L6.0,30.7 L5.0,30.8 L4.0,31.3 L3.0,31.1 L2.0,30.5Z" fill="#1c211a"/></svg><i style="left:1386px;top:1024px;width:8px;height:70px;background:#a8fa7c"></i><i style="left:1386px;top:1024px;width:8px;height:2px;background:#5b9b3e"></i><i style="left:1386px;top:1024px;width:2px;height:70px;background:#5b9b3e"></i><i style="left:1386px;top:1056px;width:8px;height:2px;background:#5b9b3e"></i><svg style="left:1386px;top:1058px" width="8" height="36" viewBox="0 0 8 36"><path d="M2.0,5.0 L3.0,4.7 L4.0,3.4 L5.0,3.5 L6.0,2.8 L7.0,3.4 L8.0,3.6 L8.0,14.4 L7.0,14.6 L6.0,15.2 L5.0,14.5 L4.0,14.6 L3.0,13.3 L2.0,13.0ZM2.0,23.0 L3.0,22.7 L4.0,21.4 L5.0,21.5 L6.0,20.8 L7.0,21.4 L8.0,21.6 L8.0,32.4 L7.0,32.6 L6.0,33.2 L5.0,32.5 L4.0,32.6 L3.0,31.3 L2.0,31.0Z" fill="#1c211a"/></svg><i style="left:1400px;top:1024px;width:20px;height:70px;background:#a8fa7c"></i><i style="left:1400px;top:1024px;width:20px;height:2px;background:#5b9b3e"></i><i style="left:1400px;top:1024px;width:2px;height:70px;background:#5b9b3e"></i><i style="left:1400px;top:1056px;width:20px;height:2px;background:#5b9b3e"></i><svg style="left:1400px;top:1058px" width="20" height="36" viewBox="0 0 20 36"><path d="M2.0,6.6 L3.0,6.2 L4.0,4.2 L5.0,3.1 L6.0,2.5 L7.0,1.5 L8.0,2.5 L9.0,3.8 L10.0,4.7 L11.0,4.1 L12.0,4.4 L13.0,4.8 L14.0,4.3 L15.0,3.6 L16.0,2.7 L17.0,3.2 L18.0,2.7 L19.0,3.3 L20.0,3.0 L20.0,15.0 L19.0,14.7 L18.0,15.3 L17.0,14.8 L16.0,15.3 L15.0,14.4 L14.0,13.7 L13.0,13.2 L12.0,13.6 L11.0,13.9 L10.0,13.3 L9.0,14.2 L8.0,15.5 L7.0,16.5 L6.0,15.5 L5.0,14.9 L4.0,13.8 L3.0,11.8 L2.0,11.4ZM2.0,24.6 L3.0,24.2 L4.0,22.2 L5.0,21.1 L6.0,20.5 L7.0,19.5 L8.0,20.5 L9.0,21.8 L10.0,22.7 L11.0,22.1 L12.0,22.4 L13.0,22.8 L14.0,22.3 L15.0,21.6 L16.0,20.7 L17.0,21.2 L18.0,20.7 L19.0,21.3 L20.0,21.0 L20.0,33.0 L19.0,32.7 L18.0,33.3 L17.0,32.8 L16.0,33.3 L15.0,32.4 L14.0,31.7 L13.0,31.2 L12.0,31.6 L11.0,31.9 L10.0,31.3 L9.0,32.2 L8.0,33.5 L7.0,34.5 L6.0,33.5 L5.0,32.9 L4.0,31.8 L3.0,29.8 L2.0,29.4Z" fill="#1c211a"/></svg><b class="ct" style="left:1406.4px;top:1031.3px;width:13.6px;color:#1e3a12">VO</b><i style="left:1434px;top:1024px;width:12px;height:70px;background:#a8fa7c"></i><i style="left:1434px;top:1024px;width:12px;height:2px;background:#5b9b3e"></i><i style="left:1434px;top:1024px;width:2px;height:70px;background:#5b9b3e"></i><i style="left:1434px;top:1056px;width:12px;height:2px;background:#5b9b3e"></i><svg style="left:1434px;top:1058px" width="12" height="36" viewBox="0 0 12 36"><path d="M2.0,5.3 L3.0,4.9 L4.0,4.9 L5.0,4.3 L6.0,4.7 L7.0,4.3 L8.0,3.4 L9.0,3.0 L10.0,3.5 L11.0,3.9 L12.0,4.7 L12.0,13.3 L11.0,14.1 L10.0,14.5 L9.0,15.0 L8.0,14.6 L7.0,13.7 L6.0,13.3 L5.0,13.7 L4.0,13.1 L3.0,13.1 L2.0,12.7ZM2.0,23.3 L3.0,22.9 L4.0,22.9 L5.0,22.3 L6.0,22.7 L7.0,22.3 L8.0,21.4 L9.0,21.0 L10.0,21.5 L11.0,21.9 L12.0,22.7 L12.0,31.3 L11.0,32.1 L10.0,32.5 L9.0,33.0 L8.0,32.6 L7.0,31.7 L6.0,31.3 L5.0,31.7 L4.0,31.1 L3.0,31.1 L2.0,30.7Z" fill="#1c211a"/></svg><b class="ct" style="left:1440.4px;top:1031.3px;width:5.6px;color:#1e3a12">V</b><i style="left:1446px;top:1024px;width:10px;height:34px;background:#686868"></i><i style="left:1446px;top:1058px;width:10px;height:36px;background:#343434"></i><svg style="left:1446px;top:1058px" width="10" height="36" viewBox="0 0 10 36"><path d="M0.0,3.0 L1.0,3.1 L2.0,3.1 L3.0,3.2 L4.0,3.9 L5.0,5.3 L6.0,6.5 L7.0,7.5 L8.0,8.0 L9.0,8.0 L10.0,8.0 L10.0,10.0 L9.0,10.0 L8.0,10.0 L7.0,10.5 L6.0,11.5 L5.0,12.7 L4.0,14.1 L3.0,14.8 L2.0,14.9 L1.0,14.9 L0.0,15.0ZM0.0,21.0 L1.0,21.1 L2.0,21.1 L3.0,21.2 L4.0,21.9 L5.0,23.3 L6.0,24.5 L7.0,25.5 L8.0,26.0 L9.0,26.0 L10.0,26.0 L10.0,28.0 L9.0,28.0 L8.0,28.0 L7.0,28.5 L6.0,29.5 L5.0,30.7 L4.0,32.1 L3.0,32.8 L2.0,32.9 L1.0,32.9 L0.0,33.0Z" fill="#6a6a6a"/></svg><b class="ct" style="left:1449px;top:1031.8px;width:7px;color:#2e2e2e">V</b><i style="left:1456px;top:1024px;width:24px;height:70px;background:#a8fa7c"></i><i style="left:1456px;top:1024px;width:24px;height:2px;background:#5b9b3e"></i><i style="left:1456px;top:1024px;width:2px;height:70px;background:#5b9b3e"></i><i style="left:1456px;top:1056px;width:24px;height:2px;background:#5b9b3e"></i><svg style="left:1456px;top:1058px" width="24" height="36" viewBox="0 0 24 36"><path d="M2.0,6.3 L3.0,5.3 L4.0,4.4 L5.0,2.5 L6.0,1.1 L7.0,1.5 L8.0,2.3 L9.0,3.1 L10.0,4.8 L11.0,4.3 L12.0,3.9 L13.0,4.1 L14.0,3.8 L15.0,4.1 L16.0,3.1 L17.0,3.1 L18.0,2.8 L19.0,2.2 L20.0,2.3 L21.0,3.6 L22.0,5.1 L23.0,6.3 L24.0,8.2 L24.0,9.8 L23.0,11.7 L22.0,12.9 L21.0,14.4 L20.0,15.7 L19.0,15.8 L18.0,15.2 L17.0,14.9 L16.0,14.9 L15.0,13.9 L14.0,14.2 L13.0,13.9 L12.0,14.1 L11.0,13.7 L10.0,13.2 L9.0,14.9 L8.0,15.7 L7.0,16.5 L6.0,16.9 L5.0,15.5 L4.0,13.6 L3.0,12.7 L2.0,11.7ZM2.0,24.3 L3.0,23.3 L4.0,22.4 L5.0,20.5 L6.0,19.1 L7.0,19.5 L8.0,20.3 L9.0,21.1 L10.0,22.8 L11.0,22.3 L12.0,21.9 L13.0,22.1 L14.0,21.8 L15.0,22.1 L16.0,21.1 L17.0,21.1 L18.0,20.8 L19.0,20.2 L20.0,20.3 L21.0,21.6 L22.0,23.1 L23.0,24.3 L24.0,26.2 L24.0,27.8 L23.0,29.7 L22.0,30.9 L21.0,32.4 L20.0,33.7 L19.0,33.8 L18.0,33.2 L17.0,32.9 L16.0,32.9 L15.0,31.9 L14.0,32.2 L13.0,31.9 L12.0,32.1 L11.0,31.7 L10.0,31.2 L9.0,32.9 L8.0,33.7 L7.0,34.5 L6.0,34.9 L5.0,33.5 L4.0,31.6 L3.0,30.7 L2.0,29.7Z" fill="#1c211a"/></svg><b class="ct" style="left:1462.4px;top:1031.3px;width:17.6px;color:#1e3a12">VO</b><i style="left:1492px;top:1024px;width:6px;height:70px;background:#a8fa7c"></i><i style="left:1492px;top:1024px;width:6px;height:2px;background:#5b9b3e"></i><i style="left:1492px;top:1024px;width:2px;height:70px;background:#5b9b3e"></i><i style="left:1492px;top:1056px;width:6px;height:2px;background:#5b9b3e"></i><svg style="left:1492px;top:1058px" width="6" height="36" viewBox="0 0 6 36"><path d="M2.0,5.1 L3.0,4.9 L4.0,4.6 L5.0,4.4 L6.0,4.7 L6.0,13.3 L5.0,13.6 L4.0,13.4 L3.0,13.1 L2.0,12.9ZM2.0,23.1 L3.0,22.9 L4.0,22.6 L5.0,22.4 L6.0,22.7 L6.0,31.3 L5.0,31.6 L4.0,31.4 L3.0,31.1 L2.0,30.9Z" fill="#1c211a"/></svg><i style="left:1500px;top:1024px;width:8px;height:70px;background:#a8fa7c"></i><i style="left:1500px;top:1024px;width:8px;height:2px;background:#5b9b3e"></i><i style="left:1500px;top:1024px;width:2px;height:70px;background:#5b9b3e"></i><i style="left:1500px;top:1056px;width:8px;height:2px;background:#5b9b3e"></i><svg style="left:1500px;top:1058px" width="8" height="36" viewBox="0 0 8 36"><path d="M2.0,5.3 L3.0,4.0 L4.0,4.0 L5.0,3.2 L6.0,3.5 L7.0,3.9 L8.0,3.9 L8.0,14.1 L7.0,14.1 L6.0,14.5 L5.0,14.8 L4.0,14.0 L3.0,14.0 L2.0,12.7ZM2.0,23.3 L3.0,22.0 L4.0,22.0 L5.0,21.2 L6.0,21.5 L7.0,21.9 L8.0,21.9 L8.0,32.1 L7.0,32.1 L6.0,32.5 L5.0,32.8 L4.0,32.0 L3.0,32.0 L2.0,30.7Z" fill="#1c211a"/></svg><i style="left:1492px;top:1024px;width:4px;height:70px;background:#5b9b3e"></i><i style="left:1512px;top:1024px;width:22px;height:70px;background:#a8fa7c"></i><i style="left:1512px;top:1024px;width:22px;height:2px;background:#5b9b3e"></i><i style="left:1512px;top:1024px;width:2px;height:70px;background:#5b9b3e"></i><i style="left:1512px;top:1056px;width:22px;height:2px;background:#5b9b3e"></i><svg style="left:1512px;top:1058px" width="22" height="36" viewBox="0 0 22 36"><path d="M2.0,7.2 L3.0,5.9 L4.0,4.9 L5.0,4.0 L6.0,2.8 L7.0,1.4 L8.0,1.1 L9.0,2.2 L10.0,3.6 L11.0,4.6 L12.0,4.5 L13.0,3.6 L14.0,3.9 L15.0,3.9 L16.0,3.3 L17.0,3.5 L18.0,2.7 L19.0,2.6 L20.0,3.5 L21.0,3.0 L22.0,3.3 L22.0,14.7 L21.0,15.0 L20.0,14.5 L19.0,15.4 L18.0,15.3 L17.0,14.5 L16.0,14.7 L15.0,14.1 L14.0,14.1 L13.0,14.4 L12.0,13.5 L11.0,13.4 L10.0,14.4 L9.0,15.8 L8.0,16.9 L7.0,16.6 L6.0,15.2 L5.0,14.0 L4.0,13.1 L3.0,12.1 L2.0,10.8ZM2.0,25.2 L3.0,23.9 L4.0,22.9 L5.0,22.0 L6.0,20.8 L7.0,19.4 L8.0,19.1 L9.0,20.2 L10.0,21.6 L11.0,22.6 L12.0,22.5 L13.0,21.6 L14.0,21.9 L15.0,21.9 L16.0,21.3 L17.0,21.5 L18.0,20.7 L19.0,20.6 L20.0,21.5 L21.0,21.0 L22.0,21.3 L22.0,32.7 L21.0,33.0 L20.0,32.5 L19.0,33.4 L18.0,33.3 L17.0,32.5 L16.0,32.7 L15.0,32.1 L14.0,32.1 L13.0,32.4 L12.0,31.5 L11.0,31.4 L10.0,32.4 L9.0,33.8 L8.0,34.9 L7.0,34.6 L6.0,33.2 L5.0,32.0 L4.0,31.1 L3.0,30.1 L2.0,28.8Z" fill="#1c211a"/></svg><b class="ct" style="left:1518.4px;top:1031.3px;width:15.6px;color:#1e3a12">VO</b><i style="left:1534px;top:1024px;width:2px;height:70px;background:#5b9b3e"></i><i style="left:1536px;top:1024px;width:2px;height:70px;background:#a8fa7c"></i><i style="left:1536px;top:1024px;width:2px;height:2px;background:#5b9b3e"></i><i style="left:1536px;top:1056px;width:2px;height:2px;background:#5b9b3e"></i><i style="left:1536px;top:1062px;width:2px;height:10px;background:#1c211a"></i><i style="left:1536px;top:1080px;width:2px;height:10px;background:#1c211a"></i><i style="left:1538px;top:1024px;width:4px;height:70px;background:#5b9b3e"></i><i style="left:1542px;top:1024px;width:2px;height:70px;background:#a8fa7c"></i><i style="left:1542px;top:1024px;width:2px;height:2px;background:#5b9b3e"></i><i style="left:1542px;top:1056px;width:2px;height:2px;background:#5b9b3e"></i><i style="left:1542px;top:1062px;width:2px;height:10px;background:#1c211a"></i><i style="left:1542px;top:1080px;width:2px;height:10px;background:#1c211a"></i><i style="left:1544px;top:1024px;width:2px;height:70px;background:#5b9b3e"></i><i style="left:1546px;top:1024px;width:2px;height:70px;background:#a8fa7c"></i><i style="left:1546px;top:1024px;width:2px;height:2px;background:#5b9b3e"></i><i style="left:1546px;top:1056px;width:2px;height:2px;background:#5b9b3e"></i><i style="left:1546px;top:1062px;width:2px;height:10px;background:#1c211a"></i><i style="left:1546px;top:1080px;width:2px;height:10px;background:#1c211a"></i><i style="left:1548px;top:1024px;width:2px;height:70px;background:#5b9b3e"></i><i style="left:1550px;top:1024px;width:2px;height:70px;background:#a8fa7c"></i><i style="left:1550px;top:1024px;width:2px;height:2px;background:#5b9b3e"></i><i style="left:1550px;top:1056px;width:2px;height:2px;background:#5b9b3e"></i><i style="left:1550px;top:1062px;width:2px;height:10px;background:#1c211a"></i><i style="left:1550px;top:1080px;width:2px;height:10px;background:#1c211a"></i><i style="left:1552px;top:1024px;width:2px;height:70px;background:#5b9b3e"></i><i style="left:1554px;top:1024px;width:2px;height:70px;background:#a8fa7c"></i><i style="left:1554px;top:1024px;width:2px;height:2px;background:#5b9b3e"></i><i style="left:1554px;top:1056px;width:2px;height:2px;background:#5b9b3e"></i><i style="left:1554px;top:1062px;width:2px;height:10px;background:#1c211a"></i><i style="left:1554px;top:1080px;width:2px;height:10px;background:#1c211a"></i><i style="left:1556px;top:1024px;width:4px;height:70px;background:#5b9b3e"></i><i style="left:1560px;top:1024px;width:2px;height:70px;background:#a8fa7c"></i><i style="left:1560px;top:1024px;width:2px;height:2px;background:#5b9b3e"></i><i style="left:1560px;top:1056px;width:2px;height:2px;background:#5b9b3e"></i><i style="left:1560px;top:1062px;width:2px;height:10px;background:#1c211a"></i><i style="left:1560px;top:1080px;width:2px;height:10px;background:#1c211a"></i><i style="left:1562px;top:1024px;width:2px;height:70px;background:#5b9b3e"></i><i style="left:1564px;top:1024px;width:2px;height:70px;background:#a8fa7c"></i><i style="left:1564px;top:1024px;width:2px;height:2px;background:#5b9b3e"></i><i style="left:1564px;top:1056px;width:2px;height:2px;background:#5b9b3e"></i><i style="left:1564px;top:1062px;width:2px;height:10px;background:#1c211a"></i><i style="left:1564px;top:1080px;width:2px;height:10px;background:#1c211a"></i><i style="left:1566px;top:1024px;width:2px;height:70px;background:#5b9b3e"></i><i style="left:1568px;top:1024px;width:2px;height:70px;background:#a8fa7c"></i><i style="left:1568px;top:1024px;width:2px;height:2px;background:#5b9b3e"></i><i style="left:1568px;top:1056px;width:2px;height:2px;background:#5b9b3e"></i><i style="left:1568px;top:1062px;width:2px;height:10px;background:#1c211a"></i><i style="left:1568px;top:1080px;width:2px;height:10px;background:#1c211a"></i><i style="left:1570px;top:1024px;width:4px;height:70px;background:#5b9b3e"></i><i style="left:1574px;top:1024px;width:2px;height:70px;background:#a8fa7c"></i><i style="left:1574px;top:1024px;width:2px;height:2px;background:#5b9b3e"></i><i style="left:1574px;top:1056px;width:2px;height:2px;background:#5b9b3e"></i><i style="left:1574px;top:1062px;width:2px;height:10px;background:#1c211a"></i><i style="left:1574px;top:1080px;width:2px;height:10px;background:#1c211a"></i><i style="left:1576px;top:1024px;width:2px;height:70px;background:#5b9b3e"></i><i style="left:1578px;top:1024px;width:2px;height:70px;background:#a8fa7c"></i><i style="left:1578px;top:1024px;width:2px;height:2px;background:#5b9b3e"></i><i style="left:1578px;top:1056px;width:2px;height:2px;background:#5b9b3e"></i><i style="left:1578px;top:1062px;width:2px;height:10px;background:#1c211a"></i><i style="left:1578px;top:1080px;width:2px;height:10px;background:#1c211a"></i><i style="left:1580px;top:1024px;width:2px;height:70px;background:#5b9b3e"></i><i style="left:1582px;top:1024px;width:2px;height:70px;background:#a8fa7c"></i><i style="left:1582px;top:1024px;width:2px;height:2px;background:#5b9b3e"></i><i style="left:1582px;top:1056px;width:2px;height:2px;background:#5b9b3e"></i><i style="left:1582px;top:1062px;width:2px;height:10px;background:#1c211a"></i><i style="left:1582px;top:1080px;width:2px;height:10px;background:#1c211a"></i><i style="left:1584px;top:1024px;width:2px;height:70px;background:#5b9b3e"></i><i style="left:1586px;top:1024px;width:2px;height:70px;background:#a8fa7c"></i><i style="left:1586px;top:1024px;width:2px;height:2px;background:#5b9b3e"></i><i style="left:1586px;top:1056px;width:2px;height:2px;background:#5b9b3e"></i><i style="left:1586px;top:1062px;width:2px;height:10px;background:#1c211a"></i><i style="left:1586px;top:1080px;width:2px;height:10px;background:#1c211a"></i><i style="left:1588px;top:1024px;width:2px;height:70px;background:#5b9b3e"></i><i style="left:1716px;top:1024px;width:2px;height:34px;background:#686868"></i><i style="left:1716px;top:1058px;width:2px;height:36px;background:#343434"></i><i style="left:1718px;top:1024px;width:8px;height:70px;background:#a8fa7c"></i><i style="left:1718px;top:1024px;width:8px;height:2px;background:#5b9b3e"></i><i style="left:1718px;top:1024px;width:2px;height:70px;background:#5b9b3e"></i><i style="left:1718px;top:1056px;width:8px;height:2px;background:#5b9b3e"></i><i style="left:1720px;top:1058px;width:6px;height:36px;background:#93de70"></i><svg style="left:1718px;top:1058px" width="8" height="36"><path d="M2,2 L5,8 L8,9 L8,10 L5,11 L2,17 Z M2,20 L5,26 L8,27 L8,28 L5,29 L2,35 Z" fill="#1c211a"/></svg><i style="left:1832px;top:1024px;width:6px;height:70px;background:#a8fa7c"></i><i style="left:1832px;top:1024px;width:6px;height:2px;background:#5b9b3e"></i><i style="left:1832px;top:1024px;width:2px;height:70px;background:#5b9b3e"></i><i style="left:1832px;top:1056px;width:6px;height:2px;background:#5b9b3e"></i><svg style="left:1832px;top:1058px" width="6" height="36" viewBox="0 0 6 36"><path d="M2.0,5.1 L3.0,4.6 L4.0,4.2 L5.0,4.6 L6.0,5.0 L6.0,13.0 L5.0,13.4 L4.0,13.8 L3.0,13.4 L2.0,12.9ZM2.0,23.1 L3.0,22.6 L4.0,22.2 L5.0,22.6 L6.0,23.0 L6.0,31.0 L5.0,31.4 L4.0,31.8 L3.0,31.4 L2.0,30.9Z" fill="#1c211a"/></svg><i style="left:1840px;top:1024px;width:8px;height:70px;background:#a8fa7c"></i><i style="left:1840px;top:1024px;width:8px;height:2px;background:#5b9b3e"></i><i style="left:1840px;top:1024px;width:2px;height:70px;background:#5b9b3e"></i><i style="left:1840px;top:1056px;width:8px;height:2px;background:#5b9b3e"></i><svg style="left:1840px;top:1058px" width="8" height="36" viewBox="0 0 8 36"><path d="M2.0,5.3 L3.0,4.6 L4.0,3.4 L5.0,3.1 L6.0,3.5 L7.0,3.2 L8.0,4.3 L8.0,13.7 L7.0,14.8 L6.0,14.5 L5.0,14.9 L4.0,14.6 L3.0,13.4 L2.0,12.7ZM2.0,23.3 L3.0,22.6 L4.0,21.4 L5.0,21.1 L6.0,21.5 L7.0,21.2 L8.0,22.3 L8.0,31.7 L7.0,32.8 L6.0,32.5 L5.0,32.9 L4.0,32.6 L3.0,31.4 L2.0,30.7Z" fill="#1c211a"/></svg><i style="left:1854px;top:1024px;width:20px;height:70px;background:#a8fa7c"></i><i style="left:1854px;top:1024px;width:20px;height:2px;background:#5b9b3e"></i><i style="left:1854px;top:1024px;width:2px;height:70px;background:#5b9b3e"></i><i style="left:1854px;top:1056px;width:20px;height:2px;background:#5b9b3e"></i><svg style="left:1854px;top:1058px" width="20" height="36" viewBox="0 0 20 36"><path d="M2.0,7.0 L3.0,6.2 L4.0,4.5 L5.0,3.2 L6.0,2.2 L7.0,1.1 L8.0,2.0 L9.0,3.6 L10.0,5.0 L11.0,4.3 L12.0,3.9 L13.0,4.0 L14.0,3.9 L15.0,3.6 L16.0,2.7 L17.0,3.1 L18.0,3.0 L19.0,3.5 L20.0,3.4 L20.0,14.6 L19.0,14.5 L18.0,15.0 L17.0,14.9 L16.0,15.3 L15.0,14.4 L14.0,14.1 L13.0,14.0 L12.0,14.1 L11.0,13.7 L10.0,13.0 L9.0,14.4 L8.0,16.0 L7.0,16.9 L6.0,15.8 L5.0,14.8 L4.0,13.5 L3.0,11.8 L2.0,11.0ZM2.0,25.0 L3.0,24.2 L4.0,22.5 L5.0,21.2 L6.0,20.2 L7.0,19.1 L8.0,20.0 L9.0,21.6 L10.0,23.0 L11.0,22.3 L12.0,21.9 L13.0,22.0 L14.0,21.9 L15.0,21.6 L16.0,20.7 L17.0,21.1 L18.0,21.0 L19.0,21.5 L20.0,21.4 L20.0,32.6 L19.0,32.5 L18.0,33.0 L17.0,32.9 L16.0,33.3 L15.0,32.4 L14.0,32.1 L13.0,32.0 L12.0,32.1 L11.0,31.7 L10.0,31.0 L9.0,32.4 L8.0,34.0 L7.0,34.9 L6.0,33.8 L5.0,32.8 L4.0,31.5 L3.0,29.8 L2.0,29.0Z" fill="#1c211a"/></svg><b class="ct" style="left:1860.4px;top:1031.3px;width:13.6px;color:#1e3a12">VO</b><i style="left:1888px;top:1024px;width:12px;height:70px;background:#a8fa7c"></i><i style="left:1888px;top:1024px;width:12px;height:2px;background:#5b9b3e"></i><i style="left:1888px;top:1024px;width:2px;height:70px;background:#5b9b3e"></i><i style="left:1888px;top:1056px;width:12px;height:2px;background:#5b9b3e"></i><svg style="left:1888px;top:1058px" width="12" height="36" viewBox="0 0 12 36"><path d="M2.0,5.1 L3.0,5.3 L4.0,4.8 L5.0,4.3 L6.0,4.9 L7.0,4.2 L8.0,4.1 L9.0,2.9 L10.0,3.3 L11.0,4.3 L12.0,4.3 L12.0,13.7 L11.0,13.7 L10.0,14.7 L9.0,15.1 L8.0,13.9 L7.0,13.8 L6.0,13.1 L5.0,13.7 L4.0,13.2 L3.0,12.7 L2.0,12.9ZM2.0,23.1 L3.0,23.3 L4.0,22.8 L5.0,22.3 L6.0,22.9 L7.0,22.2 L8.0,22.1 L9.0,20.9 L10.0,21.3 L11.0,22.3 L12.0,22.3 L12.0,31.7 L11.0,31.7 L10.0,32.7 L9.0,33.1 L8.0,31.9 L7.0,31.8 L6.0,31.1 L5.0,31.7 L4.0,31.2 L3.0,30.7 L2.0,30.9Z" fill="#1c211a"/></svg><b class="ct" style="left:1894.4px;top:1031.3px;width:5.6px;color:#1e3a12">V</b><i style="left:1900px;top:1024px;width:10px;height:34px;background:#686868"></i><i style="left:1900px;top:1058px;width:10px;height:36px;background:#343434"></i><svg style="left:1900px;top:1058px" width="10" height="36" viewBox="0 0 10 36"><path d="M0.0,3.0 L1.0,3.1 L2.0,3.1 L3.0,3.2 L4.0,3.9 L5.0,5.3 L6.0,6.5 L7.0,7.5 L8.0,8.0 L9.0,8.0 L10.0,8.0 L10.0,10.0 L9.0,10.0 L8.0,10.0 L7.0,10.5 L6.0,11.5 L5.0,12.7 L4.0,14.1 L3.0,14.8 L2.0,14.9 L1.0,14.9 L0.0,15.0ZM0.0,21.0 L1.0,21.1 L2.0,21.1 L3.0,21.2 L4.0,21.9 L5.0,23.3 L6.0,24.5 L7.0,25.5 L8.0,26.0 L9.0,26.0 L10.0,26.0 L10.0,28.0 L9.0,28.0 L8.0,28.0 L7.0,28.5 L6.0,29.5 L5.0,30.7 L4.0,32.1 L3.0,32.8 L2.0,32.9 L1.0,32.9 L0.0,33.0Z" fill="#6a6a6a"/></svg><b class="ct" style="left:1903px;top:1031.8px;width:7px;color:#2e2e2e">V</b><i style="left:1910px;top:1024px;width:24px;height:70px;background:#a8fa7c"></i><i style="left:1910px;top:1024px;width:24px;height:2px;background:#5b9b3e"></i><i style="left:1910px;top:1024px;width:2px;height:70px;background:#5b9b3e"></i><i style="left:1910px;top:1056px;width:24px;height:2px;background:#5b9b3e"></i><svg style="left:1910px;top:1058px" width="24" height="36" viewBox="0 0 24 36"><path d="M2.0,6.1 L3.0,5.5 L4.0,4.2 L5.0,2.8 L6.0,1.7 L7.0,1.4 L8.0,2.2 L9.0,3.5 L10.0,4.5 L11.0,4.0 L12.0,4.0 L13.0,3.8 L14.0,4.1 L15.0,4.0 L16.0,3.1 L17.0,2.6 L18.0,2.4 L19.0,2.0 L20.0,2.2 L21.0,3.5 L22.0,4.7 L23.0,6.1 L24.0,7.7 L24.0,10.3 L23.0,11.9 L22.0,13.3 L21.0,14.5 L20.0,15.8 L19.0,16.0 L18.0,15.6 L17.0,15.4 L16.0,14.9 L15.0,14.0 L14.0,13.9 L13.0,14.2 L12.0,14.0 L11.0,14.0 L10.0,13.5 L9.0,14.5 L8.0,15.8 L7.0,16.6 L6.0,16.3 L5.0,15.2 L4.0,13.8 L3.0,12.5 L2.0,11.9ZM2.0,24.1 L3.0,23.5 L4.0,22.2 L5.0,20.8 L6.0,19.7 L7.0,19.4 L8.0,20.2 L9.0,21.5 L10.0,22.5 L11.0,22.0 L12.0,22.0 L13.0,21.8 L14.0,22.1 L15.0,22.0 L16.0,21.1 L17.0,20.6 L18.0,20.4 L19.0,20.0 L20.0,20.2 L21.0,21.5 L22.0,22.7 L23.0,24.1 L24.0,25.7 L24.0,28.3 L23.0,29.9 L22.0,31.3 L21.0,32.5 L20.0,33.8 L19.0,34.0 L18.0,33.6 L17.0,33.4 L16.0,32.9 L15.0,32.0 L14.0,31.9 L13.0,32.2 L12.0,32.0 L11.0,32.0 L10.0,31.5 L9.0,32.5 L8.0,33.8 L7.0,34.6 L6.0,34.3 L5.0,33.2 L4.0,31.8 L3.0,30.5 L2.0,29.9Z" fill="#1c211a"/></svg><b class="ct" style="left:1916.4px;top:1031.3px;width:17.6px;color:#1e3a12">VO</b><i style="left:1946px;top:1024px;width:4px;height:34px;background:#686868"></i><i style="left:1946px;top:1058px;width:4px;height:36px;background:#343434"></i><svg style="left:1946px;top:1058px" width="4" height="36" viewBox="0 0 4 36"><path d="M0.0,5.4 L1.0,4.9 L2.0,4.7 L3.0,4.8 L4.0,5.0 L4.0,13.0 L3.0,13.2 L2.0,13.3 L1.0,13.1 L0.0,12.6ZM0.0,23.4 L1.0,22.9 L2.0,22.7 L3.0,22.8 L4.0,23.0 L4.0,31.0 L3.0,31.2 L2.0,31.3 L1.0,31.1 L0.0,30.6Z" fill="#6a6a6a"/></svg><i style="left:1950px;top:1024px;width:2px;height:70px;background:#5b9b3e"></i><i style="left:1954px;top:1024px;width:8px;height:70px;background:#a8fa7c"></i><i style="left:1954px;top:1024px;width:8px;height:2px;background:#5b9b3e"></i><i style="left:1954px;top:1024px;width:2px;height:70px;background:#5b9b3e"></i><i style="left:1954px;top:1056px;width:8px;height:2px;background:#5b9b3e"></i><svg style="left:1954px;top:1058px" width="8" height="36" viewBox="0 0 8 36"><path d="M2.0,5.2 L3.0,4.8 L4.0,3.4 L5.0,2.8 L6.0,3.1 L7.0,3.9 L8.0,3.6 L8.0,14.4 L7.0,14.1 L6.0,14.9 L5.0,15.2 L4.0,14.6 L3.0,13.2 L2.0,12.8ZM2.0,23.2 L3.0,22.8 L4.0,21.4 L5.0,20.8 L6.0,21.1 L7.0,21.9 L8.0,21.6 L8.0,32.4 L7.0,32.1 L6.0,32.9 L5.0,33.2 L4.0,32.6 L3.0,31.2 L2.0,30.8Z" fill="#1c211a"/></svg><i style="left:1968px;top:1024px;width:20px;height:70px;background:#a8fa7c"></i><i style="left:1968px;top:1024px;width:20px;height:2px;background:#5b9b3e"></i><i style="left:1968px;top:1024px;width:2px;height:70px;background:#5b9b3e"></i><i style="left:1968px;top:1056px;width:20px;height:2px;background:#5b9b3e"></i><svg style="left:1968px;top:1058px" width="20" height="36" viewBox="0 0 20 36"><path d="M2.0,6.6 L3.0,6.2 L4.0,4.1 L5.0,3.6 L6.0,2.5 L7.0,1.1 L8.0,2.0 L9.0,3.8 L10.0,4.3 L11.0,4.0 L12.0,4.1 L13.0,4.6 L14.0,4.4 L15.0,3.7 L16.0,3.1 L17.0,3.0 L18.0,3.2 L19.0,3.3 L20.0,3.0 L20.0,15.0 L19.0,14.7 L18.0,14.8 L17.0,15.0 L16.0,14.9 L15.0,14.3 L14.0,13.6 L13.0,13.4 L12.0,13.9 L11.0,14.0 L10.0,13.7 L9.0,14.2 L8.0,16.0 L7.0,16.9 L6.0,15.5 L5.0,14.4 L4.0,13.9 L3.0,11.8 L2.0,11.4ZM2.0,24.6 L3.0,24.2 L4.0,22.1 L5.0,21.6 L6.0,20.5 L7.0,19.1 L8.0,20.0 L9.0,21.8 L10.0,22.3 L11.0,22.0 L12.0,22.1 L13.0,22.6 L14.0,22.4 L15.0,21.7 L16.0,21.1 L17.0,21.0 L18.0,21.2 L19.0,21.3 L20.0,21.0 L20.0,33.0 L19.0,32.7 L18.0,32.8 L17.0,33.0 L16.0,32.9 L15.0,32.3 L14.0,31.6 L13.0,31.4 L12.0,31.9 L11.0,32.0 L10.0,31.7 L9.0,32.2 L8.0,34.0 L7.0,34.9 L6.0,33.5 L5.0,32.4 L4.0,31.9 L3.0,29.8 L2.0,29.4Z" fill="#1c211a"/></svg><b class="ct" style="left:1974.4px;top:1031.3px;width:13.6px;color:#1e3a12">VO</b><i style="left:2002px;top:1024px;width:12px;height:70px;background:#a8fa7c"></i><i style="left:2002px;top:1024px;width:12px;height:2px;background:#5b9b3e"></i><i style="left:2002px;top:1024px;width:2px;height:70px;background:#5b9b3e"></i><i style="left:2002px;top:1056px;width:12px;height:2px;background:#5b9b3e"></i><svg style="left:2002px;top:1058px" width="12" height="36" viewBox="0 0 12 36"><path d="M2.0,5.0 L3.0,4.8 L4.0,4.9 L5.0,4.2 L6.0,5.1 L7.0,4.1 L8.0,4.1 L9.0,2.9 L10.0,3.0 L11.0,3.8 L12.0,4.4 L12.0,13.6 L11.0,14.2 L10.0,15.0 L9.0,15.1 L8.0,13.9 L7.0,13.9 L6.0,12.9 L5.0,13.8 L4.0,13.1 L3.0,13.2 L2.0,13.0ZM2.0,23.0 L3.0,22.8 L4.0,22.9 L5.0,22.2 L6.0,23.1 L7.0,22.1 L8.0,22.1 L9.0,20.9 L10.0,21.0 L11.0,21.8 L12.0,22.4 L12.0,31.6 L11.0,32.2 L10.0,33.0 L9.0,33.1 L8.0,31.9 L7.0,31.9 L6.0,30.9 L5.0,31.8 L4.0,31.1 L3.0,31.2 L2.0,31.0Z" fill="#1c211a"/></svg><b class="ct" style="left:2008.4px;top:1031.3px;width:5.6px;color:#1e3a12">V</b><i style="left:2014px;top:1024px;width:10px;height:34px;background:#686868"></i><i style="left:2014px;top:1058px;width:10px;height:36px;background:#343434"></i><svg style="left:2014px;top:1058px" width="10" height="36" viewBox="0 0 10 36"><path d="M0.0,3.0 L1.0,3.1 L2.0,3.1 L3.0,3.2 L4.0,3.9 L5.0,5.3 L6.0,6.5 L7.0,7.5 L8.0,8.0 L9.0,8.0 L10.0,8.0 L10.0,10.0 L9.0,10.0 L8.0,10.0 L7.0,10.5 L6.0,11.5 L5.0,12.7 L4.0,14.1 L3.0,14.8 L2.0,14.9 L1.0,14.9 L0.0,15.0ZM0.0,21.0 L1.0,21.1 L2.0,21.1 L3.0,21.2 L4.0,21.9 L5.0,23.3 L6.0,24.5 L7.0,25.5 L8.0,26.0 L9.0,26.0 L10.0,26.0 L10.0,28.0 L9.0,28.0 L8.0,28.0 L7.0,28.5 L6.0,29.5 L5.0,30.7 L4.0,32.1 L3.0,32.8 L2.0,32.9 L1.0,32.9 L0.0,33.0Z" fill="#6a6a6a"/></svg><b class="ct" style="left:2017px;top:1031.8px;width:7px;color:#2e2e2e">V</b><i style="left:2024px;top:1024px;width:24px;height:70px;background:#a8fa7c"></i><i style="left:2024px;top:1024px;width:24px;height:2px;background:#5b9b3e"></i><i style="left:2024px;top:1024px;width:2px;height:70px;background:#5b9b3e"></i><i style="left:2024px;top:1056px;width:24px;height:2px;background:#5b9b3e"></i><svg style="left:2024px;top:1058px" width="24" height="36" viewBox="0 0 24 36"><path d="M2.0,6.2 L3.0,5.0 L4.0,4.6 L5.0,3.2 L6.0,1.7 L7.0,1.7 L8.0,2.2 L9.0,3.7 L10.0,4.4 L11.0,4.8 L12.0,3.7 L13.0,3.9 L14.0,4.0 L15.0,3.7 L16.0,3.0 L17.0,2.9 L18.0,2.1 L19.0,2.9 L20.0,2.8 L21.0,3.3 L22.0,5.0 L23.0,6.4 L24.0,8.2 L24.0,9.8 L23.0,11.6 L22.0,13.0 L21.0,14.7 L20.0,15.2 L19.0,15.1 L18.0,15.9 L17.0,15.1 L16.0,15.0 L15.0,14.3 L14.0,14.0 L13.0,14.1 L12.0,14.3 L11.0,13.2 L10.0,13.6 L9.0,14.3 L8.0,15.8 L7.0,16.3 L6.0,16.3 L5.0,14.8 L4.0,13.4 L3.0,13.0 L2.0,11.8ZM2.0,24.2 L3.0,23.0 L4.0,22.6 L5.0,21.2 L6.0,19.7 L7.0,19.7 L8.0,20.2 L9.0,21.7 L10.0,22.4 L11.0,22.8 L12.0,21.7 L13.0,21.9 L14.0,22.0 L15.0,21.7 L16.0,21.0 L17.0,20.9 L18.0,20.1 L19.0,20.9 L20.0,20.8 L21.0,21.3 L22.0,23.0 L23.0,24.4 L24.0,26.2 L24.0,27.8 L23.0,29.6 L22.0,31.0 L21.0,32.7 L20.0,33.2 L19.0,33.1 L18.0,33.9 L17.0,33.1 L16.0,33.0 L15.0,32.3 L14.0,32.0 L13.0,32.1 L12.0,32.3 L11.0,31.2 L10.0,31.6 L9.0,32.3 L8.0,33.8 L7.0,34.3 L6.0,34.3 L5.0,32.8 L4.0,31.4 L3.0,31.0 L2.0,29.8Z" fill="#1c211a"/></svg><b class="ct" style="left:2030.4px;top:1031.3px;width:17.6px;color:#1e3a12">VO</b><i style="left:2060px;top:1024px;width:6px;height:70px;background:#a8fa7c"></i><i style="left:2060px;top:1024px;width:6px;height:2px;background:#5b9b3e"></i><i style="left:2060px;top:1024px;width:2px;height:70px;background:#5b9b3e"></i><i style="left:2060px;top:1056px;width:6px;height:2px;background:#5b9b3e"></i><svg style="left:2060px;top:1058px" width="6" height="36" viewBox="0 0 6 36"><path d="M2.0,5.2 L3.0,4.7 L4.0,4.3 L5.0,5.1 L6.0,5.2 L6.0,12.8 L5.0,12.9 L4.0,13.7 L3.0,13.3 L2.0,12.8ZM2.0,23.2 L3.0,22.7 L4.0,22.3 L5.0,23.1 L6.0,23.2 L6.0,30.8 L5.0,30.9 L4.0,31.7 L3.0,31.3 L2.0,30.8Z" fill="#1c211a"/></svg><i style="left:2068px;top:1024px;width:8px;height:70px;background:#a8fa7c"></i><i style="left:2068px;top:1024px;width:8px;height:2px;background:#5b9b3e"></i><i style="left:2068px;top:1024px;width:2px;height:70px;background:#5b9b3e"></i><i style="left:2068px;top:1056px;width:8px;height:2px;background:#5b9b3e"></i><svg style="left:2068px;top:1058px" width="8" height="36" viewBox="0 0 8 36"><path d="M2.0,4.8 L3.0,4.1 L4.0,4.1 L5.0,2.9 L6.0,3.6 L7.0,3.5 L8.0,3.9 L8.0,14.1 L7.0,14.5 L6.0,14.4 L5.0,15.1 L4.0,13.9 L3.0,13.9 L2.0,13.2ZM2.0,22.8 L3.0,22.1 L4.0,22.1 L5.0,20.9 L6.0,21.6 L7.0,21.5 L8.0,21.9 L8.0,32.1 L7.0,32.5 L6.0,32.4 L5.0,33.1 L4.0,31.9 L3.0,31.9 L2.0,31.2Z" fill="#1c211a"/></svg><i style="left:2082px;top:1024px;width:20px;height:70px;background:#a8fa7c"></i><i style="left:2082px;top:1024px;width:20px;height:2px;background:#5b9b3e"></i><i style="left:2082px;top:1024px;width:2px;height:70px;background:#5b9b3e"></i><i style="left:2082px;top:1056px;width:20px;height:2px;background:#5b9b3e"></i><svg style="left:2082px;top:1058px" width="20" height="36" viewBox="0 0 20 36"><path d="M2.0,7.4 L3.0,5.3 L4.0,4.9 L5.0,3.1 L6.0,2.2 L7.0,1.1 L8.0,1.9 L9.0,3.6 L10.0,4.3 L11.0,4.1 L12.0,3.9 L13.0,3.9 L14.0,4.4 L15.0,3.1 L16.0,2.8 L17.0,2.6 L18.0,3.4 L19.0,3.4 L20.0,3.0 L20.0,15.0 L19.0,14.6 L18.0,14.6 L17.0,15.4 L16.0,15.2 L15.0,14.9 L14.0,13.6 L13.0,14.1 L12.0,14.1 L11.0,13.9 L10.0,13.7 L9.0,14.4 L8.0,16.1 L7.0,16.9 L6.0,15.8 L5.0,14.9 L4.0,13.1 L3.0,12.7 L2.0,10.6ZM2.0,25.4 L3.0,23.3 L4.0,22.9 L5.0,21.1 L6.0,20.2 L7.0,19.1 L8.0,19.9 L9.0,21.6 L10.0,22.3 L11.0,22.1 L12.0,21.9 L13.0,21.9 L14.0,22.4 L15.0,21.1 L16.0,20.8 L17.0,20.6 L18.0,21.4 L19.0,21.4 L20.0,21.0 L20.0,33.0 L19.0,32.6 L18.0,32.6 L17.0,33.4 L16.0,33.2 L15.0,32.9 L14.0,31.6 L13.0,32.1 L12.0,32.1 L11.0,31.9 L10.0,31.7 L9.0,32.4 L8.0,34.1 L7.0,34.9 L6.0,33.8 L5.0,32.9 L4.0,31.1 L3.0,30.7 L2.0,28.6Z" fill="#1c211a"/></svg><b class="ct" style="left:2088.4px;top:1031.3px;width:13.6px;color:#1e3a12">VO</b><i style="left:2116px;top:1024px;width:12px;height:70px;background:#a8fa7c"></i><i style="left:2116px;top:1024px;width:12px;height:2px;background:#5b9b3e"></i><i style="left:2116px;top:1024px;width:2px;height:70px;background:#5b9b3e"></i><i style="left:2116px;top:1056px;width:12px;height:2px;background:#5b9b3e"></i><svg style="left:2116px;top:1058px" width="12" height="36" viewBox="0 0 12 36"><path d="M2.0,5.4 L3.0,5.0 L4.0,5.0 L5.0,4.6 L6.0,4.9 L7.0,4.4 L8.0,3.5 L9.0,2.9 L10.0,3.6 L11.0,4.2 L12.0,4.1 L12.0,13.9 L11.0,13.8 L10.0,14.4 L9.0,15.1 L8.0,14.5 L7.0,13.6 L6.0,13.1 L5.0,13.4 L4.0,13.0 L3.0,13.0 L2.0,12.6ZM2.0,23.4 L3.0,23.0 L4.0,23.0 L5.0,22.6 L6.0,22.9 L7.0,22.4 L8.0,21.5 L9.0,20.9 L10.0,21.6 L11.0,22.2 L12.0,22.1 L12.0,31.9 L11.0,31.8 L10.0,32.4 L9.0,33.1 L8.0,32.5 L7.0,31.6 L6.0,31.1 L5.0,31.4 L4.0,31.0 L3.0,31.0 L2.0,30.6Z" fill="#1c211a"/></svg><b class="ct" style="left:2122.4px;top:1031.3px;width:5.6px;color:#1e3a12">V</b><i style="left:2128px;top:1024px;width:10px;height:34px;background:#686868"></i><i style="left:2128px;top:1058px;width:10px;height:36px;background:#343434"></i><svg style="left:2128px;top:1058px" width="10" height="36" viewBox="0 0 10 36"><path d="M0.0,3.0 L1.0,3.1 L2.0,3.1 L3.0,3.2 L4.0,3.9 L5.0,5.3 L6.0,6.5 L7.0,7.5 L8.0,8.0 L9.0,8.0 L10.0,8.0 L10.0,10.0 L9.0,10.0 L8.0,10.0 L7.0,10.5 L6.0,11.5 L5.0,12.7 L4.0,14.1 L3.0,14.8 L2.0,14.9 L1.0,14.9 L0.0,15.0ZM0.0,21.0 L1.0,21.1 L2.0,21.1 L3.0,21.2 L4.0,21.9 L5.0,23.3 L6.0,24.5 L7.0,25.5 L8.0,26.0 L9.0,26.0 L10.0,26.0 L10.0,28.0 L9.0,28.0 L8.0,28.0 L7.0,28.5 L6.0,29.5 L5.0,30.7 L4.0,32.1 L3.0,32.8 L2.0,32.9 L1.0,32.9 L0.0,33.0Z" fill="#6a6a6a"/></svg><b class="ct" style="left:2131px;top:1031.8px;width:7px;color:#2e2e2e">V</b><i style="left:2138px;top:1024px;width:24px;height:70px;background:#a8fa7c"></i><i style="left:2138px;top:1024px;width:24px;height:2px;background:#5b9b3e"></i><i style="left:2138px;top:1024px;width:2px;height:70px;background:#5b9b3e"></i><i style="left:2138px;top:1056px;width:24px;height:2px;background:#5b9b3e"></i><svg style="left:2138px;top:1058px" width="24" height="36" viewBox="0 0 24 36"><path d="M2.0,6.0 L3.0,5.4 L4.0,4.4 L5.0,2.6 L6.0,1.9 L7.0,1.7 L8.0,2.9 L9.0,3.5 L10.0,4.1 L11.0,4.4 L12.0,3.5 L13.0,4.6 L14.0,4.6 L15.0,3.8 L16.0,3.3 L17.0,2.5 L18.0,2.6 L19.0,2.1 L20.0,2.3 L21.0,3.2 L22.0,5.1 L23.0,6.6 L24.0,8.2 L24.0,9.8 L23.0,11.4 L22.0,12.9 L21.0,14.8 L20.0,15.7 L19.0,15.9 L18.0,15.4 L17.0,15.5 L16.0,14.7 L15.0,14.2 L14.0,13.4 L13.0,13.4 L12.0,14.5 L11.0,13.6 L10.0,13.9 L9.0,14.5 L8.0,15.1 L7.0,16.3 L6.0,16.1 L5.0,15.4 L4.0,13.6 L3.0,12.6 L2.0,12.0ZM2.0,24.0 L3.0,23.4 L4.0,22.4 L5.0,20.6 L6.0,19.9 L7.0,19.7 L8.0,20.9 L9.0,21.5 L10.0,22.1 L11.0,22.4 L12.0,21.5 L13.0,22.6 L14.0,22.6 L15.0,21.8 L16.0,21.3 L17.0,20.5 L18.0,20.6 L19.0,20.1 L20.0,20.3 L21.0,21.2 L22.0,23.1 L23.0,24.6 L24.0,26.2 L24.0,27.8 L23.0,29.4 L22.0,30.9 L21.0,32.8 L20.0,33.7 L19.0,33.9 L18.0,33.4 L17.0,33.5 L16.0,32.7 L15.0,32.2 L14.0,31.4 L13.0,31.4 L12.0,32.5 L11.0,31.6 L10.0,31.9 L9.0,32.5 L8.0,33.1 L7.0,34.3 L6.0,34.1 L5.0,33.4 L4.0,31.6 L3.0,30.6 L2.0,30.0Z" fill="#1c211a"/></svg><b class="ct" style="left:2144.4px;top:1031.3px;width:17.6px;color:#1e3a12">VO</b><i style="left:2174px;top:1024px;width:6px;height:70px;background:#a8fa7c"></i><i style="left:2174px;top:1024px;width:6px;height:2px;background:#5b9b3e"></i><i style="left:2174px;top:1024px;width:2px;height:70px;background:#5b9b3e"></i><i style="left:2174px;top:1056px;width:6px;height:2px;background:#5b9b3e"></i><svg style="left:2174px;top:1058px" width="6" height="36" viewBox="0 0 6 36"><path d="M2.0,4.8 L3.0,5.0 L4.0,4.7 L5.0,4.6 L6.0,5.3 L6.0,12.7 L5.0,13.4 L4.0,13.3 L3.0,13.0 L2.0,13.2ZM2.0,22.8 L3.0,23.0 L4.0,22.7 L5.0,22.6 L6.0,23.3 L6.0,30.7 L5.0,31.4 L4.0,31.3 L3.0,31.0 L2.0,31.2Z" fill="#1c211a"/></svg><i style="left:2182px;top:1024px;width:8px;height:70px;background:#a8fa7c"></i><i style="left:2182px;top:1024px;width:8px;height:2px;background:#5b9b3e"></i><i style="left:2182px;top:1024px;width:2px;height:70px;background:#5b9b3e"></i><i style="left:2182px;top:1056px;width:8px;height:2px;background:#5b9b3e"></i><svg style="left:2182px;top:1058px" width="8" height="36" viewBox="0 0 8 36"><path d="M2.0,5.4 L3.0,4.2 L4.0,3.8 L5.0,2.8 L6.0,3.6 L7.0,3.9 L8.0,4.3 L8.0,13.7 L7.0,14.1 L6.0,14.4 L5.0,15.2 L4.0,14.2 L3.0,13.8 L2.0,12.6ZM2.0,23.4 L3.0,22.2 L4.0,21.8 L5.0,20.8 L6.0,21.6 L7.0,21.9 L8.0,22.3 L8.0,31.7 L7.0,32.1 L6.0,32.4 L5.0,33.2 L4.0,32.2 L3.0,31.8 L2.0,30.6Z" fill="#1c211a"/></svg><i style="left:2194px;top:1024px;width:22px;height:34px;background:#686868"></i><i style="left:2194px;top:1058px;width:22px;height:36px;background:#343434"></i><svg style="left:2194px;top:1058px" width="22" height="36" viewBox="0 0 22 36"><path d="M0.0,7.4 L1.0,5.9 L2.0,5.1 L3.0,3.8 L4.0,3.5 L5.0,2.6 L6.0,0.8 L7.0,2.0 L8.0,2.4 L9.0,4.3 L10.0,4.8 L11.0,4.3 L12.0,3.6 L13.0,3.8 L14.0,4.2 L15.0,3.8 L16.0,3.4 L17.0,2.6 L18.0,3.2 L19.0,3.4 L20.0,2.7 L21.0,3.5 L22.0,3.3 L22.0,14.7 L21.0,14.5 L20.0,15.3 L19.0,14.6 L18.0,14.8 L17.0,15.4 L16.0,14.6 L15.0,14.2 L14.0,13.8 L13.0,14.2 L12.0,14.4 L11.0,13.7 L10.0,13.2 L9.0,13.7 L8.0,15.6 L7.0,16.0 L6.0,17.2 L5.0,15.4 L4.0,14.5 L3.0,14.2 L2.0,12.9 L1.0,12.1 L0.0,10.6ZM0.0,25.4 L1.0,23.9 L2.0,23.1 L3.0,21.8 L4.0,21.5 L5.0,20.6 L6.0,18.8 L7.0,20.0 L8.0,20.4 L9.0,22.3 L10.0,22.8 L11.0,22.3 L12.0,21.6 L13.0,21.8 L14.0,22.2 L15.0,21.8 L16.0,21.4 L17.0,20.6 L18.0,21.2 L19.0,21.4 L20.0,20.7 L21.0,21.5 L22.0,21.3 L22.0,32.7 L21.0,32.5 L20.0,33.3 L19.0,32.6 L18.0,32.8 L17.0,33.4 L16.0,32.6 L15.0,32.2 L14.0,31.8 L13.0,32.2 L12.0,32.4 L11.0,31.7 L10.0,31.2 L9.0,31.7 L8.0,33.6 L7.0,34.0 L6.0,35.2 L5.0,33.4 L4.0,32.5 L3.0,32.2 L2.0,30.9 L1.0,30.1 L0.0,28.6Z" fill="#6a6a6a"/></svg><b class="ct" style="left:2201px;top:1031.8px;width:15px;color:#2e2e2e">VO</b><i style="left:2230px;top:1024px;width:12px;height:70px;background:#a8fa7c"></i><i style="left:2230px;top:1024px;width:12px;height:2px;background:#5b9b3e"></i><i style="left:2230px;top:1024px;width:2px;height:70px;background:#5b9b3e"></i><i style="left:2230px;top:1056px;width:12px;height:2px;background:#5b9b3e"></i><svg style="left:2230px;top:1058px" width="12" height="36" viewBox="0 0 12 36"><path d="M2.0,4.8 L3.0,5.0 L4.0,4.3 L5.0,4.4 L6.0,4.5 L7.0,4.7 L8.0,3.5 L9.0,2.9 L10.0,3.5 L11.0,3.6 L12.0,4.5 L12.0,13.5 L11.0,14.4 L10.0,14.5 L9.0,15.1 L8.0,14.5 L7.0,13.3 L6.0,13.5 L5.0,13.6 L4.0,13.7 L3.0,13.0 L2.0,13.2ZM2.0,22.8 L3.0,23.0 L4.0,22.3 L5.0,22.4 L6.0,22.5 L7.0,22.7 L8.0,21.5 L9.0,20.9 L10.0,21.5 L11.0,21.6 L12.0,22.5 L12.0,31.5 L11.0,32.4 L10.0,32.5 L9.0,33.1 L8.0,32.5 L7.0,31.3 L6.0,31.5 L5.0,31.6 L4.0,31.7 L3.0,31.0 L2.0,31.2Z" fill="#1c211a"/></svg><b class="ct" style="left:2236.4px;top:1031.3px;width:5.6px;color:#1e3a12">V</b><i style="left:2242px;top:1024px;width:10px;height:34px;background:#686868"></i><i style="left:2242px;top:1058px;width:10px;height:36px;background:#343434"></i><svg style="left:2242px;top:1058px" width="10" height="36" viewBox="0 0 10 36"><path d="M0.0,3.0 L1.0,3.1 L2.0,3.1 L3.0,3.2 L4.0,3.9 L5.0,5.3 L6.0,6.5 L7.0,7.5 L8.0,8.0 L9.0,8.0 L10.0,8.0 L10.0,10.0 L9.0,10.0 L8.0,10.0 L7.0,10.5 L6.0,11.5 L5.0,12.7 L4.0,14.1 L3.0,14.8 L2.0,14.9 L1.0,14.9 L0.0,15.0ZM0.0,21.0 L1.0,21.1 L2.0,21.1 L3.0,21.2 L4.0,21.9 L5.0,23.3 L6.0,24.5 L7.0,25.5 L8.0,26.0 L9.0,26.0 L10.0,26.0 L10.0,28.0 L9.0,28.0 L8.0,28.0 L7.0,28.5 L6.0,29.5 L5.0,30.7 L4.0,32.1 L3.0,32.8 L2.0,32.9 L1.0,32.9 L0.0,33.0Z" fill="#6a6a6a"/></svg><b class="ct" style="left:2245px;top:1031.8px;width:7px;color:#2e2e2e">V</b><i style="left:2252px;top:1024px;width:24px;height:34px;background:#686868"></i><i style="left:2252px;top:1058px;width:24px;height:36px;background:#343434"></i><svg style="left:2252px;top:1058px" width="24" height="36" viewBox="0 0 24 36"><path d="M0.0,6.4 L1.0,5.5 L2.0,4.7 L3.0,2.8 L4.0,1.9 L5.0,0.7 L6.0,2.0 L7.0,3.1 L8.0,3.4 L9.0,5.0 L10.0,4.2 L11.0,3.5 L12.0,4.5 L13.0,4.1 L14.0,3.5 L15.0,3.2 L16.0,3.0 L17.0,2.5 L18.0,2.0 L19.0,2.7 L20.0,2.7 L21.0,3.5 L22.0,5.5 L23.0,6.6 L24.0,8.0 L24.0,10.0 L23.0,11.4 L22.0,12.5 L21.0,14.5 L20.0,15.3 L19.0,15.3 L18.0,16.0 L17.0,15.5 L16.0,15.0 L15.0,14.8 L14.0,14.5 L13.0,13.9 L12.0,13.5 L11.0,14.5 L10.0,13.8 L9.0,13.0 L8.0,14.6 L7.0,14.9 L6.0,16.0 L5.0,17.3 L4.0,16.1 L3.0,15.2 L2.0,13.3 L1.0,12.5 L0.0,11.6ZM0.0,24.4 L1.0,23.5 L2.0,22.7 L3.0,20.8 L4.0,19.9 L5.0,18.7 L6.0,20.0 L7.0,21.1 L8.0,21.4 L9.0,23.0 L10.0,22.2 L11.0,21.5 L12.0,22.5 L13.0,22.1 L14.0,21.5 L15.0,21.2 L16.0,21.0 L17.0,20.5 L18.0,20.0 L19.0,20.7 L20.0,20.7 L21.0,21.5 L22.0,23.5 L23.0,24.6 L24.0,26.0 L24.0,28.0 L23.0,29.4 L22.0,30.5 L21.0,32.5 L20.0,33.3 L19.0,33.3 L18.0,34.0 L17.0,33.5 L16.0,33.0 L15.0,32.8 L14.0,32.5 L13.0,31.9 L12.0,31.5 L11.0,32.5 L10.0,31.8 L9.0,31.0 L8.0,32.6 L7.0,32.9 L6.0,34.0 L5.0,35.3 L4.0,34.1 L3.0,33.2 L2.0,31.3 L1.0,30.5 L0.0,29.6Z" fill="#6a6a6a"/></svg><b class="ct" style="left:2259px;top:1031.8px;width:17px;color:#2e2e2e">VO</b><i style="left:164px;top:1172px;width:64px;height:34px;background:#ec48c8"></i><i style="left:164px;top:1172px;width:64px;height:2px;background:#a02c88"></i><i style="left:164px;top:1205px;width:64px;height:1px;background:#a02c88"></i><i style="left:164px;top:1172px;width:2px;height:34px;background:#a02c88"></i><b class="ct" style="left:170px;top:1180.2px;width:58px;color:#3a0a30;font-size:20px;letter-spacing:.45px">12_NOISE</b><i style="left:228px;top:1172px;width:48px;height:34px;background:#686868"></i><b class="ct" style="left:248.5px;top:1180.2px;width:27.5px;color:#3a3a3a;font-size:20px">12_NOISE</b><i style="left:960px;top:1172px;width:86px;height:34px;background:#ec48c8"></i><i style="left:960px;top:1172px;width:86px;height:2px;background:#a02c88"></i><i style="left:960px;top:1205px;width:86px;height:1px;background:#a02c88"></i><i style="left:960px;top:1172px;width:2px;height:34px;background:#a02c88"></i><b class="ct" style="left:966px;top:1180.2px;width:80px;color:#3a0a30;font-size:20px;letter-spacing:.45px">12_NOISE</b><i style="left:1984px;top:1172px;width:84px;height:34px;background:#ec48c8"></i><i style="left:1984px;top:1172px;width:84px;height:2px;background:#a02c88"></i><i style="left:1984px;top:1205px;width:84px;height:1px;background:#a02c88"></i><i style="left:1984px;top:1172px;width:2px;height:34px;background:#a02c88"></i><b class="ct" style="left:1990px;top:1180.2px;width:78px;color:#3a0a30;font-size:20px;letter-spacing:.45px">12_NOISE</b><i style="left:1690px;top:1210px;width:56px;height:34px;background:#ec48c8"></i><i style="left:1690px;top:1210px;width:56px;height:2px;background:#a02c88"></i><i style="left:1690px;top:1243px;width:56px;height:1px;background:#a02c88"></i><i style="left:1690px;top:1210px;width:2px;height:34px;background:#a02c88"></i><b class="ct" style="left:1696px;top:1218.2px;width:50px;color:#3a0a30;font-size:20px;letter-spacing:.45px">DS_VSH3</b><i style="left:1590px;top:1248px;width:14px;height:34px;background:#ec48c8"></i><i style="left:1590px;top:1248px;width:14px;height:2px;background:#a02c88"></i><i style="left:1590px;top:1281px;width:14px;height:1px;background:#a02c88"></i><i style="left:1590px;top:1248px;width:2px;height:34px;background:#a02c88"></i><i style="left:1594px;top:1250px;width:1px;height:31px;background:#a02c88"></i><i style="left:1598px;top:1250px;width:1px;height:31px;background:#a02c88"></i><i style="left:1601px;top:1250px;width:1px;height:31px;background:#a02c88"></i><i style="left:1378px;top:1286px;width:226px;height:34px;background:#ec48c8"></i><i style="left:1378px;top:1286px;width:226px;height:2px;background:#a02c88"></i><i style="left:1378px;top:1319px;width:226px;height:1px;background:#a02c88"></i><i style="left:1378px;top:1286px;width:2px;height:34px;background:#a02c88"></i><b class="ct" style="left:1384px;top:1294.2px;width:220px;color:#3a0a30;font-size:20px;letter-spacing:.45px">016_FX_Riser_A_16_bars</b><i style="left:340px;top:1324px;width:14px;height:34px;background:#ec48c8"></i><i style="left:340px;top:1324px;width:14px;height:2px;background:#a02c88"></i><i style="left:340px;top:1357px;width:14px;height:1px;background:#a02c88"></i><i style="left:340px;top:1324px;width:2px;height:34px;background:#a02c88"></i><b class="ct" style="left:346px;top:1332.2px;width:8px;color:#3a0a30;font-size:20px;letter-spacing:.45px">BOS</b><i style="left:1818px;top:1324px;width:14px;height:34px;background:#ec48c8"></i><i style="left:1818px;top:1324px;width:14px;height:2px;background:#a02c88"></i><i style="left:1818px;top:1357px;width:14px;height:1px;background:#a02c88"></i><i style="left:1818px;top:1324px;width:2px;height:34px;background:#a02c88"></i><b class="ct" style="left:1824px;top:1332.2px;width:8px;color:#3a0a30;font-size:20px;letter-spacing:.45px">BOS</b><i style="left:1606px;top:1362px;width:56px;height:30px;background:#ec48c8"></i><i style="left:1606px;top:1362px;width:56px;height:2px;background:#a02c88"></i><i style="left:1606px;top:1391px;width:56px;height:1px;background:#a02c88"></i><i style="left:1606px;top:1362px;width:2px;height:30px;background:#a02c88"></i><b class="ct" style="left:1612px;top:1368.2px;width:50px;color:#3a0a30;font-size:20px;letter-spacing:.45px">KSHMR</b><svg style="left:1634px;top:1362px" width="28" height="30"><path d="M0,0 L28,0 L28,30 L20,30 Z" fill="rgba(120,30,110,.35)"/></svg><i style="left:1634px;top:1362px;width:2px;height:6px;background:#140a12"></i><i style="left:1634px;top:1386px;width:2px;height:6px;background:#140a12"></i><i style="left:1036px;top:206px;width:30px;height:4px;background:rgba(0,0,0,.15)"></i><i style="left:1150px;top:206px;width:58px;height:4px;background:rgba(0,0,0,.15)"></i><i style="left:1264px;top:206px;width:312px;height:4px;background:rgba(0,0,0,.15)"></i><i style="left:1718px;top:206px;width:114px;height:4px;background:rgba(0,0,0,.15)"></i><i style="left:1860px;top:206px;width:200px;height:4px;background:rgba(0,0,0,.15)"></i><i style="left:582px;top:212px;width:114px;height:4px;background:rgba(0,0,0,.15)"></i><i style="left:1832px;top:212px;width:24px;height:4px;background:rgba(0,0,0,.15)"></i><i style="left:1946px;top:212px;width:24px;height:4px;background:rgba(0,0,0,.15)"></i><i style="left:2060px;top:212px;width:24px;height:4px;background:rgba(0,0,0,.15)"></i><i style="left:2174px;top:212px;width:24px;height:4px;background:rgba(0,0,0,.15)"></i><i style="left:752px;top:219px;width:228px;height:4px;background:rgba(0,0,0,.15)"></i><i style="left:2074px;top:219px;width:14px;height:4px;background:rgba(0,0,0,.15)"></i><i style="left:2102px;top:219px;width:14px;height:4px;background:rgba(0,0,0,.15)"></i><i style="left:2152px;top:219px;width:22px;height:4px;background:rgba(0,0,0,.15)"></i><i style="left:2188px;top:219px;width:14px;height:4px;background:rgba(0,0,0,.15)"></i><i style="left:2216px;top:219px;width:14px;height:4px;background:rgba(0,0,0,.15)"></i><i style="left:2266px;top:219px;width:20px;height:4px;background:rgba(0,0,0,.15)"></i><i style="left:1662px;top:232px;width:114px;height:4px;background:rgba(0,0,0,.15)"></i><i style="left:242px;top:651px;width:98px;height:7px;background:rgba(0,0,0,.15)"></i><i style="left:242px;top:672px;width:98px;height:7px;background:rgba(0,0,0,.15)"></i><i style="left:354px;top:651px;width:214px;height:7px;background:rgba(0,0,0,.15)"></i><i style="left:354px;top:672px;width:214px;height:7px;background:rgba(0,0,0,.15)"></i><i style="left:582px;top:651px;width:156px;height:7px;background:rgba(0,0,0,.15)"></i><i style="left:582px;top:672px;width:156px;height:7px;background:rgba(0,0,0,.15)"></i><i style="left:752px;top:651px;width:282px;height:7px;background:rgba(0,0,0,.15)"></i><i style="left:752px;top:672px;width:282px;height:7px;background:rgba(0,0,0,.15)"></i><i style="left:1604px;top:651px;width:26px;height:7px;background:rgba(0,0,0,.15)"></i><i style="left:1604px;top:672px;width:26px;height:7px;background:rgba(0,0,0,.15)"></i><i style="left:1630px;top:651px;width:4px;height:7px;background:rgba(0,0,0,.15)"></i><i style="left:1630px;top:672px;width:4px;height:7px;background:rgba(0,0,0,.15)"></i><i style="left:1634px;top:651px;width:10px;height:7px;background:rgba(0,0,0,.15)"></i><i style="left:1634px;top:672px;width:10px;height:7px;background:rgba(0,0,0,.15)"></i><i style="left:1644px;top:651px;width:4px;height:7px;background:rgba(0,0,0,.15)"></i><i style="left:1644px;top:672px;width:4px;height:7px;background:rgba(0,0,0,.15)"></i><i style="left:1648px;top:651px;width:10px;height:7px;background:rgba(0,0,0,.15)"></i><i style="left:1648px;top:672px;width:10px;height:7px;background:rgba(0,0,0,.15)"></i><i style="left:1662px;top:651px;width:42px;height:7px;background:rgba(0,0,0,.15)"></i><i style="left:1662px;top:672px;width:42px;height:7px;background:rgba(0,0,0,.15)"></i><i style="left:1718px;top:651px;width:108px;height:7px;background:rgba(0,0,0,.15)"></i><i style="left:1718px;top:672px;width:108px;height:7px;background:rgba(0,0,0,.15)"></i><i style="left:1832px;top:651px;width:100px;height:7px;background:rgba(0,0,0,.15)"></i><i style="left:1832px;top:672px;width:100px;height:7px;background:rgba(0,0,0,.15)"></i><i style="left:1946px;top:651px;width:110px;height:7px;background:rgba(0,0,0,.15)"></i><i style="left:1946px;top:672px;width:110px;height:7px;background:rgba(0,0,0,.15)"></i><i style="left:2060px;top:651px;width:98px;height:7px;background:rgba(0,0,0,.15)"></i><i style="left:2060px;top:672px;width:98px;height:7px;background:rgba(0,0,0,.15)"></i><i style="left:2174px;top:651px;width:106px;height:7px;background:rgba(0,0,0,.15)"></i><i style="left:2174px;top:672px;width:106px;height:7px;background:rgba(0,0,0,.15)"></i><i style="left:2286px;top:651px;width:100px;height:7px;background:rgba(0,0,0,.15)"></i><i style="left:2286px;top:672px;width:100px;height:7px;background:rgba(0,0,0,.15)"></i><i style="left:128px;top:672px;width:100px;height:7px;background:rgba(0,0,0,.15)"></i><i style="left:1264px;top:661px;width:326px;height:7px;background:rgba(0,0,0,.15)"></i><i style="left:164px;top:1134px;width:64px;height:2px;background:rgba(0,0,0,.12)"></i><i style="left:960px;top:1134px;width:86px;height:2px;background:rgba(0,0,0,.12)"></i><i style="left:1984px;top:1134px;width:84px;height:2px;background:rgba(0,0,0,.12)"></i><i style="left:1690px;top:1137px;width:56px;height:2px;background:rgba(0,0,0,.12)"></i><i style="left:1590px;top:1141px;width:14px;height:2px;background:rgba(0,0,0,.12)"></i><i style="left:1378px;top:1148px;width:226px;height:2px;background:rgba(0,0,0,.12)"></i><i style="left:340px;top:1141px;width:14px;height:2px;background:rgba(0,0,0,.12)"></i><i style="left:1818px;top:1141px;width:14px;height:2px;background:rgba(0,0,0,.12)"></i><i style="left:1606px;top:1144px;width:56px;height:2px;background:rgba(0,0,0,.12)"></i><i style="left:128px;top:1154px;width:100px;height:2px;background:rgba(0,0,0,.12)"></i><i style="left:128px;top:1164px;width:56px;height:2px;background:rgba(0,0,0,.12)"></i><i style="left:198px;top:1150px;width:30px;height:2px;background:rgba(0,0,0,.12)"></i><i style="left:184px;top:1145px;width:58px;height:2px;background:rgba(0,0,0,.12)"></i><i style="left:582px;top:1157px;width:114px;height:2px;background:rgba(0,0,0,.12)"></i><i style="left:1038px;top:1152px;width:56px;height:2px;background:rgba(0,0,0,.12)"></i><i style="left:1038px;top:1161px;width:56px;height:2px;background:rgba(0,0,0,.12)"></i><i style="left:1150px;top:1156px;width:58px;height:2px;background:rgba(0,0,0,.12)"></i><i style="left:1378px;top:1163px;width:212px;height:2px;background:rgba(0,0,0,.12)"></i><i style="left:1492px;top:1154px;width:98px;height:2px;background:rgba(0,0,0,.12)"></i><i style="left:1562px;top:1150px;width:28px;height:2px;background:rgba(0,0,0,.12)"></i><i style="left:1690px;top:1136px;width:56px;height:2px;background:rgba(0,0,0,.12)"></i><i style="left:2060px;top:1154px;width:56px;height:2px;background:rgba(0,0,0,.12)"></i><i style="left:2060px;top:1167px;width:56px;height:2px;background:rgba(0,0,0,.12)"></i><i style="left:2030px;top:1137px;width:86px;height:2px;background:rgba(0,0,0,.12)"></i><i style="left:16px;top:33px;width:270px;height:5px;background:linear-gradient(180deg,rgba(42,138,138,0) 0%,rgba(42,140,140,.55) 60%,rgba(48,150,150,.8) 100%)"></i><i style="left:288px;top:36.6px;width:2400px;height:1.2px;background:#2c7676"></i><i style="left:273.5px;top:14.2px;width:120.5px;height:1.2px;background:#8e3632"></i><i style="left:398.5px;top:14.2px;width:245.5px;height:1.2px;background:#8e3632"></i><i style="left:660px;top:14.2px;width:177.3px;height:1.2px;background:#8e3632"></i><i style="left:853.3px;top:14.2px;width:259.2px;height:1.2px;background:#8e3632"></i><i style="left:1564.9px;top:14.2px;width:241px;height:1.2px;background:#8e3632"></i><i style="left:1821.8px;top:14.2px;width:118.2px;height:1.2px;background:#8e3632"></i><i style="left:1951.4px;top:14.2px;width:122.8px;height:1.2px;background:#8e3632"></i><i style="left:2081px;top:14.2px;width:541px;height:1.2px;background:#8e3632"></i><i style="left:1176.1px;top:15.4px;width:34.1px;height:1.3px;background:#8a4c24"></i><i style="left:1305.7px;top:15.4px;width:65.9px;height:1.3px;background:#8a4c24"></i><i style="left:1435.3px;top:15.4px;width:354.7px;height:1.3px;background:#8a4c24"></i><i style="left:1951.4px;top:15.4px;width:129.6px;height:1.3px;background:#8a4c24"></i><i style="left:2112.8px;top:15.4px;width:227.4px;height:1.3px;background:#8a4c24"></i><i style="left:660px;top:15.4px;width:129.6px;height:1.3px;background:#8a4c24"></i><i style="left:853.3px;top:15.4px;width:259.2px;height:1.3px;background:#8a4c24"></i><i style="left:1887.7px;top:15.4px;width:129.6px;height:1.3px;background:#8a4c24"></i><i style="left:2356.1px;top:15.4px;width:241px;height:1.3px;background:#8a4c24"></i><i style="left:273.5px;top:17.2px;width:111.4px;height:2px;background:#6c4476"></i><i style="left:400.8px;top:17.2px;width:243.3px;height:2px;background:#6c4476"></i><i style="left:660px;top:17.2px;width:177.3px;height:2px;background:#6c4476"></i><i style="left:853.3px;top:17.2px;width:320.6px;height:2px;background:#6c4476"></i><i style="left:1821.8px;top:17.2px;width:29.6px;height:2px;background:#6c4476"></i><i style="left:1851.4px;top:17.2px;width:4.5px;height:2px;background:#6c4476"></i><i style="left:1855.9px;top:17.2px;width:11.4px;height:2px;background:#6c4476"></i><i style="left:1867.3px;top:17.2px;width:4.5px;height:2px;background:#6c4476"></i><i style="left:1871.8px;top:17.2px;width:11.4px;height:2px;background:#6c4476"></i><i style="left:1887.7px;top:17.2px;width:47.7px;height:2px;background:#6c4476"></i><i style="left:1951.4px;top:17.2px;width:122.8px;height:2px;background:#6c4476"></i><i style="left:2081px;top:17.2px;width:113.7px;height:2px;background:#6c4476"></i><i style="left:2210.6px;top:17.2px;width:125px;height:2px;background:#6c4476"></i><i style="left:2340.2px;top:17.2px;width:111.4px;height:2px;background:#6c4476"></i><i style="left:2469.8px;top:17.2px;width:120.5px;height:2px;background:#6c4476"></i><i style="left:2597.1px;top:17.2px;width:24.9px;height:2px;background:#6c4476"></i><i style="left:143.9px;top:17.6px;width:113.7px;height:1.4px;background:#6c4476"></i><i style="left:1435.3px;top:17.2px;width:370.6px;height:2px;background:#6c4476"></i><i style="left:16.6px;top:19.3px;width:241px;height:1px;background:#4f9428"></i><i style="left:16.6px;top:21.3px;width:241px;height:1px;background:#4f9428"></i><i style="left:275.8px;top:21.3px;width:109.1px;height:1px;background:#4f9428"></i><i style="left:400.8px;top:21.3px;width:388.8px;height:1px;background:#4f9428"></i><i style="left:791.9px;top:20.3px;width:61.4px;height:1px;background:#4f9428"></i><i style="left:853.3px;top:21.3px;width:259.2px;height:1px;background:#4f9428"></i><i style="left:1178.4px;top:20.8px;width:627.5px;height:1px;background:#4f9428"></i><i style="left:1564.9px;top:22px;width:241px;height:1px;background:#4f9428"></i><i style="left:1824.1px;top:20.3px;width:63.7px;height:1px;background:#4f9428"></i><i style="left:1956px;top:20.6px;width:641.2px;height:1px;background:#4f9428"></i><i style="left:2597.1px;top:20.3px;width:24.9px;height:1px;background:#4f9428"></i><i style="left:400.8px;top:23.2px;width:388.8px;height:2px;background:#3f92a6"></i><i style="left:853.3px;top:23.2px;width:322.9px;height:2px;background:#3f92a6"></i><i style="left:1564.9px;top:23.2px;width:241px;height:2px;background:#3f92a6"></i><i style="left:1951.4px;top:23.2px;width:645.7px;height:2px;background:#3f92a6"></i><i style="left:660px;top:24.4px;width:129.6px;height:1.2px;background:#3f92a6"></i><i style="left:853.3px;top:24.4px;width:322.9px;height:1.2px;background:#3f92a6"></i><i style="left:2081px;top:24.4px;width:516.1px;height:1.2px;background:#3f92a6"></i><i style="left:143.9px;top:25.8px;width:113.7px;height:1.4px;background:#6482a8"></i><i style="left:400.8px;top:25.8px;width:388.8px;height:1.4px;background:#6482a8"></i><i style="left:853.3px;top:25.8px;width:322.9px;height:1.4px;background:#6482a8"></i><i style="left:1305.7px;top:25.8px;width:500.2px;height:1.4px;background:#6482a8"></i><i style="left:1951.4px;top:25.8px;width:645.7px;height:1.4px;background:#6482a8"></i><i style="left:14.3px;top:26.3px;width:18.2px;height:1px;background:#5a9c34"></i><i style="left:39.3px;top:26.3px;width:22.7px;height:1px;background:#5a9c34"></i><i style="left:78px;top:26.3px;width:13.6px;height:1px;background:#5a9c34"></i><i style="left:103px;top:26.3px;width:27.3px;height:1px;background:#5a9c34"></i><i style="left:143.9px;top:26.3px;width:18.2px;height:1px;background:#5a9c34"></i><i style="left:168.9px;top:26.3px;width:22.7px;height:1px;background:#5a9c34"></i><i style="left:207.6px;top:26.3px;width:13.6px;height:1px;background:#5a9c34"></i><i style="left:232.6px;top:26.3px;width:27.3px;height:1px;background:#5a9c34"></i><i style="left:273.5px;top:26.3px;width:18.2px;height:1px;background:#5a9c34"></i><i style="left:298.5px;top:26.3px;width:22.7px;height:1px;background:#5a9c34"></i><i style="left:337.2px;top:26.3px;width:13.6px;height:1px;background:#5a9c34"></i><i style="left:362.2px;top:26.3px;width:27.3px;height:1px;background:#5a9c34"></i><i style="left:400.8px;top:26.3px;width:18.2px;height:1px;background:#5a9c34"></i><i style="left:425.8px;top:26.3px;width:22.7px;height:1px;background:#5a9c34"></i><i style="left:464.5px;top:26.3px;width:13.6px;height:1px;background:#5a9c34"></i><i style="left:489.5px;top:26.3px;width:27.3px;height:1px;background:#5a9c34"></i><i style="left:530.4px;top:26.3px;width:18.2px;height:1px;background:#5a9c34"></i><i style="left:555.4px;top:26.3px;width:22.7px;height:1px;background:#5a9c34"></i><i style="left:594.1px;top:26.3px;width:13.6px;height:1px;background:#5a9c34"></i><i style="left:619.1px;top:26.3px;width:27.3px;height:1px;background:#5a9c34"></i><i style="left:660px;top:26.3px;width:18.2px;height:1px;background:#5a9c34"></i><i style="left:685px;top:26.3px;width:22.7px;height:1px;background:#5a9c34"></i><i style="left:723.7px;top:26.3px;width:13.6px;height:1px;background:#5a9c34"></i><i style="left:748.7px;top:26.3px;width:27.3px;height:1px;background:#5a9c34"></i><i style="left:1435.3px;top:26.3px;width:18.2px;height:1px;background:#5a9c34"></i><i style="left:1460.3px;top:26.3px;width:22.7px;height:1px;background:#5a9c34"></i><i style="left:1499px;top:26.3px;width:13.6px;height:1px;background:#5a9c34"></i><i style="left:1524px;top:26.3px;width:27.3px;height:1px;background:#5a9c34"></i><i style="left:1564.9px;top:26.3px;width:18.2px;height:1px;background:#5a9c34"></i><i style="left:1589.9px;top:26.3px;width:22.7px;height:1px;background:#5a9c34"></i><i style="left:1628.6px;top:26.3px;width:13.6px;height:1px;background:#5a9c34"></i><i style="left:1653.6px;top:26.3px;width:27.3px;height:1px;background:#5a9c34"></i><i style="left:1694.5px;top:26.3px;width:18.2px;height:1px;background:#5a9c34"></i><i style="left:1719.5px;top:26.3px;width:22.7px;height:1px;background:#5a9c34"></i><i style="left:1758.2px;top:26.3px;width:13.6px;height:1px;background:#5a9c34"></i><i style="left:1783.2px;top:26.3px;width:27.3px;height:1px;background:#5a9c34"></i><i style="left:2081px;top:26.3px;width:18.2px;height:1px;background:#5a9c34"></i><i style="left:2106px;top:26.3px;width:22.7px;height:1px;background:#5a9c34"></i><i style="left:2144.7px;top:26.3px;width:13.6px;height:1px;background:#5a9c34"></i><i style="left:2169.7px;top:26.3px;width:27.3px;height:1px;background:#5a9c34"></i><i style="left:2210.6px;top:26.3px;width:18.2px;height:1px;background:#5a9c34"></i><i style="left:2235.6px;top:26.3px;width:22.7px;height:1px;background:#5a9c34"></i><i style="left:2274.3px;top:26.3px;width:13.6px;height:1px;background:#5a9c34"></i><i style="left:2299.3px;top:26.3px;width:27.3px;height:1px;background:#5a9c34"></i><i style="left:2340.2px;top:26.3px;width:18.2px;height:1px;background:#5a9c34"></i><i style="left:2365.2px;top:26.3px;width:22.7px;height:1px;background:#5a9c34"></i><i style="left:2403.9px;top:26.3px;width:13.6px;height:1px;background:#5a9c34"></i><i style="left:2428.9px;top:26.3px;width:27.3px;height:1px;background:#5a9c34"></i><i style="left:2469.8px;top:26.3px;width:18.2px;height:1px;background:#5a9c34"></i><i style="left:2494.8px;top:26.3px;width:22.7px;height:1px;background:#5a9c34"></i><i style="left:2533.4px;top:26.3px;width:13.6px;height:1px;background:#5a9c34"></i><i style="left:2558.5px;top:26.3px;width:27.3px;height:1px;background:#5a9c34"></i><i style="left:184.8px;top:30.2px;width:72.8px;height:1.3px;background:#8e3a7e"></i><i style="left:1089.7px;top:30.2px;width:97.8px;height:1.3px;background:#8e3a7e"></i><i style="left:2253.8px;top:30.2px;width:95.5px;height:1.3px;background:#8e3a7e"></i><i style="left:1919.6px;top:31.4px;width:63.7px;height:1.3px;background:#8e3a7e"></i><i style="left:1564.9px;top:32.6px;width:256.9px;height:1.3px;background:#8e3a7e"></i><i style="left:1824.1px;top:34px;width:63.7px;height:1.3px;background:#8e3a7e"></i><i style="left:384.9px;top:33.2px;width:15.9px;height:1.3px;background:#8e3a7e"></i><i style="left:2065.1px;top:33.2px;width:15.9px;height:1.3px;background:#8e3a7e"></i><i style="left:650px;top:31.5px;width:17px;height:1.2px;background:#8e3a7e"></i><i style="left:660px;top:33.2px;width:129px;height:1.2px;background:#8e3a7e"></i><i style="left:820px;top:31.5px;width:32px;height:1.2px;background:#8e3a7e"></i><i style="left:790px;top:34.2px;width:62px;height:1.2px;background:#8e3a7e"></i><i style="left:790px;top:35.9px;width:62px;height:1.2px;background:#8e3a7e"></i><i style="left:1089px;top:27px;width:86px;height:1.2px;background:#8e3a7e"></i><i style="left:1144px;top:31.5px;width:31px;height:1.2px;background:#8e3a7e"></i><i style="left:1178px;top:32.2px;width:64px;height:1.2px;background:#8e3a7e"></i><i style="left:1178px;top:34px;width:64px;height:1.2px;background:#8e3a7e"></i><i style="left:1178px;top:35.9px;width:64px;height:1.2px;background:#8e3a7e"></i><i style="left:1322px;top:32.4px;width:15px;height:1.2px;background:#8e3a7e"></i><i style="left:1386px;top:32.4px;width:16px;height:1.2px;background:#8e3a7e"></i><i style="left:1696px;top:32.4px;width:109px;height:1.2px;background:#8e3a7e"></i><i style="left:1564px;top:34.9px;width:246px;height:1.2px;background:#8e3a7e"></i><i style="left:1775px;top:31px;width:30px;height:1.2px;background:#8e3a7e"></i><i style="left:1921px;top:28.3px;width:63px;height:1.2px;background:#8e3a7e"></i><i style="left:2066px;top:29.5px;width:16px;height:1.2px;background:#8e3a7e"></i><i style="left:2202px;top:31.6px;width:16px;height:1.2px;background:#8e3a7e"></i><i style="left:2211px;top:33.5px;width:193px;height:1.2px;background:#8e3a7e"></i><i style="left:2309px;top:31.6px;width:95px;height:1.2px;background:#8e3a7e"></i><i style="left:2340px;top:35px;width:64px;height:1.2px;background:#8e3a7e"></i><i style="left:273px;top:14px;width:2px;height:24px;background:#8c8c8c"></i><i style="left:790px;top:14px;width:2px;height:24px;background:#8c8c8c"></i><i style="left:1176px;top:14px;width:2px;height:24px;background:#8c8c8c"></i><i style="left:1569px;top:14px;width:2px;height:24px;background:#8c8c8c"></i><i style="left:1822px;top:14px;width:2px;height:24px;background:#8c8c8c"></i><i style="left:2340px;top:14px;width:2px;height:24px;background:#8c8c8c"></i><i style="left:14px;top:72px;width:2px;height:12px;background:#707070"></i><i style="left:14px;top:72px;width:4px;height:2px;background:#707070"></i><b class="rn" style="left:23.5px;top:63px">1</b><i style="left:70px;top:82px;width:2px;height:2px;background:#707070"></i><i style="left:128px;top:72px;width:2px;height:12px;background:#707070"></i><i style="left:128px;top:72px;width:4px;height:2px;background:#707070"></i><b class="rn" style="left:137.5px;top:63px">9</b><i style="left:184px;top:82px;width:2px;height:2px;background:#707070"></i><i style="left:242px;top:72px;width:2px;height:12px;background:#707070"></i><i style="left:242px;top:72px;width:4px;height:2px;background:#707070"></i><b class="rn" style="left:251.5px;top:63px">17</b><i style="left:298px;top:82px;width:2px;height:2px;background:#707070"></i><i style="left:354px;top:72px;width:2px;height:12px;background:#707070"></i><i style="left:354px;top:72px;width:4px;height:2px;background:#707070"></i><b class="rn" style="left:363.5px;top:63px">25</b><i style="left:412px;top:82px;width:2px;height:2px;background:#707070"></i><i style="left:468px;top:72px;width:2px;height:12px;background:#707070"></i><i style="left:468px;top:72px;width:4px;height:2px;background:#707070"></i><b class="rn" style="left:477.5px;top:63px">33</b><i style="left:526px;top:82px;width:2px;height:2px;background:#707070"></i><i style="left:582px;top:72px;width:2px;height:12px;background:#707070"></i><i style="left:582px;top:72px;width:4px;height:2px;background:#707070"></i><b class="rn" style="left:591.5px;top:63px">41</b><i style="left:638px;top:82px;width:2px;height:2px;background:#707070"></i><i style="left:696px;top:72px;width:2px;height:12px;background:#707070"></i><i style="left:696px;top:72px;width:4px;height:2px;background:#707070"></i><b class="rn" style="left:705.5px;top:63px">49</b><i style="left:752px;top:82px;width:2px;height:2px;background:#707070"></i><i style="left:810px;top:72px;width:2px;height:12px;background:#707070"></i><i style="left:810px;top:72px;width:4px;height:2px;background:#707070"></i><b class="rn" style="left:819.5px;top:63px">57</b><i style="left:866px;top:82px;width:2px;height:2px;background:#707070"></i><i style="left:924px;top:72px;width:2px;height:12px;background:#707070"></i><i style="left:924px;top:72px;width:4px;height:2px;background:#707070"></i><b class="rn" style="left:933.5px;top:63px">65</b><i style="left:980px;top:82px;width:2px;height:2px;background:#707070"></i><i style="left:1036px;top:72px;width:2px;height:12px;background:#707070"></i><i style="left:1036px;top:72px;width:4px;height:2px;background:#707070"></i><b class="rn" style="left:1045.5px;top:63px">73</b><i style="left:1094px;top:82px;width:2px;height:2px;background:#707070"></i><i style="left:1150px;top:72px;width:2px;height:12px;background:#707070"></i><i style="left:1150px;top:72px;width:4px;height:2px;background:#707070"></i><b class="rn" style="left:1159.5px;top:63px">81</b><i style="left:1208px;top:82px;width:2px;height:2px;background:#707070"></i><i style="left:1264px;top:72px;width:2px;height:12px;background:#707070"></i><i style="left:1264px;top:72px;width:4px;height:2px;background:#707070"></i><b class="rn" style="left:1273.5px;top:63px">89</b><i style="left:1320px;top:82px;width:2px;height:2px;background:#707070"></i><i style="left:1378px;top:72px;width:2px;height:12px;background:#707070"></i><i style="left:1378px;top:72px;width:4px;height:2px;background:#707070"></i><b class="rn" style="left:1387.5px;top:63px">97</b><i style="left:1434px;top:82px;width:2px;height:2px;background:#707070"></i><i style="left:1492px;top:72px;width:2px;height:12px;background:#707070"></i><i style="left:1492px;top:72px;width:4px;height:2px;background:#707070"></i><b class="rn" style="left:1501.5px;top:63px">105</b><i style="left:1548px;top:82px;width:2px;height:2px;background:#707070"></i><i style="left:1604px;top:72px;width:2px;height:12px;background:#707070"></i><i style="left:1604px;top:72px;width:4px;height:2px;background:#707070"></i><b class="rn" style="left:1613.5px;top:63px">113</b><i style="left:1662px;top:82px;width:2px;height:2px;background:#707070"></i><i style="left:1718px;top:72px;width:2px;height:12px;background:#707070"></i><i style="left:1718px;top:72px;width:4px;height:2px;background:#707070"></i><b class="rn" style="left:1727.5px;top:63px">121</b><i style="left:1776px;top:82px;width:2px;height:2px;background:#707070"></i><i style="left:1832px;top:72px;width:2px;height:12px;background:#707070"></i><i style="left:1832px;top:72px;width:4px;height:2px;background:#707070"></i><b class="rn" style="left:1841.5px;top:63px">129</b><i style="left:1890px;top:82px;width:2px;height:2px;background:#707070"></i><i style="left:1946px;top:72px;width:2px;height:12px;background:#707070"></i><i style="left:1946px;top:72px;width:4px;height:2px;background:#707070"></i><b class="rn" style="left:1955.5px;top:63px">137</b><i style="left:2002px;top:82px;width:2px;height:2px;background:#707070"></i><i style="left:2060px;top:72px;width:2px;height:12px;background:#707070"></i><i style="left:2060px;top:72px;width:4px;height:2px;background:#707070"></i><b class="rn" style="left:2069.5px;top:63px">145</b><i style="left:2116px;top:82px;width:2px;height:2px;background:#707070"></i><i style="left:2174px;top:72px;width:2px;height:12px;background:#707070"></i><i style="left:2174px;top:72px;width:4px;height:2px;background:#707070"></i><b class="rn" style="left:2183.5px;top:63px">153</b><i style="left:2230px;top:82px;width:2px;height:2px;background:#707070"></i><i style="left:2286px;top:72px;width:2px;height:12px;background:#707070"></i><i style="left:2286px;top:72px;width:4px;height:2px;background:#707070"></i><b class="rn" style="left:2295.5px;top:63px">161</b><i style="left:2344px;top:82px;width:2px;height:2px;background:#707070"></i><i style="left:2400px;top:72px;width:2px;height:12px;background:#707070"></i><i style="left:2400px;top:72px;width:4px;height:2px;background:#707070"></i><i style="left:1378px;top:84px;width:214px;height:22px;box-sizing:border-box;border:2px solid #9c9c9c;background:#363636"></i><svg style="left:1379px;top:86px" width="22" height="18"><path d="M0,1 L14.5,9 L0,17" fill="none" stroke="#9c9c9c" stroke-width="2"/></svg><svg style="left:1569px;top:86px" width="22" height="18"><path d="M22,1 L7.5,9 L22,17" fill="none" stroke="#9c9c9c" stroke-width="2"/></svg><b class="ll" style="left:35px;top:106px;background:#363636">INTRO</b><b class="ll" style="left:263px;top:106px;background:#363636">DROP</b><b class="ll" style="left:717px;top:106px;background:#363636">PRE BREAK</b><b class="ll" style="left:1057px;top:106px;background:#363636">BREAK</b><b class="ll" style="left:1403px;top:106px;background:#363636">BUILDUP</b><b class="ll" style="left:1625px;top:106px;background:#363636">DROP 2</b><b class="ll" style="left:2081px;top:106px;background:#363636">OUTRO</b><b style="left:2355.5px;top:1392px;font:35px/40px 'Liberation Sans',sans-serif;color:#747474;letter-spacing:-.6px;-webkit-text-stroke:.7px #747474;will-change:auto">8/1</b><i style="left:14px;top:107px;width:2px;height:1329px;background:#a2a2a2"></i><svg style="left:14px;top:105px" width="20" height="24"><path d="M1,1.8 L16.6,11.6 L1,21.4 Z" fill="#5e5e5e" stroke="#9e9e9e" stroke-width="2" stroke-linejoin="miter"/></svg><i style="left:242px;top:107px;width:2px;height:1329px;background:#a2a2a2"></i><svg style="left:242px;top:105px" width="20" height="24"><path d="M1,1.8 L16.6,11.6 L1,21.4 Z" fill="#5e5e5e" stroke="#9e9e9e" stroke-width="2" stroke-linejoin="miter"/></svg><i style="left:696px;top:107px;width:2px;height:1329px;background:#a2a2a2"></i><svg style="left:696px;top:105px" width="20" height="24"><path d="M1,1.8 L16.6,11.6 L1,21.4 Z" fill="#5e5e5e" stroke="#9e9e9e" stroke-width="2" stroke-linejoin="miter"/></svg><i style="left:1036px;top:107px;width:2px;height:1329px;background:#a2a2a2"></i><svg style="left:1036px;top:105px" width="20" height="24"><path d="M1,1.8 L16.6,11.6 L1,21.4 Z" fill="#5e5e5e" stroke="#9e9e9e" stroke-width="2" stroke-linejoin="miter"/></svg><i style="left:1382px;top:107px;width:2px;height:1329px;background:#a2a2a2"></i><svg style="left:1382px;top:105px" width="20" height="24"><path d="M1,1.8 L16.6,11.6 L1,21.4 Z" fill="#5e5e5e" stroke="#9e9e9e" stroke-width="2" stroke-linejoin="miter"/></svg><i style="left:1604px;top:107px;width:2px;height:1329px;background:#a2a2a2"></i><svg style="left:1604px;top:105px" width="20" height="24"><path d="M1,1.8 L16.6,11.6 L1,21.4 Z" fill="#5e5e5e" stroke="#9e9e9e" stroke-width="2" stroke-linejoin="miter"/></svg><i style="left:2060px;top:107px;width:2px;height:1329px;background:#a2a2a2"></i><svg style="left:2060px;top:105px" width="20" height="24"><path d="M1,1.8 L16.6,11.6 L1,21.4 Z" fill="#5e5e5e" stroke="#9e9e9e" stroke-width="2" stroke-linejoin="miter"/></svg><i style="left:2400px;top:107px;width:2px;height:1329px;background:#a2a2a2"></i><svg style="left:2400px;top:105px" width="20" height="24"><path d="M1,1.8 L16.6,11.6 L1,21.4 Z" fill="#5e5e5e" stroke="#9e9e9e" stroke-width="2" stroke-linejoin="miter"/></svg><i style="left:14px;top:132px;width:2px;height:34px;background:#ffffff"></i><i style="left:14px;top:1436px;width:2610px;height:42px;background:#363636;border-bottom-left-radius:5px"></i><i style="left:14px;top:1448px;width:3px;height:2px;background:#7c7c7c"></i><b class="tn" style="left:19.5px;top:1441px">0:00</b><i style="left:56px;top:1436px;width:2px;height:5px;background:#7c7c7c"></i><i style="left:100px;top:1436px;width:2px;height:5px;background:#7c7c7c"></i><i style="left:142px;top:1436px;width:2px;height:5px;background:#7c7c7c"></i><i style="left:186px;top:1436px;width:2px;height:16px;background:#808080"></i><i style="left:186px;top:1450px;width:5px;height:2px;background:#808080"></i><b class="tn" style="left:191.5px;top:1441px">0:20</b><i style="left:228px;top:1436px;width:2px;height:5px;background:#7c7c7c"></i><i style="left:272px;top:1436px;width:2px;height:5px;background:#7c7c7c"></i><i style="left:314px;top:1436px;width:2px;height:5px;background:#7c7c7c"></i><i style="left:358px;top:1436px;width:2px;height:16px;background:#808080"></i><i style="left:358px;top:1450px;width:5px;height:2px;background:#808080"></i><b class="tn" style="left:363.5px;top:1441px">0:40</b><i style="left:400px;top:1436px;width:2px;height:5px;background:#7c7c7c"></i><i style="left:444px;top:1436px;width:2px;height:5px;background:#7c7c7c"></i><i style="left:486px;top:1436px;width:2px;height:5px;background:#7c7c7c"></i><i style="left:530px;top:1436px;width:2px;height:16px;background:#808080"></i><i style="left:530px;top:1450px;width:5px;height:2px;background:#808080"></i><b class="tn" style="left:535.5px;top:1441px">1:00</b><i style="left:572px;top:1436px;width:2px;height:5px;background:#7c7c7c"></i><i style="left:614px;top:1436px;width:2px;height:5px;background:#7c7c7c"></i><i style="left:658px;top:1436px;width:2px;height:5px;background:#7c7c7c"></i><i style="left:700px;top:1436px;width:2px;height:16px;background:#808080"></i><i style="left:700px;top:1450px;width:5px;height:2px;background:#808080"></i><b class="tn" style="left:705.5px;top:1441px">1:20</b><i style="left:744px;top:1436px;width:2px;height:5px;background:#7c7c7c"></i><i style="left:786px;top:1436px;width:2px;height:5px;background:#7c7c7c"></i><i style="left:830px;top:1436px;width:2px;height:5px;background:#7c7c7c"></i><i style="left:872px;top:1436px;width:2px;height:16px;background:#808080"></i><i style="left:872px;top:1450px;width:5px;height:2px;background:#808080"></i><b class="tn" style="left:877.5px;top:1441px">1:40</b><i style="left:916px;top:1436px;width:2px;height:5px;background:#7c7c7c"></i><i style="left:958px;top:1436px;width:2px;height:5px;background:#7c7c7c"></i><i style="left:1002px;top:1436px;width:2px;height:5px;background:#7c7c7c"></i><i style="left:1044px;top:1436px;width:2px;height:16px;background:#808080"></i><i style="left:1044px;top:1450px;width:5px;height:2px;background:#808080"></i><b class="tn" style="left:1049.5px;top:1441px">2:00</b><i style="left:1088px;top:1436px;width:2px;height:5px;background:#7c7c7c"></i><i style="left:1130px;top:1436px;width:2px;height:5px;background:#7c7c7c"></i><i style="left:1172px;top:1436px;width:2px;height:5px;background:#7c7c7c"></i><i style="left:1216px;top:1436px;width:2px;height:16px;background:#808080"></i><i style="left:1216px;top:1450px;width:5px;height:2px;background:#808080"></i><b class="tn" style="left:1221.5px;top:1441px">2:20</b><i style="left:1258px;top:1436px;width:2px;height:5px;background:#7c7c7c"></i><i style="left:1302px;top:1436px;width:2px;height:5px;background:#7c7c7c"></i><i style="left:1344px;top:1436px;width:2px;height:5px;background:#7c7c7c"></i><i style="left:1388px;top:1436px;width:2px;height:16px;background:#808080"></i><i style="left:1388px;top:1450px;width:5px;height:2px;background:#808080"></i><b class="tn" style="left:1393.5px;top:1441px">2:40</b><i style="left:1430px;top:1436px;width:2px;height:5px;background:#7c7c7c"></i><i style="left:1474px;top:1436px;width:2px;height:5px;background:#7c7c7c"></i><i style="left:1516px;top:1436px;width:2px;height:5px;background:#7c7c7c"></i><i style="left:1560px;top:1436px;width:2px;height:16px;background:#808080"></i><i style="left:1560px;top:1450px;width:5px;height:2px;background:#808080"></i><b class="tn" style="left:1565.5px;top:1441px">3:00</b><i style="left:1602px;top:1436px;width:2px;height:5px;background:#7c7c7c"></i><i style="left:1646px;top:1436px;width:2px;height:5px;background:#7c7c7c"></i><i style="left:1688px;top:1436px;width:2px;height:5px;background:#7c7c7c"></i><i style="left:1732px;top:1436px;width:2px;height:16px;background:#808080"></i><i style="left:1732px;top:1450px;width:5px;height:2px;background:#808080"></i><b class="tn" style="left:1737.5px;top:1441px">3:20</b><i style="left:1774px;top:1436px;width:2px;height:5px;background:#7c7c7c"></i><i style="left:1816px;top:1436px;width:2px;height:5px;background:#7c7c7c"></i><i style="left:1860px;top:1436px;width:2px;height:5px;background:#7c7c7c"></i><i style="left:1902px;top:1436px;width:2px;height:16px;background:#808080"></i><i style="left:1902px;top:1450px;width:5px;height:2px;background:#808080"></i><b class="tn" style="left:1907.5px;top:1441px">3:40</b><i style="left:1946px;top:1436px;width:2px;height:5px;background:#7c7c7c"></i><i style="left:1988px;top:1436px;width:2px;height:5px;background:#7c7c7c"></i><i style="left:2032px;top:1436px;width:2px;height:5px;background:#7c7c7c"></i><i style="left:2074px;top:1436px;width:2px;height:16px;background:#808080"></i><i style="left:2074px;top:1450px;width:5px;height:2px;background:#808080"></i><b class="tn" style="left:2079.5px;top:1441px">4:00</b><i style="left:2118px;top:1436px;width:2px;height:5px;background:#7c7c7c"></i><i style="left:2160px;top:1436px;width:2px;height:5px;background:#7c7c7c"></i><i style="left:2204px;top:1436px;width:2px;height:5px;background:#7c7c7c"></i><i style="left:2246px;top:1436px;width:2px;height:16px;background:#808080"></i><i style="left:2246px;top:1450px;width:5px;height:2px;background:#808080"></i><b class="tn" style="left:2251.5px;top:1441px">4:20</b><i style="left:2290px;top:1436px;width:2px;height:5px;background:#7c7c7c"></i><i style="left:2332px;top:1436px;width:2px;height:5px;background:#7c7c7c"></i><i style="left:2374px;top:1436px;width:2px;height:5px;background:#7c7c7c"></i><i style="left:2416px;top:1436px;width:2px;height:5px;background:#7c7c7c"></i><svg style="left:14px;top:1437px" width="10" height="10"><path d="M0,0 L8.5,9 L0,9 Z" fill="#46b8d8"/></svg><i style="left:2416px;top:128px;width:206px;height:1308px;background:#242424"></i><i style="left:2620px;top:132px;width:2px;height:1304px;background:#404040"></i><i style="left:2420px;top:132px;width:196px;height:34px;background:#b9dde9"></i><svg style="left:2423px;top:135px" width="28" height="28"><circle cx="14" cy="14" r="11.8" fill="none" stroke="#000" stroke-width="2"/><path d="M10.2,7.6 L19.6,14 L10.2,20.4 Z" fill="#000"/></svg><b class="th" style="left:2458px;top:139.5px;width:158px;color:#000;letter-spacing:-.2px">KICK</b><i style="left:2420px;top:170px;width:196px;height:70px;background:#e6742e"></i><svg style="left:2423px;top:173px" width="28" height="28"><circle cx="14" cy="14" r="11.8" fill="none" stroke="#3a1a06" stroke-width="2"/><path d="M7.5,10.2 H16.8 M11,14 H21 M11,17.8 H21" stroke="#3a1a06" stroke-width="1.8" fill="none"/></svg><b class="th" style="left:2456px;top:177.5px;width:160px;color:#3a1a06;letter-spacing:-.2px">SYNTHS</b><i style="left:2420px;top:240px;width:8px;height:370px;background:#e6742e"></i><i style="left:2430px;top:244px;width:186px;height:70px;background:#e6742e"></i><svg style="left:2433px;top:247px" width="28" height="28"><circle cx="14" cy="14" r="11.8" fill="none" stroke="#3a1a06" stroke-width="2"/><path d="M7.5,11 L20.5,11 L14,20.3 Z" fill="#3a1a06"/></svg><b class="th" style="left:2466.8px;top:251.5px;width:149.19999999999982px;color:#3a1a06">3 FO4_IFH_sy</b><i style="left:2430px;top:318px;width:186px;height:70px;background:#e6742e"></i><svg style="left:2433px;top:321px" width="28" height="28"><circle cx="14" cy="14" r="11.8" fill="none" stroke="#3a1a06" stroke-width="2"/><path d="M7.5,11 L20.5,11 L14,20.3 Z" fill="#3a1a06"/></svg><b class="th" style="left:2466.8px;top:325.5px;width:149.19999999999982px;color:#3a1a06">4 Ambiance -</b><i style="left:2430px;top:392px;width:186px;height:70px;background:#e6742e"></i><svg style="left:2433px;top:395px" width="28" height="28"><circle cx="14" cy="14" r="11.8" fill="none" stroke="#3a1a06" stroke-width="2"/><path d="M7.5,11 L20.5,11 L14,20.3 Z" fill="#3a1a06"/></svg><b class="th" style="left:2466.8px;top:399.5px;width:149.19999999999982px;color:#3a1a06">5 ELIMINATE_s</b><i style="left:2430px;top:466px;width:186px;height:70px;background:#e6742e"></i><svg style="left:2433px;top:469px" width="28" height="28"><circle cx="14" cy="14" r="11.8" fill="none" stroke="#3a1a06" stroke-width="2"/><path d="M7.5,11 L20.5,11 L14,20.3 Z" fill="#3a1a06"/></svg><b class="th" style="left:2466.8px;top:473.5px;width:149.19999999999982px;color:#3a1a06">6 Audio</b><i style="left:2430px;top:540px;width:186px;height:70px;background:#e6742e"></i><svg style="left:2433px;top:543px" width="28" height="28"><circle cx="14" cy="14" r="11.8" fill="none" stroke="#3a1a06" stroke-width="2"/><path d="M7.5,11 L20.5,11 L14,20.3 Z" fill="#3a1a06"/></svg><b class="th" style="left:2466.8px;top:547.5px;width:149.19999999999982px;color:#3a1a06">7 ELIMINATE_s</b><i style="left:2420px;top:614px;width:196px;height:70px;background:#9b52ab"></i><svg style="left:2423px;top:617px" width="28" height="28"><circle cx="14" cy="14" r="11.8" fill="none" stroke="#2c1134" stroke-width="2"/><path d="M7.5,10.2 H16.8 M11,14 H21 M11,17.8 H21" stroke="#2c1134" stroke-width="1.8" fill="none"/></svg><b class="th" style="left:2456px;top:621.5px;width:160px;color:#2c1134;letter-spacing:-.2px">BASSES</b><i style="left:2420px;top:684px;width:8px;height:222px;background:#9b52ab"></i><i style="left:2430px;top:688px;width:186px;height:70px;background:#9b52ab"></i><svg style="left:2433px;top:691px" width="28" height="28"><circle cx="14" cy="14" r="11.8" fill="none" stroke="#2c1134" stroke-width="2"/><path d="M7.5,11 L20.5,11 L14,20.3 Z" fill="#2c1134"/></svg><b class="th" style="left:2466.8px;top:695.5px;width:149.19999999999982px;color:#2c1134;letter-spacing:-.2px">SUB</b><i style="left:2430px;top:762px;width:186px;height:70px;background:#9b52ab"></i><svg style="left:2433px;top:765px" width="28" height="28"><circle cx="14" cy="14" r="11.8" fill="none" stroke="#2c1134" stroke-width="2"/><path d="M7.5,11 L20.5,11 L14,20.3 Z" fill="#2c1134"/></svg><b class="th" style="left:2466.8px;top:769.5px;width:149.19999999999982px;color:#2c1134">10 Altered Har</b><i style="left:2430px;top:836px;width:186px;height:70px;background:#9b52ab"></i><svg style="left:2433px;top:839px" width="28" height="28"><circle cx="14" cy="14" r="11.8" fill="none" stroke="#2c1134" stroke-width="2"/><path d="M7.5,11 L20.5,11 L14,20.3 Z" fill="#2c1134"/></svg><b class="th" style="left:2466.8px;top:843.5px;width:149.19999999999982px;color:#2c1134;letter-spacing:-.2px">BASS PSY</b><i style="left:2420px;top:910px;width:196px;height:34px;background:#6cc23c"></i><svg style="left:2423px;top:913px" width="28" height="28"><circle cx="14" cy="14" r="11.8" fill="none" stroke="#1a380c" stroke-width="2"/><path d="M9,10.2 H19 M9,14 H19 M9,17.8 H19" stroke="#1a380c" stroke-width="1.8" fill="none"/></svg><b class="th" style="left:2456px;top:917.5px;width:160px;color:#1a380c;letter-spacing:-.2px">DRUMS</b><i style="left:2420px;top:948px;width:196px;height:34px;background:#70e5fb"></i><svg style="left:2423px;top:951px" width="28" height="28"><circle cx="14" cy="14" r="11.8" fill="none" stroke="#14323a" stroke-width="2"/><path d="M9,10.2 H19 M9,14 H19 M9,17.8 H19" stroke="#14323a" stroke-width="1.8" fill="none"/></svg><b class="th" style="left:2456px;top:955.5px;width:160px;color:#14323a;letter-spacing:-.2px">CYMBALS</b><i style="left:2420px;top:986px;width:196px;height:34px;background:#9dc7fc"></i><svg style="left:2423px;top:989px" width="28" height="28"><circle cx="14" cy="14" r="11.8" fill="none" stroke="#1c2a3e" stroke-width="2"/><path d="M9,10.2 H19 M9,14 H19 M9,17.8 H19" stroke="#1c2a3e" stroke-width="1.8" fill="none"/></svg><b class="th" style="left:2456px;top:993.5px;width:160px;color:#1c2a3e;letter-spacing:-.2px">SHAKER</b><i style="left:2420px;top:1024px;width:196px;height:70px;background:#aafa7e"></i><svg style="left:2423px;top:1027px" width="28" height="28"><circle cx="14" cy="14" r="11.8" fill="none" stroke="#203c10" stroke-width="2"/><path d="M7.5,11 L20.5,11 L14,20.3 Z" fill="#203c10"/></svg><b class="th" style="left:2459px;top:1031.5px;width:157px;color:#203c10;letter-spacing:-.2px">VOX</b><i style="left:2420px;top:1098px;width:196px;height:70px;background:#ee46cc"></i><svg style="left:2423px;top:1101px" width="28" height="28"><circle cx="14" cy="14" r="11.8" fill="none" stroke="#3c0c34" stroke-width="2"/><path d="M7.5,10.2 H16.8 M11,14 H21 M11,17.8 H21" stroke="#3c0c34" stroke-width="1.8" fill="none"/></svg><b class="th" style="left:2456px;top:1105.5px;width:160px;color:#3c0c34;letter-spacing:1.5px">FX´S</b><i style="left:2420px;top:1168px;width:8px;height:224px;background:#ee46cc"></i><i style="left:2430px;top:1172px;width:186px;height:34px;background:#ee46cc"></i><svg style="left:2433px;top:1175px" width="28" height="28"><circle cx="14" cy="14" r="11.8" fill="none" stroke="#3c0c34" stroke-width="2"/><path d="M10.2,7.6 L19.6,14 L10.2,20.4 Z" fill="#3c0c34"/></svg><b class="th" style="left:2466.8px;top:1179.5px;width:149.19999999999982px;color:#3c0c34">32 12_NOISE_</b><i style="left:2430px;top:1210px;width:186px;height:34px;background:#ee46cc"></i><svg style="left:2433px;top:1213px" width="28" height="28"><circle cx="14" cy="14" r="11.8" fill="none" stroke="#3c0c34" stroke-width="2"/><path d="M10.2,7.6 L19.6,14 L10.2,20.4 Z" fill="#3c0c34"/></svg><b class="th" style="left:2466.8px;top:1217.5px;width:149.19999999999982px;color:#3c0c34">33 DS_VSH3_f</b><i style="left:2430px;top:1248px;width:186px;height:34px;background:#ee46cc"></i><svg style="left:2433px;top:1251px" width="28" height="28"><circle cx="14" cy="14" r="11.8" fill="none" stroke="#3c0c34" stroke-width="2"/><path d="M10.2,7.6 L19.6,14 L10.2,20.4 Z" fill="#3c0c34"/></svg><b class="th" style="left:2466.8px;top:1255.5px;width:149.19999999999982px;color:#3c0c34">34 REV-FILLS1</b><i style="left:2430px;top:1286px;width:186px;height:34px;background:#ee46cc"></i><svg style="left:2433px;top:1289px" width="28" height="28"><circle cx="14" cy="14" r="11.8" fill="none" stroke="#3c0c34" stroke-width="2"/><path d="M10.2,7.6 L19.6,14 L10.2,20.4 Z" fill="#3c0c34"/></svg><b class="th" style="left:2466.8px;top:1293.5px;width:149.19999999999982px;color:#3c0c34">35 016_FX_Ris</b><i style="left:2430px;top:1324px;width:186px;height:34px;background:#ee46cc"></i><svg style="left:2433px;top:1327px" width="28" height="28"><circle cx="14" cy="14" r="11.8" fill="none" stroke="#3c0c34" stroke-width="2"/><path d="M10.2,7.6 L19.6,14 L10.2,20.4 Z" fill="#3c0c34"/></svg><b class="th" style="left:2466.8px;top:1331.5px;width:149.19999999999982px;color:#3c0c34">36 BOS_SEN_F</b><i style="left:2430px;top:1362px;width:186px;height:30px;background:#ee46cc"></i><svg style="left:2433px;top:1365px" width="28" height="28"><circle cx="14" cy="14" r="11.8" fill="none" stroke="#3c0c34" stroke-width="2"/><path d="M10.2,7.6 L19.6,14 L10.2,20.4 Z" fill="#3c0c34"/></svg><b class="th" style="left:2466.8px;top:1369.5px;width:149.19999999999982px;color:#3c0c34">37 KSHMR_W</b><i style="left:2420px;top:1398px;width:196px;height:34px;background:#8470e0"></i><svg style="left:2423px;top:1401px" width="28" height="28"><circle cx="14" cy="14" r="11.8" fill="none" stroke="#221a46" stroke-width="2"/><path d="M10.2,7.6 L19.6,14 L10.2,20.4 Z" fill="#221a46"/></svg><b class="th" style="left:2463px;top:1405.5px;width:153px;color:#221a46">Main</b><b style="left:2426px;top:58px;width:58px;height:26px;box-sizing:border-box;border:2px solid #171717;border-radius:13px;background:#1f1f1f;color:#c8c8c8;font:19px/22px 'Liberation Sans',sans-serif;text-align:center;-webkit-text-stroke:.4px #c8c8c8">Del</b><i style="left:2506px;top:58px;width:46px;height:26px;box-sizing:border-box;border:2px solid #171717;background:#1f1f1f"></i><svg style="left:2506px;top:58px" width="46" height="26"><path d="M18.7,16.7 L27.1,8.9" stroke="#c4c4c4" stroke-width="2"/><circle cx="18.7" cy="16.7" r="2.9" fill="#c4c4c4"/><circle cx="27.1" cy="8.9" r="2.9" fill="#c4c4c4"/></svg><i style="left:2560px;top:58px;width:46px;height:26px;box-sizing:border-box;border:2px solid #0c0c0c;background:#e07850"></i><svg style="left:2560px;top:58px" width="46" height="26"><rect x="16.3" y="13" width="13.6" height="6.8" fill="#000"/><path d="M19.2,13.5 V11.2 A3.9,3.9 0 0 1 27,11.2 V13.5" fill="none" stroke="#000" stroke-width="2.3"/></svg><svg style="left:2426px;top:94px" width="26" height="26"><circle cx="13" cy="13" r="12" fill="#1f1f1f" stroke="#191919" stroke-width="2"/><path d="M19,12 H12 V6.5 L4,13 L12,19.5 V14 H19 Z" fill="#6e6e6e"/></svg><svg style="left:2458px;top:94px" width="26" height="26"><circle cx="13" cy="13" r="12" fill="#1f1f1f" stroke="#191919" stroke-width="2"/><path d="M7,12 H14 V6.5 L22,13 L14,19.5 V14 H7 Z" fill="#c6c6c6"/></svg><i style="left:2420px;top:1444px;width:30px;height:26px;box-sizing:border-box;border:2px solid #181818;background:#f5b865"></i><svg style="left:2420px;top:1444px" width="30" height="26"><path d="M7.9,10 V16 M11.9,6.5 V19.8 M16,4.4 V21.8 M20,8 V18 M24,10 V16" stroke="#000" stroke-width="1.9"/></svg><i style="left:2456px;top:1444px;width:70px;height:26px;box-sizing:border-box;border:2px solid #151515;background:#1f1f1f"></i><i style="left:2458px;top:1446px;width:20px;height:22px;background:#2d7d8e"></i><b style="left:2464px;top:1445px;font:21px/24px 'Liberation Sans',sans-serif;color:#c4c4c4;-webkit-text-stroke:.25px #c4c4c4">1.00x</b><b style="left:2548px;top:1444px;width:30px;height:26px;box-sizing:border-box;border:2px solid #151515;background:#1f1f1f;font:20px/22px 'Liberation Sans',sans-serif;color:#c6c6c6;text-align:center;-webkit-text-stroke:.4px #c6c6c6">H</b><b style="left:2584px;top:1444px;width:30px;height:26px;box-sizing:border-box;border:2px solid #151515;background:#1f1f1f;font:20px/22px 'Liberation Sans',sans-serif;color:#c6c6c6;text-align:center;-webkit-text-stroke:.4px #c6c6c6">W</b></body></html>
